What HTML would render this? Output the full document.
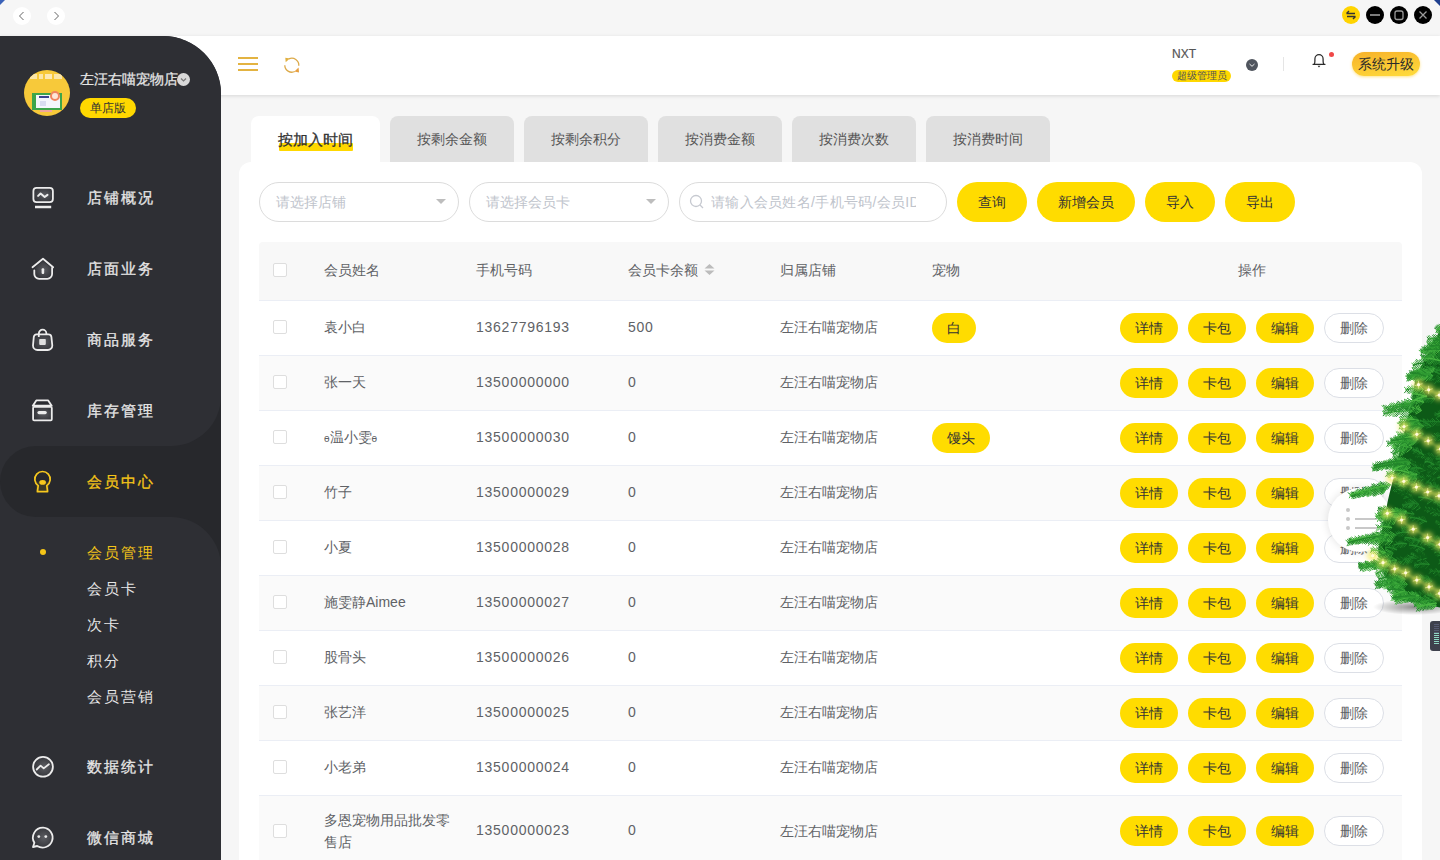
<!DOCTYPE html>
<html><head><meta charset="utf-8">
<style>
*{margin:0;padding:0;box-sizing:border-box}
html,body{width:1440px;height:860px;overflow:hidden;background:#f6f6f6;font-family:"Liberation Sans",sans-serif;position:relative}
.abs{position:absolute}
/* titlebar */
#titlebar{left:0;top:0;width:1440px;height:36px;background:#f6f6f6}
.navc{width:18px;height:18px;border-radius:50%;background:#fff;top:7px}
.winb{width:18px;height:18px;border-radius:50%;top:6px;background:#000}
/* sidebar */
#side{left:0;top:36px;width:221px;height:824px;background:#2e2f34;border-top-right-radius:58px;overflow:hidden;z-index:2}
.mi{left:0;width:221px;height:71px;color:#e6e6e6;font-size:16px;letter-spacing:1px}
.mi .t{position:absolute;left:87px;top:0;line-height:71px}
.mi svg{position:absolute;left:30px;top:24px}
.mt{left:87px;font-size:15px;color:#e6e6e6;letter-spacing:2px;line-height:22px;white-space:nowrap;-webkit-text-stroke-width:.3px}
/* header */
#header{left:0;top:36px;width:1440px;height:59px;background:#fff;box-shadow:0 1px 4px rgba(0,0,0,.13)}
/* tabs */
.tab{top:116px;height:46px;width:124px;background:#e0e0e0;border-radius:8px 8px 0 0;font-size:14px;color:#555;text-align:center;line-height:47px}
#panel{left:239px;top:162px;width:1183px;height:720px;background:#fff;border-radius:12px}
.sel{top:182px;height:40px;border:1px solid #dcdcdc;border-radius:20px;font-size:14px;color:#c0c4cc;line-height:38px;padding-left:16px}
.ybtn{top:182px;height:40px;border-radius:20px;background:#ffdc00;font-size:14px;color:#333;text-align:center;line-height:40px}
/* table */
.row{left:259px;width:1143px;height:55px;border-bottom:1px solid #ebeef5}
.row.st{background:#fafafa}
.c{position:absolute;font-size:14px;color:#606266;line-height:20px}
.num{letter-spacing:.75px}
.cb{position:absolute;left:14px;width:14px;height:14px;border:1px solid #dedede;border-radius:2px;background:#fff}
.ob{position:absolute;top:12px;width:58px;height:30px;border-radius:15px;background:#ffdc00;font-size:14px;color:#333;text-align:center;line-height:30px}
.ob.del{width:60px;background:#fff;border:1px solid #dcdfe6;line-height:28px;color:#606266}
.tag{position:absolute;top:12px;height:30px;border-radius:15px;background:#ffdc00;font-size:14px;color:#333;text-align:center;line-height:30px}
</style></head>
<body>
<div id="titlebar" class="abs"></div>
<div class="abs" style="left:0;top:0;width:0;height:0;border-top:5px solid #3a62b8;border-right:5px solid transparent"></div>
<div class="abs" style="left:1434px;top:0;width:0;height:0;border-top:6px solid #1f3f8f;border-left:6px solid transparent"></div>
<div class="abs navc" style="left:13px"><svg class="abs" style="left:0;top:0" width="18" height="18" viewBox="0 0 18 18"><path d="M10.5 5 L6.5 9 L10.5 13" fill="none" stroke="#666" stroke-width="1"/></svg></div>
<div class="abs navc" style="left:47px"><svg class="abs" style="left:0;top:0" width="18" height="18" viewBox="0 0 18 18"><path d="M7.5 5 L11.5 9 L7.5 13" fill="none" stroke="#666" stroke-width="1"/></svg></div>
<div class="abs winb" style="left:1342px;background:#ffd400"><svg class="abs" style="left:0;top:0" width="18" height="18" viewBox="0 0 18 18"><path d="M4.5 7.5 H13 M4.5 7.5 L7 5" fill="none" stroke="#333" stroke-width="1.4"/><path d="M13.5 10.5 H5 M13.5 10.5 L11 13" fill="none" stroke="#333" stroke-width="1.4"/></svg></div>
<div class="abs winb" style="left:1366px"><svg class="abs" style="left:0;top:0" width="18" height="18" viewBox="0 0 18 18"><path d="M4 9 H14" stroke="#9a9a9a" stroke-width="1.6"/></svg></div>
<div class="abs winb" style="left:1390px"><svg class="abs" style="left:0;top:0" width="18" height="18" viewBox="0 0 18 18"><rect x="5" y="5" width="8" height="8.5" rx="2" fill="none" stroke="#9a9a9a" stroke-width="1.3"/></svg></div>
<div class="abs winb" style="left:1414px"><svg class="abs" style="left:0;top:0" width="18" height="18" viewBox="0 0 18 18"><path d="M5.5 5.5 L12.5 12.5 M12.5 5.5 L5.5 12.5" stroke="#9a9a9a" stroke-width="1.3"/></svg></div>

<div id="side" class="abs"><div class="abs" style="left:121px;top:360px;width:100px;height:170px;background:#27282c"></div><div class="abs" style="left:0;top:0;width:221px;height:410px;background:#2e2f34;border-bottom-right-radius:50px"></div><div class="abs" style="left:0;top:410px;width:221px;height:71px;background:#27282c;border-radius:36px 0 0 36px"></div><div class="abs" style="left:0;top:481px;width:221px;height:400px;background:#2e2f34;border-top-right-radius:50px"></div><div class="abs" style="left:24px;top:34px;width:46px;height:46px;border-radius:50%;background:#f7c93a;overflow:hidden"><div class="abs" style="left:6px;top:4px;width:7px;height:5px;background:#fbe6a8"></div><div class="abs" style="left:15px;top:4px;width:4px;height:5px;background:#fbe6a8"></div><div class="abs" style="left:21px;top:4px;width:7px;height:5px;background:#fde9b5"></div><div class="abs" style="left:30px;top:4px;width:8px;height:5px;background:#fbe6a8"></div><div class="abs" style="left:8px;top:23px;width:30px;height:17px;background:#f4f6fb;border:2px solid #3da54a;border-left-width:4px"></div><div class="abs" style="left:15px;top:26px;width:10px;height:2px;background:#3b4690"></div><div class="abs" style="left:16px;top:31px;width:6px;height:5px;background:#d8dcef"></div><div class="abs" style="left:26px;top:21px;width:10px;height:10px;border-radius:50%;border:2px solid #f0855e;background:#fde6d8"></div><div class="abs" style="left:16px;top:40px;width:12px;height:2px;background:#f2a69a"></div></div><div class="abs" style="left:80px;top:33px;font-size:14px;color:#e6e6e6;line-height:20px;-webkit-text-stroke-width:.25px">左汪右喵宠物店</div><div class="abs" style="left:177px;top:37px;width:13px;height:13px;border-radius:50%;background:#d9d9d9"><svg class="abs" style="left:2px;top:2px" width="9" height="9" viewBox="0 0 9 9"><path d="M2 3.5 L4.5 6 L7 3.5" fill="none" stroke="#777" stroke-width="1.2"/></svg></div><div class="abs" style="left:80px;top:62px;width:56px;height:20px;border-radius:10px;background:#ffd800;font-size:12px;color:#333;text-align:center;line-height:20px">单店版</div><svg class="abs" style="left:28px;top:146px" width="30" height="30" viewBox="0 0 30 30"><defs><radialGradient id="ig" cx="0.55" cy="0.5" r="0.6"><stop offset="0" stop-color="#5c5d62"/><stop offset="1" stop-color="#303136"/></radialGradient></defs><rect x="5.4" y="5.8" width="19.5" height="14.3" rx="3.2" fill="url(#ig)" stroke="#ececec" stroke-width="1.8"/><path d="M10.1 13.9 L12.6 11.5 L16.7 15 L19.5 12.9" fill="none" stroke="#ececec" stroke-width="2" stroke-linecap="round" stroke-linejoin="round"/><path d="M7 25 H23.2" stroke="#ececec" stroke-width="2.4"/></svg><div class="abs mt" style="top:151px">店铺概况</div><svg class="abs" style="left:28px;top:217px" width="30" height="30" viewBox="0 0 30 30"><path d="M15 8 L23.5 15 V21 A4.5 4.5 0 0 1 19 25.5 H11 A4.5 4.5 0 0 1 6.5 21 V15Z" fill="url(#ig)"/><path d="M4.5 14.3 L15 5.8 L25.1 14.3" fill="none" stroke="#ececec" stroke-width="1.8" stroke-linecap="round" stroke-linejoin="round"/><path d="M6.3 17.3 V21 A4.8 4.8 0 0 0 11.1 25.8 H19.3 A4.8 4.8 0 0 0 24.1 21 V14.8" fill="none" stroke="#ececec" stroke-width="1.8" stroke-linecap="round"/><rect x="13.6" y="15.3" width="2.6" height="5.6" rx="1" fill="#ececec"/></svg><div class="abs mt" style="top:222px">店面业务</div><svg class="abs" style="left:28px;top:288px" width="30" height="30" viewBox="0 0 30 30"><path d="M10.8 11.5 V9.5 A3.8 3.8 0 0 1 18.4 9.5 V11.8" fill="none" stroke="#ececec" stroke-width="1.8"/><path d="M8.5 10.3 H20.5 A3 3 0 0 1 23.4 12.8 L24.3 21.5 A4.5 4.5 0 0 1 19.8 26 H9.5 A4.5 4.5 0 0 1 5 21.5 L5.8 12.8 A3 3 0 0 1 8.5 10.3Z" fill="url(#ig)" stroke="#ececec" stroke-width="1.8" stroke-linejoin="round"/><path d="M10.8 9.5 V13" stroke="#ececec" stroke-width="1.8"/><rect x="11.2" y="15" width="6.6" height="5.9" rx="0.8" fill="#e0e0e0"/></svg><div class="abs mt" style="top:293px">商品服务</div><svg class="abs" style="left:28px;top:359px" width="30" height="30" viewBox="0 0 30 30"><path d="M4.8 10.7 L8.3 5.4 H20.2 L23.7 10.7Z" fill="#2a2b30" stroke="#ececec" stroke-width="1.8" stroke-linejoin="round"/><rect x="5.1" y="11.9" width="18.7" height="13.4" rx="1" fill="url(#ig)" stroke="#ececec" stroke-width="1.8"/><rect x="9.4" y="16" width="9.4" height="3.2" rx="1.6" fill="#ececec"/></svg><div class="abs mt" style="top:364px">库存管理</div><svg class="abs" style="left:28px;top:430px" width="30" height="30" viewBox="0 0 30 30"><path d="M8 17 Q14.5 12 21 17 V25 H8Z" fill="#3d3a26"/><path d="M10.2 19.6 A7.7 7.7 0 1 1 18.8 19.6 L19.6 25.7 H9.4 Z" fill="none" stroke="#f7c81e" stroke-width="1.7" stroke-linejoin="round"/><ellipse cx="14.6" cy="16.4" rx="3.3" ry="2.4" fill="#f7c81e"/></svg><div class="abs mt" style="top:435px;color:#f5c518">会员中心</div><div class="abs mt" style="top:506px;color:#f5c518;-webkit-text-stroke-width:0">会员管理</div><div class="abs mt" style="top:542px;color:#e6e6e6;-webkit-text-stroke-width:0">会员卡</div><div class="abs mt" style="top:578px;color:#e6e6e6;-webkit-text-stroke-width:0">次卡</div><div class="abs mt" style="top:614px;color:#e6e6e6;-webkit-text-stroke-width:0">积分</div><div class="abs mt" style="top:650px;color:#e6e6e6;-webkit-text-stroke-width:0">会员营销</div><div class="abs" style="left:40px;top:513px;width:6px;height:6px;border-radius:50%;background:#f5c518"></div><svg class="abs" style="left:28px;top:715px" width="30" height="30" viewBox="0 0 30 30"><circle cx="15" cy="15.8" r="9.9" fill="url(#ig)" stroke="#ececec" stroke-width="1.8"/><path d="M8.7 18.5 L12.6 14.6 L15.7 17.4 L20.9 13.3" fill="none" stroke="#ececec" stroke-width="1.8" stroke-linecap="round" stroke-linejoin="round"/></svg><div class="abs mt" style="top:720px">数据统计</div><svg class="abs" style="left:28px;top:786px" width="30" height="30" viewBox="0 0 30 30"><path d="M15.2 5.6 A10 10 0 1 1 9.2 24 L5 25 L6.4 20.8 A10 10 0 0 1 15.2 5.6Z" fill="url(#ig)" stroke="#ececec" stroke-width="1.8" stroke-linejoin="round"/><circle cx="10.8" cy="14.6" r="1.4" fill="#ececec"/><circle cx="17.8" cy="14.6" r="1.4" fill="#ececec"/></svg><div class="abs mt" style="top:791px">微信商城</div>
</div>

<div id="header" class="abs"></div>
<svg class="abs" style="left:237px;top:56px" width="22" height="16" viewBox="0 0 22 16"><path d="M1 2 H21 M1 8 H21 M1 14 H21" stroke="#e3b341" stroke-width="2.2"/></svg>
<svg class="abs" style="left:282px;top:55px" width="20" height="20" viewBox="0 0 20 20"><path d="M6.8 3.9 A7 7 0 0 1 16.8 10.8" fill="none" stroke="#dcaa4a" stroke-width="1.3"/><path d="M2.8 10.2 A7 7 0 0 0 12.8 16.5" fill="none" stroke="#dcaa4a" stroke-width="1.3"/><path d="M3.3 2.8 L7.8 3.4 L3.7 7.3Z" fill="#e0b040"/><path d="M17 17.4 L12.4 16.4 L16.6 12.6Z" fill="#e8a040"/></svg>
<div class="abs" style="left:1172px;top:47px;font-size:12px;color:#555;line-height:15px;-webkit-text-stroke:.2px #555">NXT</div>
<div class="abs" style="left:1172px;top:70px;width:59px;height:12px;border-radius:6px;background:#ffd800;font-size:10px;color:#555;line-height:12px;text-align:center">超级管理员</div>
<div class="abs" style="left:1246px;top:59px;width:12px;height:12px;border-radius:50%;background:#50555e"><svg class="abs" style="left:1px;top:1px" width="10" height="10" viewBox="0 0 10 10"><path d="M2.5 4 L5 6.3 L7.5 4" fill="none" stroke="#eee" stroke-width="1"/></svg></div>
<div class="abs" style="left:1283px;top:57px;width:1px;height:14px;background:#e5e5e5"></div>
<svg class="abs" style="left:1311px;top:53px" width="16" height="16" viewBox="0 0 16 16"><path d="M2 11.3 H14 M3.2 11.3 Q3.9 10 3.9 8 V5.9 A4.1 4.3 0 0 1 12.1 5.9 V8 Q12.1 10 12.8 11.3" fill="none" stroke="#2a2a2a" stroke-width="1.25" stroke-linecap="round"/><path d="M6.6 12.7 H9.4 L8 14.4Z" fill="#2a2a2a"/></svg>
<div class="abs" style="left:1329px;top:52px;width:5px;height:5px;border-radius:50%;background:#f04848"></div>
<div class="abs" style="left:1352px;top:52px;width:68px;height:24px;border-radius:12px;background:linear-gradient(170deg,#f7b22a,#ffdc3c);box-shadow:0 1px 3px rgba(255,196,0,.45);font-size:14px;color:#2a2a2a;line-height:24px;text-align:center">系统升级</div>

<div class="abs tab" style="left:251px;width:129px;background:#fff;color:#222;font-weight:bold;font-size:15px"></div>
<div class="abs" style="left:279px;top:143px;width:74px;height:8px;background:#ffd800;border-radius:1px"></div>
<div class="abs" style="left:278px;top:129px;font-size:15px;color:#2a2a2a;line-height:22px;-webkit-text-stroke:.3px #333;color:#333">按加入时间</div>
<div class="abs tab" style="left:390px">按剩余金额</div>
<div class="abs tab" style="left:524px">按剩余积分</div>
<div class="abs tab" style="left:658px">按消费金额</div>
<div class="abs tab" style="left:792px">按消费次数</div>
<div class="abs tab" style="left:926px">按消费时间</div>

<div id="panel" class="abs"></div>
<div class="abs sel" style="left:259px;width:200px">请选择店铺</div>
<div class="abs" style="left:436px;top:199px;width:0;height:0;border-left:5px solid transparent;border-right:5px solid transparent;border-top:5px solid #bdbdbd"></div>
<div class="abs sel" style="left:469px;width:200px">请选择会员卡</div>
<div class="abs" style="left:646px;top:199px;width:0;height:0;border-left:5px solid transparent;border-right:5px solid transparent;border-top:5px solid #bdbdbd"></div>
<div class="abs sel" style="left:679px;width:268px;padding-left:31px"><div style="width:205px;overflow:hidden;white-space:nowrap;letter-spacing:.3px">请输入会员姓名/手机号码/会员ID</div></div>
<svg class="abs" style="left:689px;top:194px" width="16" height="16" viewBox="0 0 16 16"><circle cx="7" cy="7" r="5.5" fill="none" stroke="#c6c9d0" stroke-width="1.3"/><path d="M11 11 L14 14" stroke="#c6c9d0" stroke-width="1.3"/></svg>
<div class="abs ybtn" style="left:957px;width:70px">查询</div>
<div class="abs ybtn" style="left:1037px;width:98px">新增会员</div>
<div class="abs ybtn" style="left:1145px;width:70px">导入</div>
<div class="abs ybtn" style="left:1225px;width:70px">导出</div>

<div id="table"><div class="abs row" style="top:242px;height:59px;background:#f8f8f8;border-radius:4px 4px 0 0"><div class="cb" style="top:21px"></div><div class="c" style="left:65px;top:18px">会员姓名</div><div class="c" style="left:217px;top:18px">手机号码</div><div class="c" style="left:369px;top:18px">会员卡余额</div><svg class="abs" style="left:445px;top:21px" width="11" height="13" viewBox="0 0 11 13"><path d="M5.5 1 L10.5 5.5 H0.5Z M5.5 12 L10.5 7.5 H0.5Z" fill="#bcbcbc"/></svg><div class="c" style="left:521px;top:18px">归属店铺</div><div class="c" style="left:673px;top:18px">宠物</div><div class="c" style="left:979px;top:18px">操作</div></div><div class="abs row" style="top:301px"><div class="cb" style="top:19px"></div><div class="c" style="left:65px;top:16px">袁小白</div><div class="c num" style="left:217px;top:16px">13627796193</div><div class="c num" style="left:369px;top:16px">500</div><div class="c" style="left:521px;top:16px">左汪右喵宠物店</div><div class="tag" style="left:673px;width:44px">白</div><div class="ob" style="left:861px">详情</div><div class="ob" style="left:929px">卡包</div><div class="ob" style="left:997px">编辑</div><div class="ob del" style="left:1065px">删除</div></div><div class="abs row st" style="top:356px"><div class="cb" style="top:19px"></div><div class="c" style="left:65px;top:16px">张一天</div><div class="c num" style="left:217px;top:16px">13500000000</div><div class="c num" style="left:369px;top:16px">0</div><div class="c" style="left:521px;top:16px">左汪右喵宠物店</div><div class="ob" style="left:861px">详情</div><div class="ob" style="left:929px">卡包</div><div class="ob" style="left:997px">编辑</div><div class="ob del" style="left:1065px">删除</div></div><div class="abs row" style="top:411px"><div class="cb" style="top:19px"></div><div class="c" style="left:65px;top:16px"><span style='font-size:10px'>ɵ</span>温小雯<span style='font-size:10px'>ɵ</span></div><div class="c num" style="left:217px;top:16px">13500000030</div><div class="c num" style="left:369px;top:16px">0</div><div class="c" style="left:521px;top:16px">左汪右喵宠物店</div><div class="tag" style="left:673px;width:58px">馒头</div><div class="ob" style="left:861px">详情</div><div class="ob" style="left:929px">卡包</div><div class="ob" style="left:997px">编辑</div><div class="ob del" style="left:1065px">删除</div></div><div class="abs row st" style="top:466px"><div class="cb" style="top:19px"></div><div class="c" style="left:65px;top:16px">竹子</div><div class="c num" style="left:217px;top:16px">13500000029</div><div class="c num" style="left:369px;top:16px">0</div><div class="c" style="left:521px;top:16px">左汪右喵宠物店</div><div class="ob" style="left:861px">详情</div><div class="ob" style="left:929px">卡包</div><div class="ob" style="left:997px">编辑</div><div class="ob del" style="left:1065px">删除</div></div><div class="abs row" style="top:521px"><div class="cb" style="top:19px"></div><div class="c" style="left:65px;top:16px">小夏</div><div class="c num" style="left:217px;top:16px">13500000028</div><div class="c num" style="left:369px;top:16px">0</div><div class="c" style="left:521px;top:16px">左汪右喵宠物店</div><div class="ob" style="left:861px">详情</div><div class="ob" style="left:929px">卡包</div><div class="ob" style="left:997px">编辑</div><div class="ob del" style="left:1065px">删除</div></div><div class="abs row st" style="top:576px"><div class="cb" style="top:19px"></div><div class="c" style="left:65px;top:16px">施雯静Aimee</div><div class="c num" style="left:217px;top:16px">13500000027</div><div class="c num" style="left:369px;top:16px">0</div><div class="c" style="left:521px;top:16px">左汪右喵宠物店</div><div class="ob" style="left:861px">详情</div><div class="ob" style="left:929px">卡包</div><div class="ob" style="left:997px">编辑</div><div class="ob del" style="left:1065px">删除</div></div><div class="abs row" style="top:631px"><div class="cb" style="top:19px"></div><div class="c" style="left:65px;top:16px">股骨头</div><div class="c num" style="left:217px;top:16px">13500000026</div><div class="c num" style="left:369px;top:16px">0</div><div class="c" style="left:521px;top:16px">左汪右喵宠物店</div><div class="ob" style="left:861px">详情</div><div class="ob" style="left:929px">卡包</div><div class="ob" style="left:997px">编辑</div><div class="ob del" style="left:1065px">删除</div></div><div class="abs row st" style="top:686px"><div class="cb" style="top:19px"></div><div class="c" style="left:65px;top:16px">张艺洋</div><div class="c num" style="left:217px;top:16px">13500000025</div><div class="c num" style="left:369px;top:16px">0</div><div class="c" style="left:521px;top:16px">左汪右喵宠物店</div><div class="ob" style="left:861px">详情</div><div class="ob" style="left:929px">卡包</div><div class="ob" style="left:997px">编辑</div><div class="ob del" style="left:1065px">删除</div></div><div class="abs row" style="top:741px"><div class="cb" style="top:19px"></div><div class="c" style="left:65px;top:16px">小老弟</div><div class="c num" style="left:217px;top:16px">13500000024</div><div class="c num" style="left:369px;top:16px">0</div><div class="c" style="left:521px;top:16px">左汪右喵宠物店</div><div class="ob" style="left:861px">详情</div><div class="ob" style="left:929px">卡包</div><div class="ob" style="left:997px">编辑</div><div class="ob del" style="left:1065px">删除</div></div><div class="abs row st" style="top:796px;height:70px"><div class="cb" style="top:28px"></div><div class="c" style="left:65px;top:13px;width:135px;line-height:22px">多恩宠物用品批发零售店</div><div class="c num" style="left:217px;top:24px">13500000023</div><div class="c num" style="left:369px;top:24px">0</div><div class="c" style="left:521px;top:25px">左汪右喵宠物店</div><div class="ob" style="left:861px;top:20px">详情</div><div class="ob" style="left:929px;top:20px">卡包</div><div class="ob" style="left:997px;top:20px">编辑</div><div class="ob del" style="left:1065px;top:20px">删除</div></div></div>
<div class="abs" style="left:1328px;top:488px;width:64px;height:64px;border-radius:50%;background:#fff;box-shadow:0 0 8px rgba(0,0,0,.12)"></div>
<div class="abs" style="left:1346px;top:508px;width:4px;height:4px;border-radius:50%;background:#c8c8c8"></div>
<div class="abs" style="left:1346px;top:517px;width:4px;height:4px;border-radius:50%;background:#c8c8c8"></div>
<div class="abs" style="left:1346px;top:526px;width:4px;height:4px;border-radius:50%;background:#c8c8c8"></div>
<div class="abs" style="left:1355px;top:518px;width:22px;height:2px;background:#c8c8c8"></div>
<div class="abs" style="left:1355px;top:527px;width:22px;height:2px;background:#c8c8c8"></div>
<div class="abs" style="left:1430px;top:621px;width:14px;height:30px;border-radius:3px;background:#3e414c"><div class="abs" style="left:4px;top:3px;width:5px;height:9px;background:repeating-linear-gradient(#565b72 0 1px,transparent 1px 2px)"></div><div class="abs" style="left:4px;top:12px;width:5px;height:11px;background:repeating-linear-gradient(#8fd8c4 0 1px,transparent 1px 2px)"></div></div>
<svg id="tree" class="abs" style="left:1330px;top:310px" width="110" height="320" viewBox="0 0 110 320"><defs><radialGradient id="sh" cx="0.5" cy="0.5" r="0.5"><stop offset="0" stop-color="#000" stop-opacity=".45"/><stop offset="1" stop-color="#000" stop-opacity="0"/></radialGradient><filter id="bl" x="-3" y="-3" width="7" height="7"><feGaussianBlur stdDeviation="2.5"/></filter><filter id="bl2" x="-1" y="-1" width="3" height="3"><feGaussianBlur stdDeviation="1.2"/></filter></defs><ellipse cx="85" cy="297" rx="42" ry="8" fill="url(#sh)"/><polygon points="112.0,16.0 110.5,19.0 109.0,22.0 107.5,25.0 106.0,28.0 104.5,31.0 103.0,34.0 101.5,37.0 100.0,40.0 98.5,43.0 96.9,46.0 95.1,49.0 93.4,52.0 91.7,55.0 90.0,58.0 88.3,61.0 86.6,64.0 85.7,67.0 85.2,70.0 84.7,73.0 84.2,76.0 83.8,79.0 83.3,82.0 82.8,85.0 82.3,88.0 81.8,91.0 81.0,94.0 80.3,97.0 79.6,100.0 78.9,103.0 78.2,106.0 77.4,109.0 76.7,112.0 76.0,115.0 75.3,118.0 74.6,121.0 73.8,124.0 73.1,127.0 72.4,130.0 71.7,133.0 71.0,136.0 70.2,139.0 69.5,142.0 68.8,145.0 68.1,148.0 67.4,151.0 66.6,154.0 65.9,157.0 65.2,160.0 64.5,163.0 63.8,166.0 63.0,169.0 62.3,172.0 61.6,175.0 60.9,178.0 60.2,181.0 59.4,184.0 58.7,187.0 58.0,190.0 57.4,193.0 56.8,196.0 56.2,199.0 55.6,202.0 55.0,205.0 54.4,208.0 53.8,211.0 53.2,214.0 52.6,217.0 52.0,220.0 51.4,223.0 50.8,226.0 50.2,229.0 49.6,232.0 49.0,235.0 48.4,238.0 48.2,241.0 49.0,244.0 49.7,247.0 50.4,250.0 51.1,253.0 51.8,256.0 52.6,259.0 53.3,262.0 54.0,265.0 56.2,268.0 58.3,271.0 60.5,274.0 62.6,277.0 64.8,280.0 67.0,283.0 69.1,286.0 71.3,289.0 82.5,292.0 98.2,295.0 112,298 112,16" fill="#0d5a17"/><path d="M119.1 198.0Q111.1 192.1 103.0 190.1M120.5 195.2Q112.7 190.7 104.9 190.3M125.9 254.9Q117.6 251.3 109.3 251.8M124.7 34.1Q118.9 29.3 113.2 28.5M81.9 217.5Q76.6 216.3 71.2 219.1M114.3 125.9Q104.5 125.1 94.8 128.3M122.6 135.5Q115.1 134.3 107.5 137.1M122.5 219.1Q113.9 213.3 105.3 211.5M91.4 249.7Q85.8 244.8 80.2 244.0M116.7 232.5Q110.3 228.1 103.9 227.6M120.2 248.7Q112.4 243.0 104.7 241.3M83.2 250.1Q76.0 248.9 68.8 251.7M130.3 256.8Q122.2 252.9 114.1 252.9M72.8 205.8Q65.8 204.5 58.8 207.2M123.7 49.5Q116.1 44.1 108.6 42.7M113.8 157.9Q108.7 153.9 103.7 154.0M123.7 54.2Q118.2 51.2 112.7 52.2M102.1 271.1Q95.7 267.2 89.3 267.4M115.3 68.1Q106.6 67.6 97.9 71.1M98.6 230.9Q89.0 230.1 79.4 233.4M77.9 205.4Q70.7 201.3 63.6 201.3M96.6 284.4Q88.3 281.5 80.0 282.6M98.7 292.7Q91.2 287.2 83.7 285.8M126.9 181.4Q119.5 178.3 112.1 179.2M129.4 62.9Q120.2 57.9 111.0 56.8M137.1 286.6Q127.4 286.3 117.8 289.9M90.4 197.9Q84.4 194.5 78.4 195.0M94.0 180.7Q84.7 177.3 75.3 178.0M96.0 168.5Q88.1 165.9 80.1 167.2M114.8 103.8Q109.6 102.8 104.5 105.9M117.3 152.0Q111.9 147.3 106.4 146.6M110.2 179.2Q103.1 173.6 95.9 172.0M114.8 263.8Q107.2 260.6 99.6 261.3M107.4 290.0Q99.8 284.9 92.2 283.9" stroke="#17701f" stroke-width="1.3" fill="none"/><path d="M119.1 198.0l-6.3 2.1M115.5 196.3l-4.6 1.5M113.7 195.4l-4.5 1.5M110.2 193.6l-1.0 -3.1M108.4 192.7l-1.4 -4.0M106.6 191.8l-1.2 -3.4M104.8 191.0l-0.8 -2.3M127.0 229.0l-4.5 5.3M127.0 229.0l-5.3 -4.5M125.1 229.2l-4.1 4.9M121.2 229.5l-2.2 2.6M125.9 107.5l-3.9 3.8M118.5 107.3l-2.2 2.1M118.5 107.3l-2.1 -2.2M116.6 107.3l-2.2 2.1M74.7 250.2l-4.4 -3.4M70.9 250.7l-4.4 -3.3M68.9 251.0l-3.3 4.4M67.0 251.2l-3.4 4.5M61.2 252.0l-2.8 -2.1M57.4 252.6l-1.7 2.2M57.4 252.6l-2.2 -1.7M104.1 288.2l-3.4 1.3M88.2 243.7l-1.3 -3.9M74.9 178.6l-3.1 3.2M73.0 178.6l-4.1 -4.0M71.0 178.7l-2.9 3.1M71.0 178.7l-3.1 -2.9M67.2 178.8l-2.8 -2.7M120.5 195.2l-2.1 -4.1M118.8 194.6l-3.9 2.0M117.1 194.1l-5.6 2.9M117.1 194.1l-2.9 -5.6M115.3 193.6l-3.1 1.6M113.6 193.0l-3.4 1.8M108.4 191.4l-3.2 1.6M122.2 254.2l-5.1 3.5M116.7 253.2l-4.2 2.9M113.0 252.5l-2.2 1.5M94.0 145.4l-4.9 1.6M87.4 142.0l-4.7 1.5M85.8 141.1l-0.8 -2.5M84.2 140.2l-2.7 0.8M124.7 34.1l-1.5 -4.5M119.7 31.7l-3.0 1.0M114.8 29.3l-2.7 0.9M127.0 24.1l-2.8 3.7M117.8 25.3l-2.6 3.4M78.4 218.0l-2.9 -2.1M76.6 218.3l-3.6 -2.6M74.8 218.6l-3.8 -2.8M73.0 218.9l-1.6 2.1M63.0 239.1l-4.6 3.2M57.0 237.9l-1.4 -2.1M112.0 181.4l-4.5 1.5M110.3 180.6l-2.0 -5.8M107.0 179.0l-4.7 1.6M107.0 179.0l-1.6 -4.7M102.1 176.5l-1.2 -3.6M112.3 126.1l-5.0 -3.9M108.4 126.6l-3.4 4.4M106.5 126.8l-2.5 3.2M98.7 127.8l-2.1 2.7M98.7 127.8l-2.7 -2.1M111.5 35.5l-3.0 1.1M102.9 64.7l-3.7 -3.1M99.2 65.0l-2.2 2.7M99.2 65.0l-2.7 -2.2M97.4 65.2l-1.8 -1.5M111.6 204.0l-1.9 -3.5M109.8 203.4l-5.1 2.7M109.8 203.4l-2.7 -5.1M104.3 201.7l-2.3 -4.3M100.6 200.6l-3.6 1.9M89.5 131.4l-3.9 -4.6M87.4 131.2l-2.7 -3.2M83.2 130.8l-3.1 -3.7M81.1 130.6l-3.0 2.5M120.7 135.7l-4.0 5.0M115.1 136.3l-2.3 2.9M111.3 136.7l-2.8 3.4M109.4 136.9l-1.5 1.8M119.1 217.6l-5.1 1.9M113.9 215.3l-1.8 -4.6M112.2 214.5l-1.2 -3.3M107.0 212.2l-0.8 -2.1M91.4 249.7l-1.5 -4.5M87.7 247.8l-3.2 1.0M85.8 246.8l-3.4 1.1M85.8 246.8l-1.1 -3.4M93.7 268.4l-4.2 3.4M89.6 267.9l-2.7 2.2M114.9 231.8l-3.7 1.7M113.0 231.1l-1.8 -4.0M111.2 230.4l-1.7 -3.7M107.6 229.0l-1.6 -3.6M104.8 161.2l-3.9 -4.5M100.9 160.9l-3.1 2.7M107.3 237.5l-6.2 2.1M104.0 235.8l-5.5 1.9M102.3 235.0l-1.4 -4.2M97.3 232.5l-2.8 0.9M94.0 230.9l-0.8 -2.5M128.3 100.3l-3.4 -2.5M122.3 101.1l-2.8 3.8M118.4 101.7l-2.6 -2.0M116.4 102.0l-1.7 2.3M115.2 60.8l-3.9 4.5M113.1 60.9l-4.5 -3.9M120.2 248.7l-1.7 -4.8M118.4 247.9l-1.4 -4.1M116.7 247.1l-1.6 -4.5M113.3 245.5l-1.0 -2.9M75.4 223.0l-3.7 -3.0M73.5 223.2l-2.6 3.2M71.6 223.4l-3.4 -2.7M67.8 223.8l-1.9 2.4M83.2 250.1l-2.5 3.1M77.8 250.7l-2.1 2.6M77.8 250.7l-2.6 -2.1M126.7 255.9l-3.0 1.9M124.9 255.5l-3.1 1.9M121.3 254.6l-1.8 -2.9M117.7 253.8l-1.6 -2.5M70.8 206.0l-3.5 4.2M62.8 206.8l-2.6 3.2M123.2 55.2l-3.8 -4.3M121.2 55.1l-4.9 4.3M115.3 54.8l-2.1 1.9M113.4 54.6l-2.3 2.0M111.4 54.5l-1.8 1.6M124.4 211.1l-3.5 -5.2M120.5 210.3l-2.7 1.8M116.7 209.6l-3.6 2.5M112.8 208.8l-2.6 1.8M122.9 40.0l-4.7 1.8M119.5 38.5l-3.6 1.4M117.8 37.7l-1.4 -3.6M70.2 176.0l-2.0 -4.6M117.0 46.5l-4.0 1.5M117.0 46.5l-1.5 -4.0M115.3 45.7l-1.8 -4.7M113.6 45.0l-3.4 1.3M110.3 43.5l-1.2 -3.1M126.9 78.9l-5.5 4.1M124.9 78.6l-2.6 -3.6M123.0 78.3l-3.8 2.8M119.1 77.7l-1.9 -2.6M112.1 157.2l-5.6 2.5M110.4 156.6l-2.2 -4.9M118.2 53.2l-2.8 2.0M116.4 52.9l-3.3 2.3M116.4 52.9l-2.3 -3.3M114.6 52.6l-1.7 -2.4M127.1 106.3l-3.6 -3.7M123.5 106.3l-3.2 3.1M123.5 106.3l-3.1 -3.2M119.8 106.2l-2.4 -2.5M114.4 106.2l-2.4 -2.5M88.0 230.9l-2.0 -3.3M84.2 229.9l-3.6 2.1M80.3 229.0l-3.2 1.9M98.4 270.0l-2.7 -5.0M94.8 268.9l-3.9 2.2M94.8 268.9l-2.2 -3.9M93.0 268.4l-3.8 2.1M83.1 193.8l-3.0 4.5M79.5 194.5l-4.4 -3.0M76.0 195.2l-1.6 2.4M104.3 154.9l-6.0 2.7M102.4 154.2l-2.3 -4.9M100.5 153.5l-2.3 -5.1M114.9 37.8l-5.2 2.1M114.9 37.8l-2.1 -5.2M113.1 37.0l-1.6 -4.1M109.4 35.5l-3.4 1.3M107.6 34.7l-3.5 1.4M94.9 239.4l-5.4 3.1M93.1 239.0l-2.7 -4.7M91.3 238.5l-5.0 2.9M87.8 237.5l-2.5 -4.4M86.0 237.1l-2.5 1.4M115.9 291.7l-2.0 -5.1M113.4 68.5l-3.2 -2.2M111.4 68.8l-2.7 3.9M107.6 69.5l-3.2 4.5M99.8 70.8l-1.9 -1.4M92.9 231.7l-2.5 3.3M90.9 231.9l-3.4 -2.6M87.1 232.4l-3.3 -2.5M131.7 126.2l-3.2 4.0M131.7 126.2l-4.0 -3.2M128.1 126.6l-2.8 3.5M128.1 126.6l-3.5 -2.8M124.4 127.0l-3.1 -2.5M122.6 127.2l-3.9 -3.2M117.2 127.8l-2.5 -2.0M96.2 160.1l-6.2 1.8M87.8 155.5l-3.4 1.0M86.1 154.6l-1.0 -3.3M82.7 152.8l-1.1 -3.7M81.0 151.9l-3.5 1.0M68.9 202.8l-2.9 1.6M67.2 202.3l-1.6 -3.0M115.6 52.1l-4.2 2.5M115.6 52.1l-2.5 -4.2M113.7 51.6l-5.1 3.0M111.8 51.1l-2.6 -4.3M108.0 50.1l-2.6 1.5M118.5 32.0l-1.7 -3.6M114.8 30.6l-1.4 -3.1M113.0 30.0l-2.9 1.4M84.9 194.3l-3.0 3.2M89.8 163.4l-6.3 2.8M87.9 162.7l-4.1 1.8M86.0 162.0l-4.3 1.9M82.2 160.5l-3.9 1.7M82.2 160.5l-1.7 -3.9M80.3 159.8l-2.9 1.3M80.3 159.8l-1.3 -2.9M125.4 166.2l-3.9 4.8M121.7 166.6l-3.1 3.7M118.0 166.9l-3.5 -2.9M110.6 167.7l-2.6 -2.1M96.6 284.4l-3.6 -4.5M94.8 284.2l-3.0 -3.7M91.1 283.8l-2.8 2.3M91.1 283.8l-2.3 -2.8M89.2 283.6l-3.0 2.4M121.3 147.6l-4.6 1.8M114.2 144.5l-1.4 -3.5M112.5 143.7l-4.4 1.7M104.7 147.7l-3.4 -4.5M100.9 147.2l-3.2 -4.2M89.3 145.7l-2.3 1.7M129.6 47.6l-4.0 -4.0M127.6 47.6l-3.3 3.3M127.6 47.6l-3.3 -3.3M121.7 47.6l-2.8 2.8M121.3 44.7l-3.4 3.1M121.3 44.7l-3.1 -3.4M115.7 44.5l-3.5 3.2M115.7 44.5l-3.2 -3.5M112.0 44.3l-2.8 -3.1M82.4 204.1l-5.0 4.4M77.0 203.8l-3.1 2.7M75.2 203.7l-3.3 -3.7M67.9 203.2l-2.8 2.5M98.7 292.7l-6.1 2.2M97.0 291.9l-4.7 1.7M92.0 289.6l-1.9 -5.1M90.4 288.8l-4.1 1.5M88.7 288.1l-3.0 1.1M87.0 287.3l-3.6 1.3M101.2 116.6l-5.2 1.6M96.1 113.9l-5.0 1.6M91.1 111.3l-2.4 0.7M121.8 156.5l-2.8 -2.8M115.4 156.5l-2.5 2.5M115.4 156.5l-2.5 -2.5M119.5 180.3l-2.8 -3.8M115.8 179.8l-2.8 2.1M129.4 62.9l-2.1 -4.1M122.0 60.5l-4.3 2.2M116.5 58.7l-1.4 -2.7M114.7 58.0l-3.8 1.9M128.3 35.6l-5.3 4.6M126.5 35.4l-3.3 2.9M113.9 34.6l-2.6 2.2M112.1 34.4l-2.8 2.4M88.1 117.5l-3.5 4.0M88.1 117.5l-4.0 -3.5M86.3 117.7l-3.9 4.4M86.3 117.7l-4.4 -3.9M80.7 118.0l-1.8 2.0M104.6 167.9l-2.9 3.5M102.7 168.0l-4.2 -3.4M100.8 168.2l-3.4 4.2M93.3 169.0l-3.5 -2.9M89.5 169.4l-1.8 -1.4M125.8 199.0l-3.9 4.1M121.9 199.2l-2.9 3.1M112.0 199.5l-2.7 -2.5M135.1 287.0l-4.4 -3.1M133.2 287.3l-3.1 -2.2M131.3 287.6l-3.3 -2.3M121.7 289.3l-2.3 -1.6M119.7 289.6l-2.1 -1.5M90.7 158.9l-2.6 -2.9M86.8 158.8l-2.2 -2.4M84.8 158.7l-1.8 -2.0M86.4 197.0l-4.8 2.9M84.4 196.5l-3.0 1.8M84.4 196.5l-1.8 -3.0M82.4 196.0l-3.9 2.4M82.4 196.0l-2.4 -3.9M130.7 217.2l-2.6 -3.7M128.7 216.9l-2.1 -3.0M122.8 215.9l-3.6 2.6M118.8 215.2l-2.0 -2.8M113.1 235.8l-2.9 -4.7M109.1 234.8l-5.1 3.1M105.1 233.8l-4.1 2.5M105.1 233.8l-2.5 -4.1M80.8 248.8l-4.1 -2.8M78.8 249.2l-3.4 -2.3M92.2 180.4l-3.2 -4.3M88.4 179.9l-2.6 -3.5M86.6 179.6l-2.9 -3.9M80.9 178.8l-2.6 1.9M79.1 178.5l-2.5 1.9M77.2 178.3l-3.0 2.2M77.2 178.3l-2.2 -3.0M134.7 178.7l-5.0 3.5M131.1 178.1l-2.5 -3.6M129.3 177.8l-3.4 -4.7M125.8 177.2l-2.8 -4.0M120.4 176.3l-1.6 -2.2M92.1 168.2l-4.2 3.6M92.1 168.2l-3.6 -4.2M90.1 168.0l-3.0 -3.6M84.1 167.5l-2.6 2.2M84.1 167.5l-2.2 -2.6M82.1 167.4l-2.1 1.8M105.1 88.8l-4.2 4.9M105.1 88.8l-4.9 -4.2M103.0 89.0l-2.8 3.3M101.0 89.2l-3.1 3.7M98.9 89.3l-3.4 -2.9M96.9 89.5l-1.9 2.2M114.8 103.8l-3.5 5.2M114.8 103.8l-5.2 -3.5M112.7 104.2l-4.1 -2.8M110.7 104.6l-2.0 3.0M110.7 104.6l-3.0 -2.0M108.6 105.1l-2.6 3.8M106.6 105.5l-2.7 -1.8M112.2 61.9l-3.9 2.1M110.5 61.4l-4.5 2.4M108.7 60.9l-2.6 -4.9M107.0 60.4l-5.1 2.8M107.0 60.4l-2.8 -5.1M105.3 59.8l-2.2 -4.1M103.5 59.3l-1.8 -3.3M79.1 186.9l-5.9 1.9M77.4 186.1l-3.3 1.1M77.4 186.1l-1.1 -3.3M123.7 102.9l-2.7 3.1M121.9 103.0l-3.0 -2.6M120.1 103.2l-3.3 3.8M112.7 103.7l-2.4 2.7M110.9 103.9l-3.2 -2.7M127.7 121.3l-3.3 2.9M120.2 120.8l-2.7 -3.0M118.3 120.7l-1.8 1.6M76.8 233.7l-2.9 3.6M69.3 234.5l-3.1 3.8M65.6 234.8l-2.4 2.9M95.5 254.6l-2.7 -2.4M91.7 254.8l-3.0 -2.7M89.8 254.9l-2.8 3.2M87.9 255.1l-2.8 3.2M87.9 255.1l-3.2 -2.8M86.0 255.2l-2.2 -1.9M93.6 229.2l-2.7 3.9M91.7 229.5l-1.8 2.7M107.9 63.7l-1.2 -3.3M106.1 62.9l-5.0 1.8M104.3 62.0l-3.5 1.2M110.2 179.2l-5.4 1.8M108.4 178.3l-5.3 1.8M106.6 177.4l-1.9 -5.7M104.8 176.5l-4.3 1.4M104.8 176.5l-1.4 -4.3M99.5 173.8l-1.2 -3.7M97.7 172.9l-0.8 -2.4M114.8 263.8l-4.0 2.9M103.4 261.9l-2.4 -3.3M101.5 261.6l-2.8 2.0M101.5 261.6l-2.0 -2.8M109.5 289.7l-6.0 2.5M107.6 288.9l-2.0 -4.8M105.7 288.1l-1.3 -3.2M104.5 112.3l-3.0 3.1M102.6 112.4l-2.4 2.5M102.6 112.4l-2.5 -2.4M100.7 112.4l-3.3 3.4M96.9 112.5l-1.9 -1.8M95.0 112.5l-1.5 1.6M95.0 112.5l-1.6 -1.5M107.5 49.9l-3.1 -2.1M103.7 50.6l-3.2 4.6M117.6 49.2l-2.3 -4.2M115.7 48.7l-4.2 2.3M115.7 48.7l-2.3 -4.2M102.3 287.9l-5.0 2.2M102.3 287.9l-2.2 -5.0M98.9 286.6l-1.5 -3.5M95.5 285.3l-2.5 1.1M87.2 175.4l-3.0 2.3M93.1 210.9l-4.0 2.3M89.4 209.9l-1.6 -2.9M87.5 209.4l-1.4 -2.5M85.6 208.9l-3.4 2.0M81.9 207.8l-2.0 1.1M72.4 261.8l-4.8 2.7M68.9 260.8l-3.6 2.0M97.3 189.0l-2.3 -3.5M91.9 187.9l-1.4 -2.1M112.7 151.3l-3.8 1.6M110.9 150.6l-1.5 -3.5M109.1 149.9l-1.6 -3.7M107.2 149.2l-1.5 -3.4" stroke="#1d7d27" stroke-width="0.9" fill="none"/><path d="M119.1 198.0l-2.1 -6.3M117.3 197.1l-6.1 2.1M113.7 195.4l-1.5 -4.5M108.4 192.7l-4.0 1.4M104.8 191.0l-2.3 0.8M119.2 229.7l-2.1 -1.8M117.3 229.8l-2.6 -2.2M125.9 107.5l-3.8 -3.9M124.0 107.4l-3.2 3.1M122.2 107.4l-4.2 4.0M120.3 107.3l-3.0 2.9M112.9 107.2l-2.6 2.5M72.8 250.4l-2.9 3.8M67.0 251.2l-4.5 -3.4M65.1 251.5l-2.5 -1.9M59.3 252.3l-1.5 2.0M99.0 285.8l-3.7 1.4M95.3 247.2l-1.7 -4.9M93.5 246.3l-1.7 -5.1M118.8 194.6l-2.0 -3.9M115.3 193.6l-1.6 -3.1M111.9 192.5l-2.9 1.5M110.1 191.9l-1.7 -3.2M125.9 254.9l-3.2 -4.7M116.7 253.2l-2.9 -4.2M114.8 252.8l-2.8 1.9M90.7 143.7l-3.9 1.2M121.4 32.5l-1.5 -4.5M116.5 30.1l-3.8 1.3M114.8 29.3l-0.9 -2.7M125.2 24.4l-2.8 3.6M115.9 25.5l-2.0 2.6M115.9 25.5l-2.6 -2.0M81.9 217.5l-4.1 -3.0M80.2 217.7l-5.3 -3.8M78.4 218.0l-2.1 2.9M76.6 218.3l-2.6 3.6M66.9 239.8l-3.6 -5.2M65.0 239.4l-4.4 3.0M63.0 239.1l-3.2 -4.6M59.0 238.3l-2.1 -3.0M105.4 178.1l-1.4 -4.2M103.7 177.3l-3.5 1.2M103.7 177.3l-1.2 -3.5M114.3 125.9l-4.5 -3.5M110.4 126.4l-3.5 4.5M96.7 128.1l-1.8 2.3M96.7 128.1l-2.3 -1.8M117.2 38.1l-2.1 -5.7M113.4 36.3l-1.4 -3.7M111.5 35.5l-1.1 -3.0M108.3 64.2l-3.9 4.7M104.7 64.5l-2.7 3.3M104.7 64.5l-3.3 -2.7M97.4 65.2l-1.5 1.8M106.1 202.3l-2.8 1.5M102.5 201.2l-1.4 -2.5M98.8 200.1l-1.2 -2.2M97.0 199.5l-3.0 1.6M89.5 131.4l-4.6 3.9M85.3 131.0l-3.6 3.0M83.2 130.8l-3.7 3.1M81.1 130.6l-2.5 -3.0M120.7 135.7l-5.0 -4.0M118.8 135.9l-3.0 -2.4M115.1 136.3l-2.9 -2.3M113.2 136.5l-2.4 2.9M109.4 136.9l-1.8 -1.5M120.8 218.4l-5.6 2.2M119.1 217.6l-1.9 -5.1M117.3 216.8l-4.3 1.6M117.3 216.8l-1.6 -4.3M115.6 216.1l-1.8 -4.6M108.7 213.0l-2.7 1.0M108.7 213.0l-1.0 -2.7M107.0 212.2l-2.1 0.8M87.7 247.8l-1.0 -3.2M99.8 269.0l-3.5 -4.4M97.8 268.8l-2.5 -3.1M95.7 268.6l-3.1 2.5M95.7 268.6l-2.5 -3.1M113.0 231.1l-4.0 1.8M107.6 229.0l-3.6 1.6M105.8 228.3l-2.7 1.2M105.8 228.3l-1.2 -2.7M104.8 161.2l-4.5 3.9M102.9 161.0l-3.2 -3.7M98.9 160.8l-2.1 1.9M98.9 160.8l-1.9 -2.1M109.0 238.3l-4.7 1.6M107.3 237.5l-2.1 -6.2M105.7 236.6l-3.5 1.2M102.3 235.0l-4.2 1.4M95.6 231.7l-2.9 1.0M94.0 230.9l-2.5 0.8M126.3 100.6l-2.6 3.5M120.4 101.4l-2.5 3.3M118.4 101.7l-2.0 2.6M114.4 102.3l-1.7 2.2M112.5 102.6l-2.1 2.8M113.1 60.9l-3.9 4.5M111.0 61.1l-3.2 3.7M111.0 61.1l-3.7 -3.2M108.8 61.2l-2.6 -2.3M120.2 248.7l-4.8 1.7M116.7 247.1l-4.5 1.6M109.9 243.8l-4.4 1.6M108.1 243.0l-1.3 -3.7M79.2 222.6l-3.8 4.6M79.2 222.6l-4.6 -3.8M77.3 222.8l-3.5 -2.9M75.4 223.0l-3.0 3.7M71.6 223.4l-2.7 3.4M69.7 223.6l-2.0 2.4M81.4 250.3l-3.8 4.8M79.6 250.5l-3.9 -3.1M76.0 250.9l-4.1 -3.3M74.2 251.1l-2.3 2.9M72.4 251.3l-2.9 -2.3M123.1 255.1l-4.4 2.7M117.7 253.8l-2.5 1.6M115.9 253.4l-3.0 1.9M115.9 253.4l-1.9 -3.0M68.8 206.2l-3.1 -2.6M66.8 206.4l-2.4 -2.0M60.8 207.0l-2.0 2.5M119.3 55.0l-2.6 2.3M117.3 54.9l-2.3 -2.6M111.4 54.5l-1.6 -1.8M128.3 211.8l-4.5 3.0M122.5 210.7l-4.0 2.7M114.7 209.2l-1.7 -2.6M122.9 40.0l-1.8 -4.7M121.2 39.2l-3.7 1.4M116.1 36.9l-3.2 1.2M74.1 177.6l-5.6 2.4M74.1 177.6l-2.4 -5.6M72.2 176.8l-4.8 2.1M68.3 175.3l-3.6 1.6M68.3 175.3l-1.6 -3.6M66.4 174.5l-3.4 1.5M66.4 174.5l-1.5 -3.4M123.7 49.5l-2.5 -6.5M120.3 48.0l-1.7 -4.5M119.1 77.7l-2.6 1.9M113.8 157.9l-4.6 2.0M112.1 157.2l-2.5 -5.6M108.7 155.9l-1.8 -4.1M107.0 155.3l-1.4 -3.2M122.8 133.9l-2.9 2.9M120.7 133.9l-2.7 -2.8M118.6 133.9l-2.7 2.6M120.1 53.5l-3.4 -4.8M114.6 52.6l-2.4 1.7M127.1 106.3l-3.7 3.6M125.3 106.3l-3.6 -3.7M121.7 106.3l-2.7 2.6M118.0 106.2l-3.0 -3.1M114.4 106.2l-2.5 2.4M82.3 229.5l-3.9 2.3M82.3 229.5l-2.3 -3.9M102.1 271.1l-2.2 -3.9M98.4 270.0l-5.0 2.7M96.6 269.5l-2.1 -3.9M83.1 193.8l-4.5 -3.0M81.3 194.1l-3.7 -2.5M79.5 194.5l-3.0 4.4M77.7 194.8l-3.1 -2.1M76.0 195.2l-2.4 -1.6M104.3 154.9l-2.7 -6.0M98.5 152.7l-1.2 -2.7M96.6 152.0l-1.1 -2.5M116.7 38.6l-4.2 1.6M111.3 36.2l-3.7 1.4M93.1 239.0l-4.7 2.7M84.2 236.6l-4.0 2.3M82.4 236.1l-2.1 -3.7M80.6 235.6l-1.5 -2.6M114.1 290.9l-1.6 -4.2M112.3 290.1l-1.3 -3.4M110.5 289.3l-4.4 1.7M108.8 288.5l-1.1 -2.8M115.3 68.1l-4.0 5.6M115.3 68.1l-5.6 -4.0M109.5 69.1l-3.3 -2.3M105.6 69.8l-3.9 -2.7M93.5 124.3l-2.0 -4.6M90.0 122.9l-1.6 -3.8M84.7 120.8l-2.6 1.1M83.0 120.1l-2.6 1.1M98.6 230.9l-4.2 -3.3M96.7 231.2l-3.4 4.3M96.7 231.2l-4.3 -3.4M92.9 231.7l-3.3 -2.5M87.1 232.4l-2.5 3.3M85.2 232.6l-2.6 -2.0M81.3 233.1l-3.0 -2.3M129.9 126.4l-4.2 5.3M126.3 126.8l-3.6 -2.9M124.4 127.0l-2.5 3.1M120.8 127.4l-2.8 3.5M120.8 127.4l-3.5 -2.8M119.0 127.6l-3.4 -2.7M115.4 128.0l-2.5 3.1M115.4 128.0l-3.1 -2.5M113.6 128.2l-1.6 1.9M94.5 159.2l-4.9 1.5M94.5 159.2l-1.5 -4.9M92.9 158.3l-5.5 1.6M91.2 157.4l-3.5 1.1M91.2 157.4l-1.1 -3.5M84.4 153.7l-0.9 -2.9M77.9 205.4l-4.7 2.6M77.9 205.4l-2.6 -4.7M74.3 204.4l-2.0 -3.6M72.5 203.8l-4.7 2.6M67.2 202.3l-3.0 1.6M65.4 201.8l-2.3 1.3M113.7 51.6l-3.0 -5.1M106.1 49.6l-3.6 2.1M104.2 49.1l-2.8 1.7M116.6 31.3l-4.8 2.2M114.8 30.6l-3.1 1.4M111.2 29.3l-1.3 -2.8M86.7 194.3l-4.1 4.3M83.0 194.4l-3.3 -3.1M81.2 194.4l-3.1 -2.9M89.8 163.4l-2.8 -6.3M125.4 166.2l-4.8 -3.9M123.6 166.4l-3.9 4.8M121.7 166.6l-3.7 -3.1M114.3 167.3l-3.6 -3.0M112.5 167.5l-3.2 -2.6M110.6 167.7l-2.1 2.6M92.9 284.0l-3.5 2.8M87.4 283.4l-2.9 -3.6M83.7 283.0l-1.7 -2.1M81.9 282.8l-1.9 1.5M81.9 282.8l-1.5 -1.9M121.3 147.6l-1.8 -4.6M116.0 145.3l-4.8 1.9M116.0 145.3l-1.9 -4.8M108.9 142.2l-0.9 -2.2M104.7 147.7l-4.5 3.4M102.8 147.5l-5.4 4.1M102.8 147.5l-4.1 -5.4M97.0 146.7l-2.9 2.2M97.0 146.7l-2.2 -2.9M87.4 145.4l-2.4 1.8M131.6 47.6l-2.9 -2.9M129.6 47.6l-4.0 4.0M125.7 47.6l-2.9 2.9M123.1 44.8l-4.8 4.3M113.8 44.4l-3.1 2.8M112.0 44.3l-3.1 2.8M84.2 204.2l-3.2 2.9M77.0 203.8l-2.7 -3.1M71.5 203.4l-3.6 3.2M98.7 292.7l-2.2 -6.1M97.0 291.9l-1.7 -4.7M93.7 290.4l-5.0 1.8M92.0 289.6l-5.1 1.9M99.5 115.7l-5.7 1.8M99.5 115.7l-1.8 -5.7M97.8 114.8l-1.5 -4.8M94.5 113.0l-4.6 1.4M91.1 111.3l-0.7 -2.4M123.9 156.5l-4.5 -4.5M121.8 156.5l-2.8 2.8M119.6 156.5l-3.9 -3.9M117.5 156.5l-2.4 2.4M117.5 156.5l-2.4 -2.4M125.1 181.1l-3.8 -5.2M121.4 180.6l-2.9 2.1M127.6 62.3l-2.1 -4.2M125.7 61.7l-2.0 -4.0M123.9 61.1l-3.3 1.7M123.9 61.1l-1.7 -3.3M122.0 60.5l-2.2 -4.3M114.7 58.0l-1.9 -3.8M128.3 35.6l-4.6 -5.3M126.5 35.4l-2.9 -3.3M122.9 35.2l-3.1 -3.6M121.1 35.1l-3.3 2.8M119.3 34.9l-2.6 2.2M119.3 34.9l-2.2 -2.6M117.5 34.8l-2.7 -3.2M115.7 34.7l-2.8 -3.2M80.7 118.0l-2.0 -1.8M106.5 167.7l-2.9 3.5M98.9 168.4l-2.9 -2.4M95.2 168.8l-2.9 3.5M93.3 169.0l-2.9 3.5M123.8 199.1l-4.2 4.5M119.9 199.3l-2.3 2.5M117.9 199.3l-3.3 -3.1M114.0 199.5l-2.2 2.3M131.3 287.6l-2.3 3.3M129.4 287.9l-2.7 -1.9M125.5 288.6l-2.4 3.4M121.7 289.3l-1.6 2.3M88.7 158.9l-3.7 3.4M82.9 158.6l-1.6 -1.7M90.4 197.9l-2.5 -4.2M126.7 216.5l-3.3 -4.7M122.8 215.9l-2.6 -3.6M118.8 215.2l-2.8 2.0M113.1 235.8l-4.7 2.9M111.1 235.3l-3.0 -5.0M109.1 234.8l-3.1 -5.1M101.1 232.8l-3.2 1.9M82.8 248.4l-3.5 5.2M82.8 179.1l-3.8 2.8M132.9 178.4l-4.1 2.9M132.9 178.4l-2.9 -4.1M127.6 177.5l-4.1 2.9M124.0 176.9l-2.4 -3.3M120.4 176.3l-2.2 1.6M118.6 176.0l-2.8 2.0M118.6 176.0l-2.0 -2.8M96.0 168.5l-4.2 -5.0M90.1 168.0l-3.6 3.0M86.1 167.7l-3.1 -3.6M94.8 89.7l-2.7 -2.3M112.2 61.9l-2.1 -3.9M108.7 60.9l-4.9 2.6M82.5 188.6l-4.6 1.5M82.5 188.6l-1.5 -4.6M79.1 186.9l-1.9 -5.9M75.7 185.2l-1.4 -4.2M74.0 184.3l-2.9 0.9M74.0 184.3l-0.9 -2.9M70.6 182.6l-3.0 1.0M68.9 181.8l-1.1 -3.4M67.2 180.9l-3.1 1.0M67.2 180.9l-1.0 -3.1M109.0 104.0l-2.0 2.3M125.8 121.1l-3.3 -3.7M122.0 120.9l-2.7 -3.1M74.9 233.9l-3.4 4.2M74.9 233.9l-4.2 -3.4M71.2 234.3l-2.5 3.1M65.6 234.8l-2.9 -2.4M99.4 254.4l-4.0 4.5M97.5 254.5l-3.9 -3.5M95.5 254.6l-2.4 2.7M93.6 254.7l-2.9 3.3M117.3 152.0l-2.1 -6.3M115.5 151.1l-1.8 -5.4M110.1 148.4l-1.3 -3.9M108.3 147.5l-0.8 -2.4M101.1 68.5l-5.7 2.9M99.2 67.9l-1.8 -3.4M95.3 66.6l-1.5 -3.0M99.1 228.2l-3.3 4.7M95.4 228.9l-3.5 -2.5M91.7 229.5l-2.7 -1.8M89.9 229.9l-3.1 -2.2M88.0 230.2l-1.9 2.7M88.0 230.2l-2.7 -1.9M86.1 230.5l-2.2 3.2M84.3 230.9l-2.3 -1.6M111.4 65.4l-1.3 -3.6M109.7 64.6l-3.6 1.3M107.9 63.7l-3.3 1.2M104.3 62.0l-1.2 -3.5M100.7 60.3l-3.4 1.2M110.2 179.2l-1.8 -5.4M97.7 172.9l-2.4 0.8M114.8 263.8l-2.9 -4.0M112.9 263.5l-4.0 2.8M111.0 263.2l-3.1 2.2M109.1 262.9l-4.6 3.3M107.2 262.6l-2.5 -3.5M105.3 262.2l-1.7 -2.3M105.7 288.1l-3.2 1.3M103.9 287.4l-1.7 -4.0M112.1 112.2l-4.0 4.1M110.2 112.2l-3.8 3.9M108.3 112.3l-2.8 2.9M98.8 112.4l-2.2 2.3M107.5 49.9l-2.1 3.1M105.6 50.2l-3.9 -2.7M101.8 50.9l-3.0 -2.1M112.0 47.6l-2.3 1.3M112.0 47.6l-1.3 -2.3M110.1 47.1l-2.8 1.5M105.7 289.3l-2.6 -5.9M104.0 288.6l-3.5 1.5M100.6 287.3l-3.3 1.4M94.8 176.5l-4.0 -5.2M92.9 176.2l-3.9 2.9M91.0 176.0l-4.6 3.5M89.1 175.7l-2.5 1.9M85.4 175.2l-3.5 2.6M85.4 175.2l-2.6 -3.5M83.5 174.9l-2.6 2.0M96.9 211.9l-3.2 -5.6M95.0 211.4l-3.1 -5.4M93.1 210.9l-2.3 -4.0M89.4 209.9l-2.9 1.6M85.6 208.9l-2.0 -3.4M83.8 208.3l-1.7 -2.9M81.9 207.8l-1.1 -2.0M74.2 262.3l-3.3 1.9M72.4 261.8l-2.7 -4.8M70.7 261.3l-2.6 -4.6M68.9 260.8l-2.0 -3.6M67.2 260.3l-2.3 -4.0M63.7 259.4l-2.1 1.2M63.7 259.4l-1.2 -2.1M101.0 189.8l-4.2 2.8M101.0 189.8l-2.8 -4.2M99.1 189.4l-2.8 -4.3M95.5 188.7l-2.9 -4.4M118.1 153.5l-2.5 -5.7M114.5 152.1l-3.0 1.3" stroke="#17701f" stroke-width="0.9" fill="none"/><path d="M117.3 197.1l-2.1 -6.1M112.0 194.5l-1.6 -4.6M123.1 229.4l-2.6 3.1M121.2 229.5l-2.6 -2.2M119.2 229.7l-1.8 2.1M117.3 229.8l-2.2 2.6M124.0 107.4l-3.1 -3.2M114.8 107.2l-2.3 2.2M114.8 107.2l-2.2 -2.3M112.9 107.2l-2.5 -2.6M74.7 250.2l-3.4 4.4M72.8 250.4l-3.8 -2.9M70.9 250.7l-3.3 4.4M68.9 251.0l-4.4 -3.3M63.2 251.8l-2.0 2.6M63.2 251.8l-2.6 -2.0M107.6 289.7l-1.5 -4.0M105.9 289.0l-1.4 -3.8M102.4 287.4l-4.9 1.8M97.1 248.0l-1.5 -4.3M95.3 247.2l-4.9 1.7M93.5 246.3l-5.1 1.7M91.8 245.4l-4.5 1.5M91.8 245.4l-1.5 -4.5M90.0 244.6l-4.2 1.4M90.0 244.6l-1.4 -4.2M88.2 243.7l-3.9 1.3M78.8 178.5l-3.7 3.9M78.8 178.5l-3.9 -3.7M76.8 178.5l-3.1 3.3M73.0 178.6l-4.0 4.1M69.1 178.7l-3.3 -3.1M65.2 178.8l-2.4 -2.3M108.4 191.4l-1.6 -3.2M106.7 190.8l-1.0 -2.0M125.9 254.9l-4.7 3.2M124.1 254.5l-3.8 2.6M124.1 254.5l-2.6 -3.8M120.4 253.9l-3.6 2.5M113.0 252.5l-1.5 -2.2M94.0 145.4l-1.6 -4.9M92.3 144.5l-5.6 1.8M90.7 143.7l-1.2 -3.9M89.1 142.8l-5.2 1.6M124.7 34.1l-4.5 1.5M123.0 33.3l-5.5 1.9M123.0 33.3l-1.9 -5.5M119.7 31.7l-1.0 -3.0M118.1 30.9l-3.3 1.1M118.1 30.9l-1.1 -3.3M127.0 24.1l-3.7 -2.8M125.2 24.4l-3.6 -2.8M123.3 24.6l-4.1 -3.2M121.5 24.8l-3.4 -2.7M66.9 239.8l-5.2 3.6M61.0 238.7l-3.3 2.2M59.0 238.3l-3.0 2.1M57.0 237.9l-2.1 1.4M112.0 181.4l-1.5 -4.5M110.3 180.6l-5.8 2.0M108.7 179.8l-5.3 1.8M105.4 178.1l-4.2 1.4M106.5 126.8l-3.2 -2.5M104.5 127.1l-2.3 3.0M102.6 127.3l-2.2 2.9M102.6 127.3l-2.9 -2.2M100.6 127.6l-3.3 -2.6M117.2 38.1l-5.7 2.1M115.3 37.2l-4.5 1.7M106.5 64.4l-4.1 4.8M106.5 64.4l-4.8 -4.1M101.0 64.8l-2.0 2.4M101.0 64.8l-2.4 -2.0M113.4 204.5l-4.0 2.1M113.4 204.5l-2.1 -4.0M107.9 202.9l-2.8 -5.2M102.5 201.2l-2.5 1.4M85.3 131.0l-3.0 -3.6M79.0 130.5l-2.4 2.0M122.6 135.5l-4.3 5.3M117.0 136.1l-3.3 4.1M111.3 136.7l-3.4 -2.8M122.5 219.1l-4.9 1.9M120.8 218.4l-2.2 -5.6M115.6 216.1l-4.6 1.8M112.2 214.5l-3.3 1.2M110.5 213.8l-1.0 -2.7M89.6 248.7l-4.4 1.5M89.6 248.7l-1.5 -4.4M82.1 245.0l-2.4 0.8M91.7 268.1l-3.4 2.8M89.6 267.9l-2.2 -2.7M87.6 267.7l-2.9 2.3M87.6 267.7l-2.3 -2.9M116.7 232.5l-2.4 -5.4M111.2 230.4l-3.7 1.7M109.4 229.7l-4.2 1.9M108.8 161.5l-4.6 4.0M102.9 161.0l-3.7 3.2M100.9 160.9l-2.7 -3.1M109.0 238.3l-1.6 -4.7M105.7 236.6l-1.2 -3.5M97.3 232.5l-0.9 -2.8M95.6 231.7l-1.0 -2.9M122.3 101.1l-3.8 -2.8M120.4 101.4l-3.3 -2.5M114.4 102.3l-2.2 -1.7M108.8 61.2l-2.3 2.6M106.7 61.3l-2.6 -2.3M118.4 247.9l-4.1 1.4M113.3 245.5l-2.9 1.0M108.1 243.0l-3.7 1.3M106.4 242.2l-0.8 -2.3M77.3 222.8l-2.9 3.5M73.5 223.2l-3.2 -2.6M83.2 250.1l-3.1 -2.5M81.4 250.3l-4.8 -3.8M74.2 251.1l-2.9 -2.3M126.7 255.9l-1.9 -3.0M123.1 255.1l-2.7 -4.4M119.5 254.2l-1.7 -2.7M72.8 205.8l-4.9 -4.0M68.8 206.2l-2.6 3.1M64.8 206.6l-2.2 2.6M64.8 206.6l-2.6 -2.2M62.8 206.8l-3.2 -2.6M60.8 207.0l-2.5 -2.0M121.2 55.1l-4.3 -4.9M113.4 54.6l-2.0 -2.3M128.3 211.8l-3.0 -4.5M126.4 211.4l-4.5 3.0M124.4 211.1l-5.2 3.5M118.6 209.9l-2.6 1.7M118.6 209.9l-1.7 -2.6M124.6 40.7l-6.6 2.5M124.6 40.7l-2.5 -6.6M121.2 39.2l-1.4 -3.7M119.5 38.5l-1.4 -3.6M116.1 36.9l-1.2 -3.2M123.7 49.5l-6.5 2.5M122.0 48.7l-4.6 1.7M122.0 48.7l-1.7 -4.6M120.3 48.0l-4.5 1.7M118.7 47.2l-5.3 2.0M115.3 45.7l-4.7 1.8M113.6 45.0l-1.3 -3.4M121.1 78.0l-3.5 2.5M121.1 78.0l-2.5 -3.5M117.2 77.4l-2.2 1.7M117.2 77.4l-1.7 -2.2M113.8 157.9l-2.0 -4.6M108.7 155.9l-4.1 1.8M107.0 155.3l-3.2 1.4M105.3 154.6l-2.6 1.2M105.3 154.6l-1.2 -2.6M118.6 133.9l-2.6 -2.7M116.4 133.8l-3.0 2.9M116.4 133.8l-2.9 -3.0M121.9 53.9l-3.3 2.3M129.0 106.4l-3.5 3.4M116.2 106.2l-2.1 2.1M116.2 106.2l-2.1 -2.1M90.0 231.4l-5.8 3.4M90.0 231.4l-3.4 -5.8M88.0 230.9l-3.3 2.0M86.1 230.4l-4.2 2.5M84.2 229.9l-2.1 -3.6M80.3 229.0l-1.9 -3.2M78.4 228.5l-2.2 -3.8M76.5 228.0l-1.5 -2.6M84.9 193.4l-3.2 4.8M100.5 153.5l-5.1 2.3M98.5 152.7l-2.7 1.2M111.3 36.2l-1.4 -3.7M109.4 35.5l-1.3 -3.4M94.9 239.4l-3.1 -5.4M91.3 238.5l-2.9 -5.0M89.6 238.0l-2.5 -4.3M87.8 237.5l-4.4 2.5M82.4 236.1l-3.7 2.1M80.6 235.6l-2.6 1.5M117.7 292.5l-2.3 -6.1M112.3 290.1l-3.4 1.3M108.8 288.5l-2.8 1.1M107.0 287.7l-2.3 0.9M107.6 69.5l-4.5 -3.2M105.6 69.8l-2.7 3.9M103.7 70.1l-2.7 3.8M101.7 70.5l-1.5 2.1M99.8 70.8l-1.4 1.9M91.8 123.6l-5.0 2.1M91.8 123.6l-2.1 -5.0M90.0 122.9l-3.8 1.6M83.0 120.1l-1.1 -2.6M98.6 230.9l-3.3 4.2M94.8 231.4l-3.8 4.9M94.8 231.4l-4.9 -3.8M90.9 231.9l-2.6 3.4M85.2 232.6l-2.0 2.6M83.3 232.9l-1.6 2.0M83.3 232.9l-2.0 -1.6M81.3 233.1l-2.3 3.0M119.0 127.6l-2.7 3.4M117.2 127.8l-2.0 2.5M113.6 128.2l-1.9 -1.6M96.2 160.1l-1.8 -6.2M92.9 158.3l-1.6 -5.5M89.5 156.5l-4.9 1.5M89.5 156.5l-1.5 -4.9M87.8 155.5l-1.0 -3.4M76.1 204.9l-5.7 3.1M76.1 204.9l-3.1 -5.7M72.5 203.8l-2.6 -4.7M70.7 203.3l-3.7 2.0M70.7 203.3l-2.0 -3.7M68.9 202.8l-1.6 -2.9M65.4 201.8l-1.3 -2.3M109.9 50.6l-4.5 2.7M109.9 50.6l-2.7 -4.5M106.1 49.6l-2.1 -3.6M104.2 49.1l-1.7 -2.8M120.3 32.6l-2.0 -4.4M113.0 30.0l-1.4 -2.9M111.2 29.3l-2.8 1.3M79.3 194.5l-1.8 2.0M79.3 194.5l-2.0 -1.8M119.9 166.8l-3.4 4.2M118.0 166.9l-2.9 3.5M114.3 167.3l-3.0 3.6M112.5 167.5l-2.6 3.2M108.8 167.8l-1.6 1.9M108.8 167.8l-1.9 -1.6M94.8 284.2l-3.7 3.0M92.9 284.0l-2.8 -3.5M89.2 283.6l-2.4 -3.0M87.4 283.4l-3.6 2.9M85.5 283.2l-2.5 -3.1M83.7 283.0l-2.1 1.7M117.8 146.0l-3.2 1.3M112.5 143.7l-1.7 -4.4M110.7 143.0l-4.1 1.6M110.7 143.0l-1.6 -4.1M98.9 147.0l-3.1 -4.1M93.1 146.2l-1.7 -2.2M91.2 145.9l-3.0 2.3M87.4 145.4l-1.8 -2.4M119.7 47.6l-3.1 3.1M117.8 47.6l-1.7 -1.7M125.0 44.9l-3.1 2.8M125.0 44.9l-2.8 -3.1M123.1 44.8l-4.3 -4.8M119.4 44.7l-2.9 -3.2M113.8 44.4l-2.8 -3.1M82.4 204.1l-4.4 -5.0M80.6 204.0l-3.0 2.7M80.6 204.0l-2.7 -3.0M78.8 203.9l-4.3 3.8M75.2 203.7l-3.7 3.3M73.4 203.5l-2.0 -2.3M71.5 203.4l-3.2 -3.6M69.7 203.3l-2.1 1.9M95.3 291.1l-5.2 1.9M95.3 291.1l-1.9 -5.2M93.7 290.4l-1.8 -5.0M90.4 288.8l-1.5 -4.1M101.2 116.6l-1.6 -5.2M92.8 112.2l-3.6 1.1M92.8 112.2l-1.1 -3.6M126.9 181.4l-2.8 -3.8M123.2 180.9l-3.1 -4.2M115.8 179.8l-2.1 -2.8M118.3 59.3l-4.0 2.0M116.5 58.7l-2.7 1.4M112.8 57.4l-3.4 1.7M112.8 57.4l-1.7 -3.4M124.7 35.3l-4.5 3.9M124.7 35.3l-3.9 -4.5M121.1 35.1l-2.8 -3.3M117.5 34.8l-3.2 2.7M90.0 117.4l-3.2 3.6M82.6 117.9l-1.8 2.0M106.5 167.7l-3.5 -2.9M104.6 167.9l-3.5 -2.9M102.7 168.0l-3.4 4.2M98.9 168.4l-2.4 2.9M97.0 168.6l-2.1 2.6M97.0 168.6l-2.6 -2.1M91.4 169.2l-1.8 2.2M91.4 169.2l-2.2 -1.8M127.8 199.0l-3.9 4.2M127.8 199.0l-4.2 -3.9M123.8 199.1l-4.5 -4.2M121.9 199.2l-3.1 -2.9M117.9 199.3l-3.1 3.3M114.0 199.5l-2.3 -2.2M137.1 286.6l-4.2 -3.0M135.1 287.0l-3.1 4.4M133.2 287.3l-2.2 3.1M129.4 287.9l-1.9 2.7M127.4 288.3l-1.9 2.7M127.4 288.3l-2.7 -1.9M119.7 289.6l-1.5 2.1M92.6 159.0l-4.4 4.0M92.6 159.0l-4.0 -4.4M90.7 158.9l-2.9 2.6M86.8 158.8l-2.4 2.2M88.4 197.4l-4.1 2.5M88.4 197.4l-2.5 -4.1M86.4 197.0l-2.9 -4.8M130.7 217.2l-3.7 2.6M128.7 216.9l-3.0 2.1M124.8 216.2l-2.0 -2.8M120.8 215.5l-2.3 -3.3M111.1 235.3l-5.0 3.0M107.1 234.3l-2.9 1.7M84.9 248.0l-2.3 3.4M84.9 248.0l-3.4 -2.3M74.7 250.0l-1.5 2.2M74.7 250.0l-2.2 -1.5M94.0 180.7l-5.7 4.2M92.2 180.4l-4.3 3.2M90.3 180.2l-4.1 3.0M90.3 180.2l-3.0 -4.1M88.4 179.9l-3.5 2.6M84.7 179.3l-2.9 -3.9M82.8 179.1l-2.8 -3.8M80.9 178.8l-1.9 -2.6M79.1 178.5l-1.9 -2.5M134.7 178.7l-3.5 -5.0M131.1 178.1l-3.6 2.5M125.8 177.2l-4.0 2.8M122.2 176.6l-2.5 1.8M96.0 168.5l-5.0 4.2M94.0 168.3l-2.7 -3.2M88.1 167.9l-2.7 2.3M86.1 167.7l-3.6 3.1M82.1 167.4l-1.8 -2.1M103.0 89.0l-3.3 -2.8M101.0 89.2l-3.7 -3.1M96.9 89.5l-2.2 -1.9M92.8 89.8l-2.2 2.6M112.7 104.2l-2.8 4.1M106.6 105.5l-1.8 2.7M101.8 58.8l-1.4 -2.7M100.1 58.3l-2.1 1.2M100.1 58.3l-1.2 -2.1M98.3 57.8l-3.0 1.6M80.8 187.8l-4.0 1.3M75.7 185.2l-4.2 1.4M72.3 183.5l-3.4 1.1M68.9 181.8l-3.4 1.1M125.6 102.7l-3.3 3.9M125.6 102.7l-3.9 -3.3M123.7 102.9l-3.1 -2.7M116.4 103.4l-3.4 -2.9M114.5 103.6l-2.8 3.3M114.5 103.6l-3.3 -2.8M112.7 103.7l-2.7 -2.4M109.0 104.0l-2.3 -2.0M131.5 121.5l-3.9 -4.4M129.6 121.4l-3.5 -4.0M125.8 121.1l-3.7 3.3M123.9 121.0l-2.3 2.0M120.2 120.8l-3.0 2.7M76.8 233.7l-3.6 -2.9M67.4 234.6l-1.7 2.1M67.4 234.6l-2.1 -1.7M97.5 254.5l-3.5 3.9M91.7 254.8l-2.7 3.0M89.8 254.9l-3.2 -2.8M113.7 150.2l-3.6 1.2M111.9 149.3l-3.4 1.1M111.9 149.3l-1.1 -3.4M108.3 147.5l-2.4 0.8M101.1 68.5l-2.9 -5.7M99.2 67.9l-3.4 1.8M97.2 67.2l-4.8 2.4M93.3 66.0l-3.8 1.9M93.3 66.0l-1.9 -3.8M99.1 228.2l-4.7 -3.3M97.3 228.5l-2.4 3.5M97.3 228.5l-3.5 -2.4M86.1 230.5l-3.2 -2.2M113.2 66.3l-4.2 1.5M113.2 66.3l-1.5 -4.2M111.4 65.4l-3.6 1.3M109.7 64.6l-1.3 -3.6M106.1 62.9l-1.8 -5.0M102.5 61.2l-0.9 -2.4M108.4 178.3l-1.8 -5.3M106.6 177.4l-5.7 1.9M103.1 175.6l-1.3 -3.9M99.5 173.8l-3.7 1.2M112.9 263.5l-2.8 -4.0M107.2 262.6l-3.5 2.5M103.4 261.9l-3.3 2.4M111.4 290.4l-6.2 2.6M111.4 290.4l-2.6 -6.2M103.9 287.4l-4.0 1.7M102.0 286.6l-3.5 1.5M112.1 112.2l-4.1 -4.0M108.3 112.3l-2.9 -2.8M98.8 112.4l-2.3 -2.2M109.4 49.5l-3.5 5.1M109.4 49.5l-5.1 -3.5M105.6 50.2l-2.7 3.9M101.8 50.9l-2.1 3.0M99.9 51.3l-2.5 3.6M99.9 51.3l-3.6 -2.5M98.0 51.6l-2.8 -1.9M117.6 49.2l-4.2 2.3M113.8 48.1l-2.0 -3.6M110.1 47.1l-1.5 -2.8M107.4 290.0l-3.8 1.6M107.4 290.0l-1.6 -3.8M105.7 289.3l-5.9 2.6M100.6 287.3l-1.4 -3.3M98.9 286.6l-3.5 1.5M97.2 285.9l-3.4 1.5M97.2 285.9l-1.5 -3.4M95.5 285.3l-1.1 -2.5M93.9 284.6l-2.0 0.9M93.9 284.6l-0.9 -2.0M94.8 176.5l-5.2 4.0M89.1 175.7l-1.9 -2.5M83.5 174.9l-2.0 -2.6M96.9 211.9l-5.6 3.2M91.2 210.4l-3.9 2.2M87.5 209.4l-2.5 1.4M83.8 208.3l-2.9 1.7M77.7 263.3l-4.0 2.2M74.2 262.3l-1.9 -3.3M65.4 259.9l-2.5 1.4M65.4 259.9l-1.4 -2.5M102.8 190.2l-3.9 -5.9M99.1 189.4l-4.3 2.8M97.3 189.0l-3.5 2.3M95.5 188.7l-4.4 2.9M93.7 188.3l-2.6 -3.9M91.9 187.9l-2.1 1.4M90.0 187.6l-2.1 1.4M90.0 187.6l-1.4 -2.1M119.9 154.2l-6.4 2.8M118.1 153.5l-5.7 2.5M116.3 152.8l-3.5 1.5M116.3 152.8l-1.5 -3.5M114.5 152.1l-1.3 -3.0M112.7 151.3l-1.6 -3.8M109.1 149.9l-3.7 1.6M107.2 149.2l-3.4 1.5" stroke="#0f5f19" stroke-width="0.9" fill="none"/><path d="M115.5 196.3l-1.5 -4.6M112.0 194.5l-4.6 1.6M110.2 193.6l-3.1 1.0M106.6 191.8l-3.4 1.2M125.1 229.2l-4.9 -4.1M123.1 229.4l-3.1 -2.6M122.2 107.4l-4.0 -4.2M120.3 107.3l-2.9 -3.0M116.6 107.3l-2.1 -2.2M65.1 251.5l-1.9 2.5M61.2 252.0l-2.1 2.8M59.3 252.3l-2.0 -1.5M107.6 289.7l-4.0 1.5M105.9 289.0l-3.8 1.4M104.1 288.2l-1.3 -3.4M102.4 287.4l-1.8 -4.9M100.7 286.6l-3.0 1.1M100.7 286.6l-1.1 -3.0M99.0 285.8l-1.4 -3.7M97.1 248.0l-4.3 1.5M76.8 178.5l-3.3 -3.1M74.9 178.6l-3.2 -3.1M69.1 178.7l-3.1 3.3M67.2 178.8l-2.7 2.8M65.2 178.8l-2.3 2.4M120.5 195.2l-4.1 2.1M113.6 193.0l-1.8 -3.4M111.9 192.5l-1.5 -2.9M110.1 191.9l-3.2 1.7M106.7 190.8l-2.0 1.0M122.2 254.2l-3.5 -5.1M120.4 253.9l-2.5 -3.6M118.5 253.5l-2.8 1.9M118.5 253.5l-1.9 -2.8M114.8 252.8l-1.9 -2.8M111.1 252.1l-2.7 1.9M111.1 252.1l-1.9 -2.7M92.3 144.5l-1.8 -5.6M89.1 142.8l-1.6 -5.2M87.4 142.0l-1.5 -4.7M85.8 141.1l-2.5 0.8M84.2 140.2l-0.8 -2.7M121.4 32.5l-4.5 1.5M116.5 30.1l-1.3 -3.8M130.8 23.7l-2.5 3.2M130.8 23.7l-3.2 -2.5M128.9 23.9l-3.9 5.0M128.9 23.9l-5.0 -3.9M123.3 24.6l-3.2 4.1M121.5 24.8l-2.7 3.4M119.6 25.1l-1.8 2.3M119.6 25.1l-2.3 -1.8M117.8 25.3l-3.4 -2.6M81.9 217.5l-3.0 4.1M80.2 217.7l-3.8 5.3M74.8 218.6l-2.8 3.8M73.0 218.9l-2.1 -1.6M65.0 239.4l-3.0 -4.4M61.0 238.7l-2.2 -3.3M108.7 179.8l-1.8 -5.3M102.1 176.5l-3.6 1.2M114.3 125.9l-3.5 4.5M112.3 126.1l-3.9 5.0M110.4 126.4l-4.5 -3.5M108.4 126.6l-4.4 -3.4M104.5 127.1l-3.0 -2.3M100.6 127.6l-2.6 3.3M115.3 37.2l-1.7 -4.5M113.4 36.3l-3.7 1.4M109.6 34.6l-2.9 1.1M109.6 34.6l-1.1 -2.9M108.3 64.2l-4.7 -3.9M102.9 64.7l-3.1 3.7M111.6 204.0l-3.5 1.9M107.9 202.9l-5.2 2.8M106.1 202.3l-1.5 -2.8M104.3 201.7l-4.3 2.3M100.6 200.6l-1.9 -3.6M98.8 200.1l-2.2 1.2M97.0 199.5l-1.6 -3.0M87.4 131.2l-3.2 2.7M79.0 130.5l-2.0 -2.4M122.6 135.5l-5.3 -4.3M118.8 135.9l-2.4 3.0M117.0 136.1l-4.1 -3.3M113.2 136.5l-2.9 -2.4M122.5 219.1l-1.9 -4.9M113.9 215.3l-4.6 1.8M110.5 213.8l-2.7 1.0M91.4 249.7l-4.5 1.5M83.9 245.9l-3.4 1.1M83.9 245.9l-1.1 -3.4M82.1 245.0l-0.8 -2.4M99.8 269.0l-4.4 3.5M97.8 268.8l-3.1 2.5M93.7 268.4l-3.4 -4.2M91.7 268.1l-2.8 -3.4M116.7 232.5l-5.4 2.4M114.9 231.8l-1.7 -3.7M109.4 229.7l-1.9 -4.2M108.8 161.5l-4.0 -4.6M106.8 161.3l-3.8 3.3M106.8 161.3l-3.3 -3.8M104.0 235.8l-1.9 -5.5M100.7 234.2l-3.6 1.2M100.7 234.2l-1.2 -3.6M99.0 233.3l-4.7 1.6M99.0 233.3l-1.6 -4.7M128.3 100.3l-2.5 3.4M126.3 100.6l-3.5 -2.6M124.3 100.8l-2.8 3.8M124.3 100.8l-3.8 -2.8M116.4 102.0l-2.3 -1.7M112.5 102.6l-2.8 -2.1M115.2 60.8l-4.5 -3.9M106.7 61.3l-2.3 2.6M115.0 246.3l-4.1 1.4M115.0 246.3l-1.4 -4.1M111.6 244.6l-4.2 1.5M111.6 244.6l-1.5 -4.2M109.9 243.8l-1.6 -4.4M106.4 242.2l-2.3 0.8M69.7 223.6l-2.4 -2.0M67.8 223.8l-2.4 -1.9M79.6 250.5l-3.1 3.9M76.0 250.9l-3.3 4.1M72.4 251.3l-2.3 2.9M70.6 251.5l-1.5 1.8M70.6 251.5l-1.8 -1.5M130.3 256.8l-4.0 2.4M130.3 256.8l-2.4 -4.0M128.5 256.3l-5.3 3.2M128.5 256.3l-3.2 -5.3M124.9 255.5l-1.9 -3.1M121.3 254.6l-2.9 1.8M119.5 254.2l-2.7 1.7M72.8 205.8l-4.0 4.9M70.8 206.0l-4.2 -3.5M66.8 206.4l-2.0 2.4M123.2 55.2l-4.3 3.8M119.3 55.0l-2.3 -2.6M117.3 54.9l-2.6 2.3M115.3 54.8l-1.9 -2.1M126.4 211.4l-3.0 -4.5M122.5 210.7l-2.7 -4.0M120.5 210.3l-1.8 -2.7M116.7 209.6l-2.5 -3.6M114.7 209.2l-2.6 1.7M112.8 208.8l-1.8 -2.6M117.8 37.7l-3.6 1.4M72.2 176.8l-2.1 -4.8M70.2 176.0l-4.6 2.0M118.7 47.2l-2.0 -5.3M112.0 44.2l-4.1 1.5M112.0 44.2l-1.5 -4.1M110.3 43.5l-3.1 1.2M126.9 78.9l-4.1 -5.5M124.9 78.6l-3.6 2.6M123.0 78.3l-2.8 -3.8M110.4 156.6l-4.9 2.2M122.8 133.9l-2.9 -2.9M120.7 133.9l-2.8 2.7M114.3 133.8l-3.0 2.9M114.3 133.8l-2.9 -3.0M123.7 54.2l-4.9 3.5M123.7 54.2l-3.5 -4.9M121.9 53.9l-2.3 -3.3M120.1 53.5l-4.8 3.4M118.2 53.2l-2.0 -2.8M129.0 106.4l-3.4 -3.5M125.3 106.3l-3.7 3.6M121.7 106.3l-2.6 -2.7M119.8 106.2l-2.5 2.4M118.0 106.2l-3.1 3.0M86.1 230.4l-2.5 -4.2M78.4 228.5l-3.8 2.2M76.5 228.0l-2.6 1.5M102.1 271.1l-3.9 2.2M100.2 270.5l-4.6 2.5M100.2 270.5l-2.5 -4.6M96.6 269.5l-3.9 2.1M93.0 268.4l-2.1 -3.8M91.1 267.9l-3.0 1.7M91.1 267.9l-1.7 -3.0M84.9 193.4l-4.8 -3.2M81.3 194.1l-2.5 3.7M77.7 194.8l-2.1 3.1M74.2 195.5l-1.4 2.1M74.2 195.5l-2.1 -1.4M102.4 154.2l-4.9 2.3M96.6 152.0l-2.5 1.1M116.7 38.6l-1.6 -4.2M113.1 37.0l-4.1 1.6M107.6 34.7l-1.4 -3.5M89.6 238.0l-4.3 2.5M86.0 237.1l-1.4 -2.5M84.2 236.6l-2.3 -4.0M117.7 292.5l-6.1 2.3M115.9 291.7l-5.1 2.0M114.1 290.9l-4.2 1.6M110.5 289.3l-1.7 -4.4M107.0 287.7l-0.9 -2.3M113.4 68.5l-2.2 3.2M111.4 68.8l-3.9 -2.7M109.5 69.1l-2.3 3.3M103.7 70.1l-3.8 -2.7M101.7 70.5l-2.1 -1.5M93.5 124.3l-4.6 2.0M88.2 122.2l-4.8 2.1M88.2 122.2l-2.1 -4.8M86.5 121.5l-4.0 1.7M86.5 121.5l-1.7 -4.0M84.7 120.8l-1.1 -2.6M89.0 232.1l-2.8 3.6M89.0 232.1l-3.6 -2.8M129.9 126.4l-5.3 -4.2M126.3 126.8l-2.9 3.6M122.6 127.2l-3.2 3.9M86.1 154.6l-3.3 1.0M84.4 153.7l-2.9 0.9M82.7 152.8l-3.7 1.1M81.0 151.9l-1.0 -3.5M74.3 204.4l-3.6 2.0M111.8 51.1l-4.3 2.6M108.0 50.1l-1.5 -2.6M120.3 32.6l-4.4 2.0M118.5 32.0l-3.6 1.7M116.6 31.3l-2.2 -4.8M88.6 194.2l-4.8 5.1M88.6 194.2l-5.1 -4.8M86.7 194.3l-4.3 -4.1M84.9 194.3l-3.2 -3.0M83.0 194.4l-3.1 3.3M81.2 194.4l-2.9 3.1M87.9 162.7l-1.8 -4.1M86.0 162.0l-1.9 -4.3M84.1 161.2l-3.9 1.8M84.1 161.2l-1.8 -3.9M78.3 159.0l-2.2 1.0M78.3 159.0l-1.0 -2.2M123.6 166.4l-4.8 -3.9M119.9 166.8l-4.2 -3.4M116.2 167.1l-3.4 4.1M116.2 167.1l-4.1 -3.4M96.6 284.4l-4.5 3.6M85.5 283.2l-3.1 2.5M119.5 146.8l-4.6 1.8M119.5 146.8l-1.8 -4.6M117.8 146.0l-1.3 -3.2M114.2 144.5l-3.5 1.4M108.9 142.2l-2.2 0.9M100.9 147.2l-4.2 3.2M98.9 147.0l-4.1 3.1M95.1 146.4l-2.6 2.0M95.1 146.4l-2.0 -2.6M93.1 146.2l-2.2 1.7M91.2 145.9l-2.3 -3.0M89.3 145.7l-1.7 -2.3M131.6 47.6l-2.9 2.9M125.7 47.6l-2.9 -2.9M123.7 47.6l-2.4 2.4M123.7 47.6l-2.4 -2.4M121.7 47.6l-2.8 -2.8M119.7 47.6l-3.1 -3.1M117.8 47.6l-1.7 1.7M119.4 44.7l-3.2 2.9M117.5 44.6l-3.4 3.1M117.5 44.6l-3.1 -3.4M110.1 44.2l-2.8 2.5M110.1 44.2l-2.5 -2.8M84.2 204.2l-2.9 -3.2M78.8 203.9l-3.8 -4.3M73.4 203.5l-2.3 2.0M69.7 203.3l-1.9 -2.1M67.9 203.2l-2.5 -2.8M66.1 203.1l-1.9 1.7M66.1 203.1l-1.7 -1.9M88.7 288.1l-1.1 -3.0M87.0 287.3l-1.3 -3.6M85.4 286.5l-2.5 0.9M85.4 286.5l-0.9 -2.5M97.8 114.8l-4.8 1.5M96.1 113.9l-1.6 -5.0M94.5 113.0l-1.4 -4.6M123.9 156.5l-4.5 4.5M119.6 156.5l-3.9 3.9M126.9 181.4l-3.8 2.8M125.1 181.1l-5.2 3.8M123.2 180.9l-4.2 3.1M121.4 180.6l-2.1 -2.9M119.5 180.3l-3.8 2.8M117.6 180.0l-3.9 2.9M117.6 180.0l-2.9 -3.9M113.9 179.5l-3.0 2.2M113.9 179.5l-2.2 -3.0M129.4 62.9l-4.1 2.1M127.6 62.3l-4.2 2.1M125.7 61.7l-4.0 2.0M120.2 59.9l-3.1 1.5M120.2 59.9l-1.5 -3.1M118.3 59.3l-2.0 -4.0M122.9 35.2l-3.6 3.1M115.7 34.7l-3.2 2.8M113.9 34.6l-2.2 -2.6M112.1 34.4l-2.4 -2.8M90.0 117.4l-3.6 -3.2M84.4 117.8l-2.2 2.5M84.4 117.8l-2.5 -2.2M82.6 117.9l-2.0 -1.8M100.8 168.2l-4.2 -3.4M95.2 168.8l-3.5 -2.9M89.5 169.4l-1.4 1.8M125.8 199.0l-4.1 -3.9M119.9 199.3l-2.5 -2.3M115.9 199.4l-3.2 3.5M115.9 199.4l-3.5 -3.2M112.0 199.5l-2.5 2.7M137.1 286.6l-3.0 4.2M125.5 288.6l-3.4 -2.4M123.6 288.9l-1.8 2.6M123.6 288.9l-2.6 -1.8M88.7 158.9l-3.4 -3.7M84.8 158.7l-2.0 1.8M82.9 158.6l-1.7 1.6M90.4 197.9l-4.2 2.5M80.4 195.5l-2.4 1.4M80.4 195.5l-1.4 -2.4M126.7 216.5l-4.7 3.3M124.8 216.2l-2.8 2.0M120.8 215.5l-3.3 2.3M107.1 234.3l-1.7 -2.9M103.1 233.3l-3.8 2.3M103.1 233.3l-2.3 -3.8M101.1 232.8l-1.9 -3.2M82.8 248.4l-5.2 -3.5M80.8 248.8l-2.8 4.1M78.8 249.2l-2.3 3.4M76.7 249.6l-1.9 2.8M76.7 249.6l-2.8 -1.9M94.0 180.7l-4.2 -5.7M86.6 179.6l-3.9 2.9M84.7 179.3l-3.9 2.9M129.3 177.8l-4.7 3.4M127.6 177.5l-2.9 -4.1M124.0 176.9l-3.3 2.4M122.2 176.6l-1.8 -2.5M116.9 175.7l-1.8 1.3M116.9 175.7l-1.3 -1.8M94.0 168.3l-3.2 2.7M88.1 167.9l-2.3 -2.7M98.9 89.3l-2.9 3.4M94.8 89.7l-2.3 2.7M92.8 89.8l-2.6 -2.2M108.6 105.1l-3.8 -2.6M110.5 61.4l-2.4 -4.5M105.3 59.8l-4.1 2.2M103.5 59.3l-3.3 1.8M101.8 58.8l-2.7 1.4M98.3 57.8l-1.6 -3.0M80.8 187.8l-1.3 -4.0M72.3 183.5l-1.1 -3.4M70.6 182.6l-1.0 -3.0M121.9 103.0l-2.6 3.0M120.1 103.2l-3.8 -3.3M118.2 103.3l-2.5 2.9M118.2 103.3l-2.9 -2.5M116.4 103.4l-2.9 3.4M110.9 103.9l-2.7 3.2M131.5 121.5l-4.4 3.9M129.6 121.4l-4.0 3.5M127.7 121.3l-2.9 -3.3M123.9 121.0l-2.0 -2.3M122.0 120.9l-3.1 2.7M118.3 120.7l-1.6 -1.8M73.1 234.1l-3.0 3.8M73.1 234.1l-3.8 -3.0M71.2 234.3l-3.1 -2.5M69.3 234.5l-3.8 -3.1M99.4 254.4l-4.5 -4.0M93.6 254.7l-3.3 -2.9M86.0 255.2l-1.9 2.2M117.3 152.0l-6.3 2.1M115.5 151.1l-5.4 1.8M113.7 150.2l-1.2 -3.6M110.1 148.4l-3.9 1.3M97.2 67.2l-2.4 -4.8M95.3 66.6l-3.0 1.5M95.4 228.9l-2.5 3.5M93.6 229.2l-3.9 -2.7M89.9 229.9l-2.2 3.1M84.3 230.9l-1.6 2.3M102.5 61.2l-2.4 0.9M100.7 60.3l-1.2 -3.4M103.1 175.6l-3.9 1.3M101.3 174.7l-2.9 1.0M101.3 174.7l-1.0 -2.9M111.0 263.2l-2.2 -3.1M109.1 262.9l-3.3 -4.6M105.3 262.2l-2.3 1.7M109.5 289.7l-2.5 -6.0M107.6 288.9l-4.8 2.0M102.0 286.6l-1.5 -3.5M110.2 112.2l-3.9 -3.8M106.4 112.3l-4.0 4.2M106.4 112.3l-4.2 -4.0M104.5 112.3l-3.1 -3.0M100.7 112.4l-3.4 -3.3M96.9 112.5l-1.8 1.9M103.7 50.6l-4.6 -3.2M98.0 51.6l-1.9 2.8M119.5 49.8l-4.8 2.6M119.5 49.8l-2.6 -4.8M113.8 48.1l-3.6 2.0M104.0 288.6l-1.5 -3.5M92.9 176.2l-2.9 -3.9M91.0 176.0l-3.5 -4.6M87.2 175.4l-2.3 -3.0M95.0 211.4l-5.4 3.1M91.2 210.4l-2.2 -3.9M77.7 263.3l-2.2 -4.0M76.0 262.8l-3.3 1.9M76.0 262.8l-1.9 -3.3M70.7 261.3l-4.6 2.6M67.2 260.3l-4.0 2.3M102.8 190.2l-5.9 3.9M93.7 188.3l-3.9 2.6M119.9 154.2l-2.8 -6.4M110.9 150.6l-3.5 1.5" stroke="#24892c" stroke-width="0.9" fill="none"/><path d="M127.0 229.0Q121.2 227.5 115.4 230.0M74.7 250.2Q65.1 249.5 55.5 252.8M97.1 248.0Q91.8 243.4 86.5 242.8M78.8 178.5Q71.0 176.7 63.3 178.9M108.3 64.2Q101.9 62.8 95.6 65.3M113.4 204.5Q104.3 199.7 95.1 199.0M89.5 131.4Q83.2 128.8 77.0 130.3M108.8 161.5Q102.9 159.0 96.9 160.6M124.6 40.7Q119.5 36.5 114.4 36.2M126.9 78.9Q121.1 76.0 115.3 77.1M129.0 106.4Q120.8 104.2 112.5 106.1M117.7 292.5Q111.4 287.7 105.2 286.9M96.2 160.1Q87.8 153.5 79.3 151.0M121.3 147.6Q114.2 142.5 107.2 141.4M104.7 147.7Q95.1 144.4 85.4 145.2M128.3 35.6Q119.3 32.9 110.3 34.3M90.0 117.4Q84.4 115.8 78.9 118.1M106.5 167.7Q97.0 166.6 87.6 169.6M113.1 235.8Q106.1 232.1 99.1 232.3M82.5 188.6Q74.0 182.3 65.5 180.0M111.4 290.4Q105.7 286.1 100.1 285.8" stroke="#0f5f19" stroke-width="1.3" fill="none"/><path d="M125.9 107.5Q118.5 105.3 111.1 107.1M107.6 289.7Q102.4 285.4 97.3 285.0M94.0 145.4Q88.2 140.4 82.5 139.4M66.9 239.8Q61.0 236.7 55.0 237.5M117.2 38.1Q112.5 33.9 107.7 33.8M109.0 238.3Q100.7 232.2 92.3 230.0M115.2 60.8Q109.9 59.1 104.5 61.5M79.2 222.6Q72.5 221.3 65.9 224.0M123.2 55.2Q116.3 52.8 109.5 54.4M128.3 211.8Q119.6 208.1 110.9 208.4M74.1 177.6Q69.3 173.6 64.4 173.7M90.0 231.4Q82.3 227.5 74.5 227.5M104.3 154.9Q99.5 151.1 94.7 151.3M116.7 38.6Q111.3 34.2 105.8 33.9M94.9 239.4Q86.9 235.3 78.9 235.2M93.5 124.3Q87.4 119.9 81.2 119.4M131.7 126.2Q121.7 125.3 111.8 128.4M120.3 32.6Q114.8 28.6 109.4 28.7M125.4 166.2Q116.2 165.1 106.9 168.0M131.6 47.6Q123.7 45.6 115.8 47.6M84.2 204.2Q74.3 201.6 64.3 203.0M101.2 116.6Q95.3 111.5 89.4 110.4M92.6 159.0Q86.8 156.8 81.0 158.5M134.7 178.7Q124.9 175.1 115.1 175.4M105.1 88.8Q97.9 87.4 90.7 90.0M112.2 61.9Q104.4 57.6 96.6 57.3M125.6 102.7Q116.4 101.4 107.2 104.1M131.5 121.5Q123.9 119.0 116.4 120.6M76.8 233.7Q70.2 232.4 63.7 235.0M99.4 254.4Q91.7 252.8 84.1 255.3M101.1 68.5Q96.3 64.9 91.4 65.3M113.2 66.3Q106.1 60.9 98.9 59.5M96.9 211.9Q88.4 207.6 80.0 207.3M102.8 190.2Q95.5 186.7 88.2 187.2" stroke="#24892c" stroke-width="1.3" fill="none"/><path d="M130.8 23.7Q122.4 22.7 114.0 25.8M112.0 181.4Q106.2 176.6 100.4 175.7M99.8 269.0Q92.7 266.3 85.5 267.5M128.3 100.3Q119.4 99.6 110.5 102.9M122.8 133.9Q117.5 131.8 112.2 133.8M84.9 193.4Q78.6 192.6 72.4 195.9M115.6 52.1Q108.9 48.3 102.3 48.6M88.6 194.2Q83.0 192.4 77.5 194.5M89.8 163.4Q83.1 158.9 76.4 158.3M125.0 44.9Q116.6 42.5 108.3 44.1M123.9 156.5Q118.6 154.5 113.2 156.5M127.8 199.0Q118.9 197.3 110.0 199.6M130.7 217.2Q123.8 214.0 116.8 214.8M84.9 248.0Q78.8 247.2 72.6 250.4M99.1 228.2Q90.8 227.7 82.4 231.2M112.1 112.2Q102.6 110.4 93.1 112.5M109.4 49.5Q102.8 48.7 96.1 52.0M119.5 49.8Q113.8 46.1 108.2 46.5M94.8 176.5Q88.2 173.6 81.6 174.7M77.7 263.3Q69.8 259.1 61.9 258.9M119.9 154.2Q112.7 149.3 105.4 148.5" stroke="#1d7d27" stroke-width="1.3" fill="none"/><path d="M121.8 18.2Q115.9 17.2 109.9 20.3M121.6 19.1Q114.3 17.2 106.9 19.4M108.4 36.7Q99.6 37.7 90.9 42.7M102.8 65.7Q90.6 64.3 78.4 67.0M84.1 92.9Q68.8 93.7 53.5 98.5M81.6 101.0Q67.4 100.3 53.3 103.6M88.2 128.9Q74.3 127.8 60.4 130.6M87.0 168.5Q77.8 168.6 68.6 172.6M55.6 179.2Q38.7 180.0 21.8 184.7M57.3 176.8Q39.3 179.8 21.3 186.8M75.9 206.8Q62.4 204.2 48.9 205.6M62.6 231.4Q40.7 229.2 18.7 230.9M58.6 253.1Q43.4 252.1 28.2 255.2M57.9 252.9Q43.3 252.4 28.7 255.9M74.4 268.5Q60.0 270.3 45.6 276.0M101.4 290.1Q92.6 290.5 83.9 295.0M83.2 124.6Q75.3 122.8 67.4 125.0M91.4 100.7Q81.7 96.3 72.0 95.8M82.0 137.8Q72.3 134.8 62.5 135.9M66.7 250.2Q58.1 250.4 49.6 254.5M104.4 58.1Q94.9 59.2 85.4 64.3M74.8 280.4Q67.3 276.8 59.8 277.3M83.3 133.4Q74.3 128.9 65.3 128.4M60.1 201.8Q54.0 198.3 47.8 198.8M114.0 29.7Q105.7 27.5 97.4 29.3M116.5 30.7Q106.8 30.4 97.1 34.1M93.5 79.4Q84.5 77.7 75.4 80.0M78.9 134.2Q71.1 134.3 63.4 138.4" stroke="#3aa83a" stroke-width="1.3" fill="none"/><path d="M121.8 18.2l-4.4 6.4M119.8 18.5l-4.3 6.2M119.8 18.5l-6.2 -4.3M117.8 18.9l-3.5 5.1M114.3 19.2l-2.7 2.8M114.3 19.2l-2.8 -2.7M112.4 19.3l-3.8 -3.6M116.2 16.7l-2.7 5.4M112.7 17.9l-3.0 5.9M109.2 19.0l-2.1 4.3M106.6 37.3l-2.8 5.8M104.9 37.9l-4.2 -2.0M103.1 38.5l-3.3 6.7M101.4 39.1l-2.3 4.7M94.4 41.5l-1.4 2.9M92.6 42.1l-3.8 -1.8M107.3 36.7l-6.0 -3.6M103.6 37.7l-2.5 4.2M101.8 38.1l-2.7 4.6M101.8 38.1l-4.6 -2.7M99.9 38.6l-3.4 5.6M98.1 39.1l-2.6 4.4M96.3 39.5l-2.9 4.8M94.4 40.0l-1.8 3.0M110.0 40.0l-4.4 4.5M106.1 40.1l-4.9 5.1M100.2 40.2l-3.2 3.3M99.2 63.7l-3.1 4.6M97.4 64.1l-6.4 -4.4M92.0 65.1l-5.2 -3.5M90.3 65.4l-4.0 5.8M84.9 66.5l-2.8 -1.9M83.1 66.8l-2.3 3.4M97.1 66.0l-3.5 -3.2M91.5 66.3l-5.0 -4.6M87.8 66.5l-3.2 3.6M99.1 64.6l-5.2 5.9M97.3 64.8l-5.0 5.7M95.5 64.9l-3.4 3.9M95.5 64.9l-3.9 -3.4M90.1 65.2l-3.7 4.1M90.1 65.2l-4.1 -3.7M88.2 65.3l-2.5 2.8M88.2 65.3l-2.8 -2.5M84.6 65.5l-3.1 3.5M81.0 65.8l-2.7 3.1M81.1 94.1l-4.7 -2.6M68.4 97.7l-1.8 3.3M64.8 98.8l-1.6 2.9M78.7 93.9l-3.3 4.7M69.7 95.5l-2.5 3.7M67.9 95.9l-4.7 -3.2M64.3 96.5l-4.5 -3.1M55.3 98.2l-2.6 3.7M55.3 98.2l-3.7 -2.6M72.2 101.9l-2.7 3.2M66.5 102.4l-3.8 4.6M64.6 102.6l-2.6 3.1M64.6 102.6l-3.1 -2.6M62.7 102.7l-3.2 3.9M62.7 102.7l-3.9 -3.2M58.9 103.1l-3.2 3.8M91.6 116.2l-4.2 -4.0M82.1 116.4l-4.5 -4.3M87.6 116.2l-3.4 3.2M83.8 116.0l-5.1 4.7M86.3 110.1l-5.7 -2.9M82.5 111.3l-4.2 -2.1M75.0 113.8l-2.2 4.4M73.1 114.4l-4.7 -2.4M71.2 115.0l-4.3 -2.2M87.4 128.4l-5.3 6.5M83.7 128.8l-3.8 4.6M83.7 128.8l-4.6 -3.8M81.8 129.0l-5.9 -4.9M79.9 129.1l-4.4 -3.7M78.1 129.3l-4.0 4.9M78.1 129.3l-4.9 -4.0M74.4 129.7l-4.3 -3.5M72.5 129.8l-3.5 4.2M70.6 130.0l-4.0 -3.3M68.8 130.2l-3.9 -3.2M66.9 130.4l-2.9 3.5M65.1 130.6l-2.6 -2.1M63.2 130.7l-2.2 2.7M79.8 131.7l-3.2 3.8M77.9 131.9l-4.8 5.7M76.0 132.0l-4.9 -4.1M74.2 132.2l-5.1 -4.2M66.7 132.9l-3.4 4.1M66.7 132.9l-4.1 -3.4M64.8 133.0l-3.5 4.2M64.8 133.0l-4.2 -3.5M61.1 133.4l-2.8 3.3M88.2 128.9l-5.7 6.4M84.5 129.1l-4.0 4.5M82.7 129.2l-5.7 -5.0M75.3 129.7l-3.8 -3.3M71.6 129.9l-3.0 3.3M69.7 130.0l-2.8 -2.5M67.9 130.2l-3.7 4.2M66.0 130.3l-2.8 3.1M64.1 130.4l-2.9 3.3M67.0 151.8l-5.6 -3.1M65.2 152.4l-2.4 4.4M63.5 152.9l-5.6 -3.1M56.4 155.0l-1.9 3.4M54.6 155.5l-2.4 4.3M52.9 156.0l-1.9 3.4M52.9 156.0l-3.4 -1.9M73.3 154.8l-3.5 4.2M73.3 154.8l-4.2 -3.5M71.5 155.0l-3.6 -3.0M64.2 155.7l-4.2 5.0M60.5 156.0l-2.6 3.1M60.5 156.0l-3.1 -2.6M56.9 156.4l-2.4 2.8M56.9 156.4l-2.8 -2.4M53.2 156.7l-2.9 3.5M49.5 157.1l-3.4 -2.8M47.7 157.2l-3.3 -2.8M75.4 150.7l-5.0 -3.7M73.6 151.0l-4.6 -3.4M60.5 153.1l-4.4 -3.2M56.8 153.6l-2.8 3.8M56.8 153.6l-3.8 -2.8M53.0 154.2l-2.9 4.0M45.6 155.4l-2.3 3.1M82.4 165.8l-3.4 4.9M78.7 166.4l-3.7 5.3M76.8 166.8l-4.1 -2.9M73.2 167.4l-1.9 2.8M73.2 167.4l-2.8 -1.9M71.3 167.8l-4.3 -3.0M79.6 170.2l-4.6 -2.9M70.5 172.2l-2.9 -1.8M85.4 164.7l-3.7 7.5M81.6 165.9l-3.3 6.6M79.8 166.6l-2.5 5.0M77.9 167.2l-5.2 -2.5M55.6 179.2l-5.3 -3.8M46.2 180.7l-4.8 -3.5M44.3 181.0l-3.4 4.7M44.3 181.0l-4.7 -3.4M42.5 181.3l-3.0 4.1M40.6 181.6l-3.7 5.2M40.6 181.6l-5.2 -3.7M33.1 182.9l-2.8 -2.0M29.3 183.5l-2.6 -1.9M23.7 184.4l-2.4 -1.7M55.0 176.0l-5.7 -3.3M53.2 176.4l-2.5 4.2M53.2 176.4l-4.2 -2.5M40.8 179.7l-3.3 5.6M40.8 179.7l-5.6 -3.3M33.7 181.5l-2.6 4.4M28.4 182.9l-3.5 -2.1M21.2 184.7l-2.1 3.5M55.5 177.3l-4.3 7.5M55.5 177.3l-7.5 -4.3M51.9 178.3l-4.2 -2.4M50.1 178.8l-3.1 5.5M50.1 178.8l-5.5 -3.1M48.3 179.3l-3.7 6.5M41.1 181.3l-5.8 -3.3M39.3 181.8l-3.8 -2.2M37.5 182.3l-2.0 3.5M33.9 183.3l-2.1 3.7M33.9 183.3l-3.7 -2.1M23.1 186.3l-1.5 2.6M74.4 201.8l-4.5 -3.3M72.5 202.1l-4.0 5.5M72.5 202.1l-5.5 -4.0M70.7 202.4l-4.4 5.9M68.9 202.6l-3.8 5.2M65.2 203.2l-2.4 3.3M63.4 203.5l-3.1 4.2M57.9 204.3l-4.8 -3.5M54.2 204.9l-4.3 -3.2M75.9 206.8l-5.2 4.8M68.7 206.5l-3.4 3.1M65.1 206.3l-4.3 -4.7M63.3 206.2l-3.1 2.9M59.7 206.1l-3.5 -3.8M54.3 205.8l-2.6 -2.8M52.5 205.7l-3.3 -3.6M65.8 203.9l-3.6 -2.1M58.7 205.8l-2.8 4.7M56.9 206.2l-4.2 -2.5M55.2 206.7l-2.7 -1.6M53.4 207.1l-2.1 3.6M52.3 225.7l-4.0 6.1M50.5 226.0l-4.1 6.2M50.5 226.0l-6.2 -4.1M48.7 226.4l-6.3 -4.1M46.8 226.8l-3.4 5.2M37.6 228.7l-4.7 -3.1M35.8 229.1l-3.2 -2.1M28.4 230.6l-2.7 4.1M26.6 231.0l-2.2 3.4M24.7 231.3l-4.0 -2.6M21.1 232.1l-2.7 4.0M56.6 225.3l-4.6 6.3M53.0 225.8l-3.7 4.9M53.0 225.8l-4.9 -3.7M51.1 226.1l-3.9 5.2M49.3 226.3l-3.9 -2.9M43.8 227.2l-2.5 3.4M41.9 227.4l-3.2 4.4M36.4 228.3l-4.5 -3.3M32.8 228.8l-3.4 4.6M30.9 229.1l-2.2 3.0M29.1 229.4l-3.3 4.4M29.1 229.4l-4.4 -3.3M25.4 229.9l-3.0 4.1M23.6 230.2l-3.6 -2.6M59.0 231.4l-3.9 3.8M59.0 231.4l-3.8 -3.9M53.5 231.3l-5.6 5.5M49.8 231.3l-4.4 -4.5M48.0 231.3l-3.5 -3.6M46.2 231.2l-3.4 3.3M44.3 231.2l-3.0 -3.1M38.8 231.1l-3.3 -3.4M37.0 231.1l-2.8 -2.9M31.5 231.1l-3.3 -3.4M27.8 231.0l-2.4 -2.4M24.2 231.0l-2.0 -2.0M20.5 230.9l-2.3 2.2M58.6 253.1l-5.0 5.7M56.7 253.2l-4.7 -4.1M54.8 253.4l-4.1 4.7M51.0 253.6l-3.4 -3.0M49.1 253.8l-4.5 5.1M45.3 254.0l-3.2 3.7M43.4 254.1l-2.6 2.9M39.6 254.4l-4.2 -3.7M35.8 254.7l-2.4 -2.1M33.9 254.8l-2.3 2.6M33.9 254.8l-2.6 -2.3M57.8 253.7l-3.5 5.1M57.8 253.7l-5.1 -3.5M55.9 254.1l-6.7 -4.5M50.4 255.1l-2.3 3.5M50.4 255.1l-3.5 -2.3M44.8 256.2l-2.8 4.1M41.1 256.9l-4.0 -2.7M39.2 257.3l-2.3 3.5M37.3 257.7l-2.6 3.8M35.5 258.0l-4.1 -2.7M31.8 258.7l-2.6 -1.7M56.0 253.1l-5.6 -4.6M50.6 253.7l-3.6 4.4M48.7 253.9l-5.8 -4.7M43.3 254.4l-3.1 -2.6M36.0 255.1l-2.3 2.8M36.0 255.1l-2.8 -2.3M30.5 255.7l-2.5 -2.0M72.6 269.0l-4.9 -2.9M67.2 270.4l-2.3 3.9M67.2 270.4l-3.9 -2.3M63.6 271.3l-2.9 5.0M61.8 271.8l-2.5 4.2M60.0 272.3l-4.1 -2.4M77.4 274.4l-5.1 -4.5M66.6 275.0l-4.5 5.0M61.2 275.3l-4.4 -3.9M57.6 275.5l-3.5 3.9M57.6 275.5l-3.9 -3.5M55.8 275.6l-2.6 2.9M55.8 275.6l-2.9 -2.6M54.0 275.7l-2.0 2.3M50.3 275.9l-2.5 2.8M73.3 269.4l-5.0 6.6M67.7 270.1l-3.8 -2.9M60.3 271.2l-4.2 -3.2M83.9 286.2l-5.8 -4.9M82.1 286.3l-3.0 3.6M78.3 286.7l-4.7 5.6M78.3 286.7l-5.6 -4.7M76.5 286.8l-4.2 -3.5M74.6 287.0l-3.4 -2.8M70.8 287.3l-2.8 -2.3M65.2 287.8l-2.7 3.2M65.2 287.8l-3.2 -2.7M63.3 288.0l-2.5 2.9M83.8 287.7l-3.9 -3.4M81.9 287.8l-3.1 3.5M76.3 288.2l-2.9 -2.6M70.7 288.5l-3.1 -2.8M68.8 288.6l-1.9 2.2M68.8 288.6l-2.2 -1.9M83.3 287.0l-2.6 4.4M79.7 287.9l-5.1 -3.0M77.9 288.4l-4.4 -2.6M76.1 288.8l-2.0 3.4M76.1 288.8l-3.4 -2.0M74.3 289.3l-2.8 4.7M74.3 289.3l-4.7 -2.8M67.1 291.1l-2.0 3.4M101.2 294.5l-4.0 -2.4M99.4 294.9l-4.0 -2.4M92.3 296.7l-4.8 -2.9M90.6 297.1l-4.1 -2.5M96.1 291.6l-3.3 5.9M92.6 292.5l-2.0 3.5M89.1 293.5l-2.2 3.9M106.3 295.7l-3.8 3.9M102.5 295.8l-4.3 4.4M98.7 295.8l-3.4 3.6M96.8 295.9l-4.2 -4.1M94.8 295.9l-3.7 3.8M94.8 295.9l-3.8 -3.7M56.6 254.1l-6.7 -4.7M54.8 254.4l-3.6 -2.5M49.4 255.3l-4.4 -3.1M47.6 255.6l-2.6 3.7M45.8 255.9l-1.9 2.7M83.2 124.6l-4.6 4.8M81.2 124.6l-4.7 4.9M75.3 124.8l-2.8 -2.7M73.3 124.8l-3.3 3.5M71.3 124.9l-3.8 -3.6M69.4 124.9l-3.5 -3.4M72.1 202.9l-5.8 5.5M70.3 202.8l-5.3 -5.6M59.1 202.5l-2.4 -2.5M55.3 202.4l-2.2 -2.4M70.1 166.7l-4.4 2.9M64.3 165.5l-2.9 -4.4M62.4 165.1l-4.1 2.7M62.4 165.1l-2.7 -4.1M116.0 37.0l-3.8 -4.2M112.3 36.8l-4.8 4.4M110.4 36.7l-3.2 2.9M108.5 36.6l-4.8 4.4M59.4 243.9l-2.2 3.8M55.7 244.9l-5.4 -3.2M52.0 245.9l-2.4 4.2M52.0 245.9l-4.2 -2.4M91.4 100.7l-5.7 3.4M91.4 100.7l-3.4 -5.7M89.6 100.2l-2.7 -4.5M87.9 99.8l-2.8 -4.7M84.3 98.9l-5.9 3.5M84.3 98.9l-3.5 -5.9M82.6 98.5l-2.3 -3.8M79.0 97.6l-1.9 -3.1M82.0 137.8l-5.5 4.6M82.0 137.8l-4.6 -5.5M74.2 137.0l-2.7 -3.3M70.3 136.7l-4.6 3.8M70.3 136.7l-3.8 -4.6M68.4 136.5l-2.1 -2.6M66.4 136.3l-3.2 2.6M64.5 136.1l-3.6 3.0M64.5 136.1l-3.0 -3.6M78.9 152.6l-3.9 -4.7M73.4 152.1l-3.7 -4.4M73.3 282.5l-2.7 5.2M73.3 282.5l-5.2 -2.7M67.4 284.3l-4.3 -2.2M86.8 64.4l-2.2 -3.4M83.1 63.7l-3.6 2.3M81.2 63.3l-3.0 2.0M68.9 274.1l-4.4 6.3M67.0 274.4l-4.1 -2.9M65.1 274.8l-2.8 4.0M61.4 275.4l-4.1 -2.9M57.6 276.1l-2.2 3.1M84.9 110.3l-5.4 5.0M84.9 110.3l-5.0 -5.4M83.0 110.2l-4.4 4.1M83.0 110.2l-4.1 -4.4M81.1 110.1l-4.2 -4.5M77.3 110.0l-3.8 -4.1M75.4 110.0l-2.8 -3.0M71.6 109.8l-2.7 -2.9M90.9 116.4l-4.8 5.3M90.9 116.4l-5.3 -4.8M88.9 116.5l-5.1 -4.6M87.0 116.6l-5.2 -4.6M85.0 116.7l-4.7 -4.3M81.0 117.0l-3.0 3.3M77.0 117.2l-2.3 -2.0M75.8 283.0l-2.7 4.9M74.0 283.5l-2.7 4.9M70.3 284.6l-2.0 3.6M66.7 285.6l-1.7 3.1M66.7 285.6l-3.1 -1.7M64.9 286.2l-2.4 -1.4M55.8 204.9l-2.3 5.4M49.1 207.7l-1.8 4.2M67.6 280.4l-4.8 4.3M61.0 251.7l-4.4 -2.6M55.3 253.1l-2.6 4.3M104.4 58.1l-2.3 4.6M102.6 58.7l-2.6 5.2M92.3 62.1l-2.6 5.0M90.5 62.6l-2.2 4.4M90.5 62.6l-4.4 -2.2M74.8 280.4l-6.6 4.4M72.9 280.0l-5.3 3.5M72.9 280.0l-3.5 -5.3M71.0 279.6l-4.2 -6.4M69.1 279.2l-3.1 -4.7M67.3 278.8l-4.9 3.3M61.6 277.7l-2.2 -3.3M55.6 242.6l-5.3 -7.1M53.8 242.3l-6.0 4.4M48.2 241.4l-3.4 2.5M48.2 241.4l-2.5 -3.4M46.4 241.2l-4.9 3.6M46.4 241.2l-3.6 -4.9M44.5 240.9l-3.2 2.4M44.5 240.9l-2.4 -3.2M63.8 225.3l-3.9 6.1M61.9 225.7l-4.1 6.5M59.9 226.1l-3.0 4.8M59.9 226.1l-4.8 -3.0M58.0 226.6l-3.4 -2.2M56.1 227.0l-4.7 -3.0M54.2 227.4l-2.9 4.5M52.3 227.8l-2.2 3.5M94.0 92.3l-3.6 -4.7M83.3 133.4l-4.9 2.7M79.7 132.4l-2.2 -4.0M77.9 131.9l-6.1 3.5M77.9 131.9l-3.5 -6.1M74.3 130.9l-2.9 -5.2M68.9 129.4l-1.9 -3.3M60.1 201.8l-5.0 3.0M58.4 201.4l-5.9 3.6M79.2 162.9l-5.4 3.9M79.2 162.9l-3.9 -5.4M75.4 162.3l-3.9 2.8M75.4 162.3l-2.8 -3.9M73.4 162.0l-2.7 -3.8M63.8 160.3l-4.0 2.8M63.8 160.3l-2.8 -4.0M56.3 217.7l-4.5 -4.6M52.6 217.7l-2.5 2.4M48.9 217.7l-3.2 3.1M90.2 64.9l-4.5 -2.6M88.3 65.4l-3.7 6.4M86.4 65.9l-2.9 5.1M86.4 65.9l-5.1 -2.9M84.5 66.4l-2.1 3.6M84.5 66.4l-3.6 -2.1M82.5 66.9l-3.7 -2.1M80.6 67.4l-4.1 -2.4M78.7 67.9l-3.5 -2.0M114.0 29.7l-5.5 5.2M110.3 29.6l-5.3 5.0M102.9 29.4l-4.2 4.0M105.6 50.3l-4.4 -6.1M98.4 49.1l-3.2 2.3M96.6 48.8l-3.9 2.8M80.7 156.4l-4.5 3.6M71.3 155.3l-3.4 2.7M71.3 155.3l-2.7 -3.4M69.4 155.1l-4.3 3.4M58.1 204.4l-5.0 6.6M58.1 204.4l-6.6 -5.0M56.1 204.6l-4.3 5.6M56.1 204.6l-5.6 -4.3M54.1 204.9l-4.0 -3.1M52.1 205.2l-3.1 4.0M50.0 205.4l-2.3 3.0M50.0 205.4l-3.0 -2.3M48.0 205.7l-3.2 -2.4M119.4 30.8l-4.2 4.2M115.7 30.8l-5.2 5.2M108.3 30.7l-2.8 -2.8M68.0 266.6l-4.7 -3.6M66.2 266.8l-4.0 -3.1M64.4 267.1l-3.7 4.8M60.8 267.5l-3.5 4.6M57.2 268.0l-2.4 3.1M75.5 155.0l-2.0 4.5M75.5 155.0l-4.5 -2.0M69.9 157.2l-4.4 -1.9M51.7 228.2l-3.6 6.9M45.9 230.0l-2.7 5.1M45.9 230.0l-5.1 -2.7M44.0 230.6l-3.0 -1.6M42.0 231.2l-2.6 -1.4M84.1 112.3l-3.9 6.0M82.3 112.7l-5.3 -3.4M80.5 113.1l-2.8 4.4M76.8 113.8l-4.6 -3.0M73.2 114.6l-2.5 3.9M112.6 31.4l-6.2 -4.4M106.8 32.4l-2.7 3.8M106.8 32.4l-3.8 -2.7M104.9 32.7l-2.3 3.3M101.0 33.4l-2.9 4.2M91.7 88.0l-2.1 4.8M90.0 88.7l-4.0 -1.8M56.5 260.4l-7.1 -3.2M51.0 262.4l-4.9 -2.3M49.2 263.1l-1.5 3.4M47.4 263.8l-1.2 2.6M47.4 263.8l-2.6 -1.2M88.9 85.4l-3.1 2.2M88.9 85.4l-2.2 -3.1M87.1 85.0l-3.0 -4.4M83.5 84.4l-2.0 -2.8M92.6 53.8l-4.6 6.7M88.7 54.5l-4.1 -2.8M86.7 54.9l-3.5 -2.4M84.7 55.3l-3.2 -2.2M66.7 208.7l-3.2 6.0M60.9 210.4l-3.1 5.8M60.9 210.4l-5.8 -3.1M55.2 212.2l-3.8 -2.0M93.5 79.4l-4.9 5.3M93.5 79.4l-5.3 -4.9M89.9 79.5l-4.4 4.7M88.1 79.6l-4.1 4.4M86.3 79.6l-4.5 4.8M86.3 79.6l-4.8 -4.5M84.5 79.7l-3.4 3.6M80.9 79.8l-3.6 -3.4M77.2 79.9l-3.2 -3.0M97.3 64.9l-4.4 2.5M93.6 63.9l-5.5 3.2M91.8 63.4l-5.4 3.1M91.8 63.4l-3.1 -5.4M86.3 61.9l-2.3 -4.0M71.5 152.8l-3.8 4.0M66.0 152.9l-3.1 -3.0M79.9 127.7l-4.6 -2.6M78.1 128.2l-2.8 4.9M74.4 129.2l-3.7 -2.1M72.6 129.7l-2.8 -1.6M75.0 135.2l-6.7 -3.8M67.3 137.4l-3.4 -1.9M65.3 137.9l-2.5 -1.4M74.6 140.1l-5.5 -2.5M72.9 140.7l-2.6 5.7M71.2 141.3l-6.5 -3.0M69.5 142.0l-2.4 5.1M104.1 45.3l-2.7 4.7M102.3 45.8l-2.3 4.1M100.6 46.3l-3.4 6.0" stroke="#48b540" stroke-width="1.0" fill="none"/><path d="M121.8 18.2l-6.4 -4.4M115.9 19.2l-3.3 4.8M113.9 19.6l-2.0 3.0M121.6 19.1l-6.2 -6.0M118.0 19.2l-3.6 3.7M112.4 19.3l-3.6 3.8M108.8 19.3l-2.9 3.0M114.5 17.3l-5.9 -3.0M112.7 17.9l-5.9 -3.0M111.0 18.4l-2.6 5.1M109.2 19.0l-4.3 -2.1M107.5 19.6l-1.6 3.3M108.4 36.7l-3.4 6.9M99.6 39.7l-2.7 5.6M97.9 40.3l-2.5 5.1M96.1 40.9l-3.2 -1.6M109.1 36.3l-3.3 5.6M96.3 39.5l-4.8 -2.9M106.1 40.1l-5.1 -4.9M104.2 40.1l-4.4 4.5M102.2 40.1l-3.2 -3.1M98.3 40.2l-3.5 -3.4M96.3 40.2l-2.5 2.5M97.4 64.1l-4.4 6.4M95.6 64.4l-4.1 6.0M93.8 64.8l-4.2 6.1M93.8 64.8l-6.1 -4.2M90.3 65.4l-5.8 -4.0M88.5 65.8l-5.3 -3.6M86.7 66.1l-3.9 -2.6M84.9 66.5l-1.9 2.8M100.9 65.8l-5.8 -5.3M99.0 65.9l-3.6 3.9M95.3 66.1l-2.8 3.1M93.4 66.2l-3.3 3.7M93.4 66.2l-3.7 -3.3M80.3 66.9l-2.0 2.2M100.9 64.5l-5.1 -4.5M99.1 64.6l-5.9 -5.2M91.9 65.1l-3.1 3.5M86.4 65.4l-3.9 4.5M79.2 65.9l-3.0 -2.7M82.9 93.5l-3.9 7.1M79.3 94.6l-5.4 -3.0M75.6 95.6l-2.4 4.3M75.6 95.6l-4.3 -2.4M73.8 96.1l-4.4 -2.4M72.0 96.7l-3.3 5.9M72.0 96.7l-5.9 -3.3M61.1 99.8l-1.9 3.5M59.3 100.3l-1.9 3.5M84.1 92.9l-7.0 -4.8M82.3 93.2l-4.2 -2.9M76.9 94.2l-5.5 -3.8M75.1 94.5l-3.8 -2.6M71.5 95.2l-4.8 -3.3M69.7 95.5l-3.7 -2.5M67.9 95.9l-3.2 4.7M66.1 96.2l-3.4 4.9M62.5 96.8l-3.4 -2.4M60.7 97.2l-1.8 2.7M60.7 97.2l-2.7 -1.8M57.1 97.8l-2.8 4.1M81.6 101.0l-6.0 -5.0M79.7 101.2l-4.6 5.6M77.8 101.3l-5.3 6.4M75.9 101.5l-4.7 5.6M70.3 102.0l-4.8 -4.0M68.4 102.2l-4.6 -3.8M58.9 103.1l-3.8 -3.2M55.1 103.5l-2.6 -2.2M93.5 116.2l-6.3 -6.1M87.8 116.3l-3.1 -3.0M85.9 116.3l-3.4 -3.3M84.0 116.3l-3.8 -3.7M82.1 116.4l-4.3 4.5M80.2 116.4l-3.5 3.6M76.4 116.5l-2.9 3.0M87.6 116.2l-3.2 -3.4M85.7 116.1l-3.9 3.6M85.7 116.1l-3.6 -3.9M83.8 116.0l-4.7 -5.1M78.3 115.8l-3.4 -3.7M76.4 115.8l-3.6 -3.9M74.6 115.7l-2.1 -2.3M86.3 110.1l-2.9 5.7M82.5 111.3l-2.1 4.2M80.6 111.9l-3.7 -1.9M78.7 112.6l-2.3 4.6M78.7 112.6l-4.6 -2.3M76.9 113.2l-2.4 4.7M73.1 114.4l-2.4 4.7M87.4 128.4l-6.5 -5.3M79.9 129.1l-3.7 4.4M70.6 130.0l-3.3 4.0M68.8 130.2l-3.2 3.9M85.4 131.2l-4.4 5.3M85.4 131.2l-5.3 -4.4M81.7 131.5l-6.3 -5.3M68.6 132.7l-3.0 3.6M62.9 133.2l-2.8 -2.4M59.2 133.5l-2.6 3.1M86.4 129.0l-4.9 5.6M80.8 129.4l-3.8 4.3M79.0 129.5l-4.5 5.1M79.0 129.5l-5.1 -4.5M77.1 129.6l-4.4 5.0M77.1 129.6l-5.0 -4.4M66.0 130.3l-3.1 -2.8M62.3 130.5l-2.2 2.5M72.3 150.3l-3.7 6.8M72.3 150.3l-6.8 -3.7M70.5 150.8l-3.7 6.8M70.5 150.8l-6.8 -3.7M63.5 152.9l-3.1 5.6M59.9 153.9l-5.7 -3.1M58.2 154.4l-2.8 5.1M58.2 154.4l-5.1 -2.8M47.5 157.6l-1.9 3.4M45.8 158.1l-1.8 3.2M45.8 158.1l-3.2 -1.8M44.0 158.6l-2.8 -1.5M75.2 154.7l-4.9 5.9M69.7 155.2l-3.3 4.0M67.8 155.3l-4.4 -3.7M66.0 155.5l-3.4 4.1M64.2 155.7l-5.0 -4.2M58.7 156.2l-3.1 -2.5M51.4 156.9l-3.4 4.1M49.5 157.1l-2.8 3.4M47.7 157.2l-2.8 3.3M45.9 157.4l-2.9 3.5M75.4 150.7l-3.7 5.0M71.7 151.3l-3.8 5.2M69.8 151.6l-5.0 -3.6M51.2 154.5l-3.1 4.3M49.3 154.8l-2.9 4.0M49.3 154.8l-4.0 -2.9M47.4 155.1l-2.4 -1.7M86.0 165.1l-4.1 6.0M82.4 165.8l-4.9 -3.4M80.5 166.1l-4.9 -3.4M78.7 166.4l-5.3 -3.7M71.3 167.8l-3.0 4.3M69.5 168.1l-2.1 3.0M67.6 168.5l-1.7 2.5M67.6 168.5l-2.5 -1.7M87.0 168.5l-4.9 -3.1M85.2 168.9l-6.9 -4.4M83.3 169.3l-3.9 -2.5M77.8 170.6l-2.4 3.8M76.0 171.0l-2.6 4.1M74.1 171.4l-4.1 -2.6M87.2 164.0l-2.4 4.8M83.5 165.3l-2.4 5.0M83.5 165.3l-5.0 -2.4M77.9 167.2l-2.5 5.2M76.1 167.9l-2.1 4.2M74.2 168.5l-5.1 -2.5M70.5 169.8l-2.0 4.1M70.5 169.8l-4.1 -2.0M53.7 179.5l-2.9 4.0M51.8 179.8l-3.9 5.3M50.0 180.1l-4.6 6.3M48.1 180.4l-6.2 -4.5M38.7 182.0l-3.7 -2.7M36.8 182.3l-3.4 4.7M36.8 182.3l-4.7 -3.4M35.0 182.6l-4.2 -3.0M33.1 182.9l-2.0 2.8M27.5 183.8l-2.0 2.7M27.5 183.8l-2.7 -2.0M23.7 184.4l-1.7 2.4M60.4 174.6l-2.9 4.9M58.6 175.1l-3.1 5.3M56.8 175.5l-4.1 7.0M55.0 176.0l-3.3 5.7M51.5 176.9l-3.0 5.0M49.7 177.4l-6.6 -3.9M46.1 178.3l-2.1 3.6M46.1 178.3l-3.6 -2.1M44.4 178.7l-2.0 3.4M44.4 178.7l-3.4 -2.0M42.6 179.2l-2.9 4.9M37.2 180.6l-2.9 5.0M37.2 180.6l-5.0 -2.9M31.9 181.9l-4.9 -2.9M30.1 182.4l-4.2 -2.5M26.6 183.3l-1.7 2.9M21.2 184.7l-3.5 -2.1M51.9 178.3l-2.4 4.2M44.7 180.3l-4.2 -2.4M37.5 182.3l-3.5 -2.0M35.7 182.8l-2.4 4.3M35.7 182.8l-4.3 -2.4M28.5 184.8l-1.9 3.4M26.7 185.3l-2.1 3.7M70.7 202.4l-5.9 -4.4M68.9 202.6l-5.2 -3.8M56.0 204.6l-2.2 3.0M56.0 204.6l-3.0 -2.2M52.4 205.2l-2.8 3.8M52.4 205.2l-3.8 -2.8M50.5 205.5l-2.9 -2.1M74.1 206.7l-4.7 4.3M72.3 206.6l-3.5 3.2M72.3 206.6l-3.2 -3.5M68.7 206.5l-3.1 -3.4M56.1 205.9l-4.1 3.8M56.1 205.9l-3.8 -4.1M50.7 205.6l-2.8 -3.1M74.7 201.7l-2.9 4.9M67.6 203.5l-4.7 -2.8M64.0 204.4l-5.0 -3.0M53.4 207.1l-3.6 -2.1M45.0 227.2l-3.4 5.2M45.0 227.2l-5.2 -3.4M41.3 227.9l-4.7 -3.1M33.9 229.5l-2.3 3.4M33.9 229.5l-3.4 -2.3M32.1 229.8l-2.8 4.2M30.3 230.2l-2.7 4.1M26.6 231.0l-3.4 -2.2M22.9 231.7l-3.6 -2.4M21.1 232.1l-4.0 -2.7M19.2 232.5l-2.3 3.6M56.6 225.3l-6.3 -4.6M54.8 225.5l-3.2 4.4M45.6 226.9l-3.8 -2.8M38.3 228.0l-2.7 3.6M36.4 228.3l-3.3 4.5M34.6 228.5l-2.7 3.7M32.8 228.8l-4.6 -3.4M30.9 229.1l-3.0 -2.2M27.3 229.6l-1.9 2.6M60.8 231.4l-3.7 -3.8M55.3 231.3l-3.7 -3.8M49.8 231.3l-4.5 4.4M44.3 231.2l-3.1 3.0M31.5 231.1l-3.4 3.3M29.7 231.0l-2.9 -3.0M26.0 231.0l-2.8 -2.9M24.2 231.0l-2.0 2.0M20.5 230.9l-2.2 -2.3M54.8 253.4l-4.7 -4.1M52.9 253.5l-5.1 5.8M52.9 253.5l-5.8 -5.1M51.0 253.6l-3.0 3.4M41.5 254.3l-3.1 -2.7M32.0 254.9l-3.2 -2.8M59.6 253.3l-2.9 4.3M59.6 253.3l-4.3 -2.9M54.1 254.4l-3.5 5.1M54.1 254.4l-5.1 -3.5M52.2 254.8l-3.3 4.9M52.2 254.8l-4.9 -3.3M39.2 257.3l-3.5 -2.3M37.3 257.7l-3.8 -2.6M33.6 258.4l-1.7 2.6M33.6 258.4l-2.6 -1.7M57.9 252.9l-4.3 5.2M57.9 252.9l-5.2 -4.3M56.0 253.1l-4.6 5.6M52.4 253.5l-3.2 3.9M52.4 253.5l-3.9 -3.2M48.7 253.9l-4.7 5.8M43.3 254.4l-2.6 3.1M39.6 254.8l-3.7 4.6M39.6 254.8l-4.6 -3.7M34.1 255.3l-3.6 -2.9M74.4 268.5l-5.1 -3.0M72.6 269.0l-2.9 4.9M69.0 269.9l-3.0 5.1M69.0 269.9l-5.1 -3.0M65.4 270.9l-2.3 3.9M56.4 273.2l-2.4 4.1M54.6 273.7l-2.8 -1.7M49.2 275.1l-2.3 3.8M47.4 275.6l-3.7 -2.2M75.6 274.5l-5.3 5.9M73.8 274.6l-4.0 4.5M72.0 274.7l-5.2 5.8M68.4 274.9l-3.3 3.7M66.6 275.0l-5.0 -4.5M63.0 275.2l-3.0 3.4M59.4 275.4l-2.9 3.3M75.2 269.1l-4.6 -3.5M73.3 269.4l-6.6 -5.0M71.4 269.6l-3.5 4.6M69.6 269.9l-3.9 5.1M69.6 269.9l-5.1 -3.9M65.9 270.4l-5.2 -4.0M64.0 270.6l-3.5 4.6M58.4 271.4l-2.3 3.1M54.7 271.9l-3.3 -2.5M52.8 272.2l-3.7 -2.8M51.0 272.4l-2.0 2.6M47.3 272.9l-2.2 2.9M47.3 272.9l-2.9 -2.2M85.8 286.0l-3.4 4.1M83.9 286.2l-4.9 5.8M80.2 286.5l-3.7 4.4M80.2 286.5l-4.4 -3.7M74.6 287.0l-2.8 3.4M72.7 287.2l-3.3 -2.7M69.0 287.5l-4.5 -3.7M63.3 288.0l-2.9 -2.5M91.2 287.3l-5.5 6.2M91.2 287.3l-6.2 -5.5M89.4 287.4l-3.9 -3.4M87.5 287.5l-5.0 5.6M85.6 287.6l-5.5 -4.8M67.0 288.7l-2.7 3.0M67.0 288.7l-3.0 -2.7M88.8 285.7l-4.4 7.3M87.0 286.1l-3.8 6.3M87.0 286.1l-6.3 -3.8M85.2 286.6l-3.7 6.2M79.7 287.9l-3.0 5.1M77.9 288.4l-2.6 4.4M70.7 290.2l-3.4 -2.0M68.9 290.6l-2.4 3.9M67.1 291.1l-3.4 -2.0M106.5 293.2l-4.6 -2.8M104.7 293.6l-3.8 6.2M97.6 295.4l-2.6 4.2M94.1 296.2l-2.0 3.3M101.4 290.1l-6.8 -3.9M97.9 291.1l-6.4 -3.6M96.1 291.6l-5.9 -3.3M94.4 292.0l-2.5 4.5M94.4 292.0l-4.5 -2.5M92.6 292.5l-3.5 -2.0M89.1 293.5l-3.9 -2.2M87.4 294.0l-1.6 2.8M106.3 295.7l-3.9 -3.8M104.4 295.7l-3.6 3.7M102.5 295.8l-4.4 -4.3M96.8 295.9l-4.1 4.2M92.9 295.9l-2.5 -2.4M91.0 296.0l-3.6 -3.5M53.0 254.7l-2.9 4.2M49.4 255.3l-3.1 4.4M45.8 255.9l-2.7 -1.9M81.2 124.6l-4.9 -4.7M79.2 124.7l-3.2 3.4M75.3 124.8l-2.7 2.8M69.4 124.9l-3.4 3.5M70.3 202.8l-5.6 5.3M68.4 202.8l-3.9 -4.1M64.7 202.7l-4.3 4.1M62.8 202.6l-3.7 -3.9M60.9 202.6l-3.3 3.1M59.1 202.5l-2.5 2.4M57.2 202.5l-3.5 -3.6M73.9 167.5l-5.4 3.6M73.9 167.5l-3.6 -5.4M66.2 165.9l-2.6 -3.9M64.3 165.5l-4.4 2.9M60.5 164.7l-3.1 2.0M60.5 164.7l-2.0 -3.1M117.9 37.0l-6.4 5.8M117.9 37.0l-5.8 -6.4M116.0 37.0l-4.2 3.8M114.2 36.9l-3.7 3.4M104.8 36.5l-3.1 -3.4M102.9 36.4l-3.3 -3.6M63.1 242.9l-4.4 7.7M63.1 242.9l-7.7 -4.4M53.9 245.4l-2.4 4.1M50.2 246.4l-1.6 2.8M86.1 99.4l-6.6 3.9M82.6 98.5l-3.8 2.3M80.8 98.0l-5.4 3.2M80.8 98.0l-3.2 -5.4M78.1 137.4l-3.0 -3.7M76.2 137.2l-2.8 -3.3M72.3 136.8l-3.4 2.8M72.3 136.8l-2.8 -3.4M66.4 136.3l-2.6 -3.2M80.7 152.8l-3.9 3.2M80.7 152.8l-3.2 -3.9M78.9 152.6l-4.7 3.9M71.5 151.9l-3.2 -3.8M75.2 281.9l-3.8 7.4M69.4 283.7l-2.6 5.0M67.4 284.3l-2.2 4.3M65.5 284.9l-2.3 4.5M65.5 284.9l-4.5 -2.3M96.0 66.4l-3.2 -4.9M94.1 66.0l-4.2 2.8M94.1 66.0l-2.8 -4.2M92.3 65.6l-3.1 -4.8M86.8 64.4l-3.4 2.2M68.9 274.1l-6.3 -4.4M59.5 275.7l-2.4 3.4M88.7 110.4l-4.4 4.1M86.8 110.3l-4.9 4.6M75.4 110.0l-3.0 2.8M73.5 109.9l-3.6 -3.9M71.6 109.8l-2.9 2.7M92.9 116.3l-4.2 4.7M92.9 116.3l-4.7 -4.2M87.0 116.6l-4.6 5.2M85.0 116.7l-4.3 4.7M83.0 116.9l-3.4 -3.0M79.0 117.1l-2.7 3.0M72.2 284.1l-2.9 5.3M72.2 284.1l-5.3 -2.9M68.5 285.1l-2.3 4.2M60.8 202.9l-3.3 7.7M60.8 202.9l-7.7 -3.3M71.6 280.6l-3.8 3.4M71.6 280.6l-3.4 -3.8M69.6 280.5l-5.0 4.5M65.6 280.3l-4.3 3.9M61.6 280.0l-2.5 -2.7M59.6 279.9l-2.6 2.3M59.6 279.9l-2.3 -2.6M66.7 250.2l-3.5 5.9M66.7 250.2l-5.9 -3.5M59.1 252.1l-3.4 5.7M53.4 253.6l-1.6 2.7M104.4 58.1l-4.6 -2.3M100.9 59.3l-6.9 -3.5M97.5 60.4l-2.6 5.1M95.7 60.9l-2.6 5.1M94.0 61.5l-4.9 -2.5M87.1 63.7l-4.2 -2.1M74.8 280.4l-4.4 -6.6M71.0 279.6l-6.4 4.2M61.6 277.7l-3.3 2.2M53.8 242.3l-4.4 -6.0M42.7 240.6l-2.8 2.1M42.7 240.6l-2.1 -2.8M54.2 227.4l-4.5 -2.9M50.4 228.3l-3.7 -2.4M91.9 92.0l-3.3 -4.3M89.8 91.7l-4.7 3.6M87.7 91.4l-5.3 4.0M83.6 90.9l-2.7 -3.6M81.5 132.9l-2.6 -4.7M79.7 132.4l-4.0 2.2M72.5 130.4l-4.4 2.5M70.7 129.9l-3.1 1.8M67.1 128.9l-2.1 -3.8M54.8 200.6l-3.5 2.1M53.1 200.1l-3.7 2.3M77.3 162.6l-6.8 4.8M77.3 162.6l-4.8 -6.8M69.6 161.3l-3.1 -4.3M62.0 217.7l-5.8 -5.8M60.1 217.7l-3.7 3.6M60.1 217.7l-3.6 -3.7M58.2 217.7l-5.2 5.2M58.2 217.7l-5.2 -5.2M56.3 217.7l-4.6 4.5M54.5 217.7l-4.5 4.5M50.7 217.7l-3.0 -3.0M78.7 67.9l-2.0 3.5M114.0 29.7l-5.2 -5.5M112.1 29.7l-4.7 4.4M110.3 29.6l-5.0 -5.3M108.4 29.6l-5.3 5.0M108.4 29.6l-5.0 -5.3M101.1 29.4l-3.5 3.3M101.1 29.4l-3.3 -3.5M105.6 50.3l-6.1 4.4M102.0 49.7l-3.1 -4.2M100.2 49.4l-2.7 -3.7M96.6 48.8l-2.8 -3.9M93.0 48.3l-2.6 -3.6M75.1 155.8l-4.6 -5.7M73.2 155.6l-4.0 3.2M67.5 154.9l-3.6 2.8M67.5 154.9l-2.8 -3.6M65.7 154.7l-3.4 2.7M54.1 204.9l-3.1 4.0M117.5 30.8l-5.1 5.1M117.5 30.8l-5.1 -5.1M113.8 30.8l-4.3 4.3M113.8 30.8l-4.3 -4.3M106.5 30.7l-3.2 3.2M106.5 30.7l-3.2 -3.2M104.7 30.7l-2.7 -2.8M66.2 266.8l-3.1 4.0M53.6 268.5l-2.5 3.2M77.4 154.3l-6.0 -2.6M71.8 156.5l-2.3 5.2M44.0 230.6l-1.6 3.0M84.1 112.3l-6.0 -3.9M116.5 30.7l-5.7 -4.0M114.6 31.1l-2.9 4.2M114.6 31.1l-4.2 -2.9M108.8 32.1l-5.3 -3.7M102.9 33.1l-2.6 3.7M91.7 88.0l-4.8 -2.1M83.0 91.4l-3.1 -1.3M56.5 260.4l-3.2 7.1M52.9 261.8l-1.6 3.6M52.9 261.8l-3.6 -1.6M94.4 86.4l-3.1 -4.4M92.6 86.0l-4.3 -6.3M83.5 84.4l-2.8 2.0M94.6 53.5l-3.7 5.3M94.6 53.5l-5.3 -3.7M64.8 209.2l-3.2 6.0M62.8 209.8l-4.6 -2.5M57.1 211.6l-2.9 5.4M57.1 211.6l-5.4 -2.9M53.2 212.7l-2.0 3.8M91.7 79.4l-3.5 -3.3M89.9 79.5l-4.7 -4.4M88.1 79.6l-4.4 -4.1M82.7 79.7l-4.0 4.3M80.9 79.8l-3.4 3.6M97.3 64.9l-2.5 -4.4M95.4 64.4l-2.8 -5.0M93.6 63.9l-3.2 -5.5M88.1 62.4l-5.0 2.9M84.5 61.4l-2.5 -4.3M73.4 152.7l-5.1 5.2M69.7 152.8l-5.0 5.1M62.4 152.9l-2.3 -2.2M83.6 126.7l-5.9 -3.4M81.7 127.2l-4.0 7.0M79.9 127.7l-2.6 4.6M76.2 128.7l-2.9 5.1M76.2 128.7l-5.1 -2.9M74.4 129.2l-2.1 3.7M70.7 130.2l-3.1 -1.8M78.9 134.2l-2.9 5.2M71.1 136.3l-4.5 -2.6M69.5 142.0l-5.1 -2.4M64.4 143.9l-1.8 3.9M105.9 44.8l-5.8 -3.3M102.3 45.8l-4.1 -2.3M98.8 46.8l-2.3 4.1M98.8 46.8l-4.1 -2.3" stroke="#2f9a32" stroke-width="1.0" fill="none"/><path d="M117.8 18.9l-5.1 -3.5M115.9 19.2l-4.8 -3.3M111.9 20.0l-2.7 -1.8M119.8 19.1l-3.4 3.6M116.1 19.2l-4.1 4.3M117.9 16.1l-2.4 4.8M117.9 16.1l-4.8 -2.4M111.0 18.4l-5.1 -2.6M108.4 36.7l-6.9 -3.4M104.9 37.9l-2.0 4.2M103.1 38.5l-6.7 -3.3M96.1 40.9l-1.6 3.2M94.4 41.5l-2.9 -1.4M107.3 36.7l-3.6 6.0M105.5 37.2l-2.9 4.8M99.9 38.6l-5.6 -3.4M94.4 40.0l-3.0 -1.8M92.6 40.5l-1.6 2.7M113.9 39.9l-3.8 -3.7M110.0 40.0l-4.5 -4.4M108.1 40.0l-5.0 5.1M104.2 40.1l-4.5 -4.4M102.2 40.1l-3.1 3.2M96.3 40.2l-2.5 -2.5M99.2 63.7l-4.6 -3.1M95.6 64.4l-6.0 -4.1M92.0 65.1l-3.5 5.2M83.1 66.8l-3.4 -2.3M79.5 67.5l-2.0 2.9M102.8 65.7l-3.7 4.1M102.8 65.7l-4.1 -3.7M100.9 65.8l-5.3 5.8M97.1 66.0l-3.2 3.5M91.5 66.3l-4.6 5.0M89.6 66.4l-2.8 -2.5M85.9 66.6l-3.0 -2.7M84.0 66.7l-3.3 3.6M84.0 66.7l-3.6 -3.3M82.1 66.8l-2.3 2.5M82.1 66.8l-2.5 -2.3M93.7 65.0l-3.3 3.7M93.7 65.0l-3.7 -3.3M86.4 65.4l-4.5 -3.9M82.8 65.7l-3.0 3.4M82.8 65.7l-3.4 -3.0M81.0 65.8l-3.1 -2.7M79.2 65.9l-2.7 3.0M82.9 93.5l-7.1 -3.9M81.1 94.1l-2.6 4.7M77.4 95.1l-4.4 -2.4M70.2 97.2l-2.7 5.0M70.2 97.2l-5.0 -2.7M64.8 98.8l-2.9 -1.6M62.9 99.3l-3.6 -2.0M82.3 93.2l-2.9 4.2M80.5 93.5l-6.5 -4.5M78.7 93.9l-4.7 -3.3M76.9 94.2l-3.8 5.5M75.1 94.5l-2.6 3.8M66.1 96.2l-4.9 -3.4M64.3 96.5l-3.1 4.5M58.9 97.5l-2.3 3.4M58.9 97.5l-3.4 -2.3M81.6 101.0l-5.0 6.0M75.9 101.5l-5.6 -4.7M72.2 101.9l-3.2 -2.7M60.8 102.9l-2.5 3.0M60.8 102.9l-3.0 -2.5M57.0 103.3l-1.9 2.3M89.7 116.3l-3.2 3.3M85.9 116.3l-3.3 3.4M84.0 116.3l-3.7 3.8M78.3 116.4l-3.7 3.8M78.3 116.4l-3.8 -3.7M76.4 116.5l-3.0 -2.9M91.3 116.3l-4.0 3.7M91.3 116.3l-3.7 -4.0M89.4 116.2l-4.0 3.7M82.0 116.0l-3.6 -3.9M74.6 115.7l-2.3 2.1M84.4 110.7l-3.7 7.2M84.4 110.7l-7.2 -3.7M80.6 111.9l-1.9 3.7M76.9 113.2l-4.7 -2.4M75.0 113.8l-4.4 -2.2M71.2 115.0l-2.2 4.3M81.8 129.0l-4.9 5.9M76.2 129.5l-4.1 5.0M74.4 129.7l-3.5 4.3M72.5 129.8l-4.2 -3.5M66.9 130.4l-3.5 -2.9M65.1 130.6l-2.1 2.6M83.5 131.4l-3.3 3.9M81.7 131.5l-5.3 6.3M79.8 131.7l-3.8 -3.2M76.0 132.0l-4.1 4.9M74.2 132.2l-4.2 5.1M72.3 132.4l-3.0 3.6M72.3 132.4l-3.6 -3.0M68.6 132.7l-3.6 -3.0M62.9 133.2l-2.4 2.8M88.2 128.9l-6.4 -5.7M86.4 129.0l-5.6 -4.9M73.4 129.8l-4.2 4.8M73.4 129.8l-4.8 -4.2M71.6 129.9l-3.3 -3.0M69.7 130.0l-2.5 2.8M62.3 130.5l-2.5 -2.2M74.1 149.8l-3.7 6.8M68.8 151.3l-5.6 -3.1M65.2 152.4l-4.4 -2.4M61.7 153.4l-2.3 4.2M56.4 155.0l-3.4 -1.9M51.1 156.5l-1.9 3.5M49.3 157.0l-4.5 -2.5M47.5 157.6l-3.4 -1.9M44.0 158.6l-1.5 2.8M75.2 154.7l-5.9 -4.9M67.8 155.3l-3.7 4.4M62.3 155.9l-3.7 4.4M62.3 155.9l-4.4 -3.7M55.0 156.6l-3.5 4.2M51.4 156.9l-4.1 -3.4M45.9 157.4l-3.5 -2.9M73.6 151.0l-3.4 4.6M71.7 151.3l-5.2 -3.8M69.8 151.6l-3.6 5.0M68.0 151.9l-3.1 4.2M66.1 152.2l-3.0 4.1M66.1 152.2l-4.1 -3.0M62.4 152.8l-4.2 -3.1M60.5 153.1l-3.2 4.4M58.6 153.3l-3.7 -2.7M45.6 155.4l-3.1 -2.3M86.0 165.1l-6.0 -4.1M84.2 165.4l-4.2 -2.9M76.8 166.8l-2.9 4.1M75.0 167.1l-2.6 3.7M69.5 168.1l-3.0 -2.1M87.0 168.5l-3.1 4.9M79.6 170.2l-2.9 4.6M77.8 170.6l-3.8 -2.4M76.0 171.0l-4.1 -2.6M72.3 171.8l-2.8 4.4M72.3 171.8l-4.4 -2.8M85.4 164.7l-7.5 -3.7M76.1 167.9l-4.2 -2.1M74.2 168.5l-2.5 5.1M72.3 169.1l-2.0 4.0M72.3 169.1l-4.0 -2.0M55.6 179.2l-3.8 5.3M50.0 180.1l-6.3 -4.6M38.7 182.0l-2.7 3.7M31.2 183.2l-2.3 3.1M31.2 183.2l-3.1 -2.3M29.3 183.5l-1.9 2.6M25.6 184.1l-2.1 2.8M60.4 174.6l-4.9 -2.9M58.6 175.1l-5.3 -3.1M49.7 177.4l-3.9 6.6M47.9 177.8l-3.8 6.5M39.0 180.1l-3.1 5.2M35.5 181.0l-2.1 3.5M31.9 181.9l-2.9 4.9M28.4 182.9l-2.1 3.5M26.6 183.3l-2.9 -1.7M23.0 184.2l-2.6 -1.5M57.3 176.8l-3.8 6.8M48.3 179.3l-6.5 -3.7M46.5 179.8l-3.5 6.1M42.9 180.8l-3.1 5.5M42.9 180.8l-5.5 -3.1M41.1 181.3l-3.3 5.8M32.1 183.8l-2.5 4.3M32.1 183.8l-4.3 -2.5M30.3 184.3l-3.5 -2.0M74.4 201.8l-3.3 4.5M67.0 202.9l-3.6 4.9M67.0 202.9l-4.9 -3.6M61.5 203.8l-4.3 -3.2M59.7 204.1l-3.7 -2.7M57.9 204.3l-3.5 4.8M66.9 206.4l-4.5 4.1M66.9 206.4l-4.1 -4.5M65.1 206.3l-4.7 4.3M63.3 206.2l-2.9 -3.1M59.7 206.1l-3.8 3.5M57.9 206.0l-3.6 3.2M52.5 205.7l-3.6 3.3M50.7 205.6l-3.1 2.8M76.5 201.2l-2.7 4.5M72.9 202.1l-3.0 5.1M72.9 202.1l-5.1 -3.0M71.1 202.6l-2.6 4.4M71.1 202.6l-4.4 -2.6M69.4 203.0l-2.2 3.7M69.4 203.0l-3.7 -2.2M67.6 203.5l-2.8 4.7M65.8 203.9l-2.1 3.6M62.3 204.9l-2.8 4.8M56.9 206.2l-2.5 4.2M55.2 206.7l-1.6 2.7M54.2 225.3l-4.7 -3.1M48.7 226.4l-4.1 6.3M43.1 227.6l-4.2 -2.7M41.3 227.9l-3.1 4.7M39.5 228.3l-2.7 4.0M30.3 230.2l-4.1 -2.7M28.4 230.6l-4.1 -2.7M19.2 232.5l-3.6 -2.3M58.5 225.0l-4.7 -3.4M51.1 226.1l-5.2 -3.9M49.3 226.3l-2.9 3.9M47.5 226.6l-3.4 4.6M40.1 227.7l-4.9 -3.6M38.3 228.0l-3.6 -2.7M27.3 229.6l-2.6 -1.9M25.4 229.9l-4.1 -3.0M21.7 230.4l-1.9 2.5M62.6 231.4l-4.1 4.0M51.7 231.3l-5.3 5.1M48.0 231.3l-3.6 3.5M42.5 231.2l-4.6 4.5M40.7 231.2l-2.8 -2.8M37.0 231.1l-2.9 2.8M35.2 231.1l-3.1 3.0M33.3 231.1l-2.7 2.7M26.0 231.0l-2.9 2.8M22.3 230.9l-3.0 3.0M41.5 254.3l-2.7 3.1M37.7 254.5l-2.6 3.0M35.8 254.7l-2.1 2.4M32.0 254.9l-2.8 3.2M55.9 254.1l-4.5 6.7M48.5 255.5l-3.0 4.5M48.5 255.5l-4.5 -3.0M44.8 256.2l-4.1 -2.8M42.9 256.6l-3.3 4.9M41.1 256.9l-2.7 4.0M35.5 258.0l-2.7 4.1M54.2 253.3l-4.2 5.1M50.6 253.7l-4.4 -3.6M46.9 254.0l-3.2 3.9M41.4 254.6l-3.7 4.5M41.4 254.6l-4.5 -3.7M37.8 254.9l-2.4 3.0M63.6 271.3l-5.0 -2.9M61.8 271.8l-4.2 -2.5M60.0 272.3l-2.4 4.1M58.2 272.7l-2.5 4.2M56.4 273.2l-4.1 -2.4M54.6 273.7l-1.7 2.8M52.8 274.1l-2.3 4.0M52.8 274.1l-4.0 -2.3M51.0 274.6l-3.8 -2.2M75.6 274.5l-5.9 -5.3M73.8 274.6l-4.5 -4.0M70.2 274.8l-4.2 4.7M68.4 274.9l-3.7 -3.3M64.8 275.1l-4.3 -3.8M54.0 275.7l-2.3 -2.0M52.1 275.8l-2.9 -2.6M75.2 269.1l-3.5 4.6M71.4 269.6l-4.6 -3.5M67.7 270.1l-2.9 3.8M65.9 270.4l-4.0 5.2M60.3 271.2l-3.2 4.2M58.4 271.4l-3.1 -2.3M56.6 271.7l-2.3 3.1M56.6 271.7l-3.1 -2.3M54.7 271.9l-2.5 3.3M49.1 272.7l-2.0 2.7M85.8 286.0l-4.1 -3.4M72.7 287.2l-2.7 3.3M67.1 287.7l-2.2 2.7M89.4 287.4l-3.4 3.9M87.5 287.5l-5.6 -5.0M81.9 287.8l-3.5 -3.1M78.2 288.1l-4.2 4.7M74.4 288.3l-2.6 -2.3M88.8 285.7l-7.3 -4.4M85.2 286.6l-6.2 -3.7M81.5 287.5l-4.8 -2.9M72.5 289.7l-2.5 4.1M106.5 293.2l-2.8 4.6M101.2 294.5l-2.4 4.0M97.6 295.4l-4.2 -2.6M94.1 296.2l-3.3 -2.0M90.6 297.1l-2.5 4.1M88.8 297.5l-4.1 -2.5M101.4 290.1l-3.9 6.8M99.6 290.6l-3.3 5.8M90.9 293.0l-1.9 3.4M87.4 294.0l-2.8 -1.6M85.7 294.5l-2.7 -1.5M100.6 295.8l-4.5 -4.3M92.9 295.9l-2.4 2.5M89.1 296.0l-2.8 2.9M89.1 296.0l-2.9 -2.8M53.0 254.7l-4.2 -2.9M51.2 255.0l-2.9 4.1M51.2 255.0l-4.1 -2.9M47.6 255.6l-3.7 -2.6M79.2 124.7l-3.4 -3.2M68.4 202.8l-4.1 3.9M66.5 202.7l-5.1 4.8M66.5 202.7l-4.8 -5.1M64.7 202.7l-4.1 -4.3M55.3 202.4l-2.4 2.2M75.9 167.9l-2.8 -4.2M72.0 167.1l-4.3 2.9M72.0 167.1l-2.9 -4.3M70.1 166.7l-2.9 -4.4M58.6 164.3l-2.2 -3.3M114.2 36.9l-3.4 -3.7M112.3 36.8l-4.4 -4.8M106.7 36.5l-2.4 -2.6M104.8 36.5l-3.4 3.1M101.0 36.3l-2.3 2.1M61.3 243.4l-6.3 -3.7M57.6 244.4l-2.0 3.5M57.6 244.4l-3.5 -2.0M55.7 244.9l-3.2 5.4M50.2 246.4l-2.8 -1.6M89.6 100.2l-4.5 2.7M77.3 97.2l-4.2 2.5M77.3 97.2l-2.5 -4.2M75.5 96.7l-3.9 2.4M73.8 96.3l-1.6 -2.6M78.1 137.4l-3.7 3.0M74.2 137.0l-3.3 2.7M75.2 152.3l-4.5 3.7M75.2 152.3l-3.7 -4.5M69.7 151.8l-2.6 -3.1M71.3 283.1l-4.8 -2.5M96.0 66.4l-4.9 3.2M92.3 65.6l-4.8 3.1M90.5 65.2l-5.2 3.4M88.6 64.8l-4.3 2.8M88.6 64.8l-2.8 -4.3M84.9 64.0l-2.8 1.8M67.0 274.4l-2.9 4.1M63.3 275.1l-4.0 5.6M63.3 275.1l-5.6 -4.0M61.4 275.4l-2.9 4.1M59.5 275.7l-3.4 -2.4M79.2 110.1l-4.5 4.2M77.3 110.0l-4.1 3.8M73.5 109.9l-3.9 3.6M88.9 116.5l-4.6 5.1M83.0 116.9l-3.0 3.4M81.0 117.0l-3.3 -3.0M79.0 117.1l-3.0 -2.7M77.0 117.2l-2.0 2.3M77.7 282.5l-2.8 5.1M77.7 282.5l-5.1 -2.8M75.8 283.0l-4.9 -2.7M74.0 283.5l-4.9 -2.7M70.3 284.6l-3.6 -2.0M68.5 285.1l-4.2 -2.3M64.9 286.2l-1.4 2.4M59.2 203.5l-2.8 6.8M59.2 203.5l-6.8 -2.8M55.8 204.9l-5.4 -2.3M54.1 205.6l-1.7 3.9M54.1 205.6l-3.9 -1.7M52.4 206.3l-4.4 -1.9M50.8 207.0l-1.5 3.5M49.1 207.7l-4.2 -1.8M69.6 280.5l-4.5 -5.0M67.6 280.4l-4.3 -4.8M61.6 280.0l-2.7 2.5M61.0 251.7l-2.6 4.4M59.1 252.1l-5.7 -3.4M57.2 252.6l-3.2 -1.9M55.3 253.1l-4.3 -2.6M100.9 59.3l-3.5 6.9M99.2 59.8l-2.5 4.9M97.5 60.4l-5.1 -2.6M95.7 60.9l-5.1 -2.6M94.0 61.5l-2.5 4.9M92.3 62.1l-5.0 -2.6M69.1 279.2l-4.7 3.1M67.3 278.8l-3.3 -4.9M65.4 278.5l-2.1 -3.2M63.5 278.1l-4.5 3.0M55.6 242.6l-7.1 5.3M51.9 242.0l-4.5 3.3M51.9 242.0l-3.3 -4.5M65.7 224.9l-5.7 -3.6M63.8 225.3l-6.1 -3.9M56.1 227.0l-3.0 4.7M52.3 227.8l-3.5 -2.2M50.4 228.3l-2.4 3.7M87.7 91.4l-4.0 -5.3M85.6 91.1l-2.6 2.0M83.3 133.4l-2.7 -4.9M76.1 131.4l-3.1 -5.6M74.3 130.9l-5.2 2.9M70.7 129.9l-1.8 -3.1M68.9 129.4l-3.3 1.9M67.1 128.9l-3.8 2.1M60.1 201.8l-3.0 -5.0M58.4 201.4l-3.6 -5.9M56.6 201.0l-3.2 -5.3M53.1 200.1l-2.3 -3.7M71.5 161.6l-3.7 2.6M71.5 161.6l-2.6 -3.7M65.8 160.6l-4.0 2.8M65.8 160.6l-2.8 -4.0M54.5 217.7l-4.5 -4.5M50.7 217.7l-3.0 3.0M92.2 64.4l-5.1 -3.0M88.3 65.4l-6.4 -3.7M82.5 66.9l-2.1 3.7M80.6 67.4l-2.4 4.1M112.1 29.7l-4.4 -4.7M104.8 29.5l-2.9 2.8M104.8 29.5l-2.8 -2.9M102.9 29.4l-4.0 -4.2M109.2 50.8l-4.8 -6.7M103.8 50.0l-5.8 4.2M93.0 48.3l-3.6 2.6M80.7 156.4l-3.6 -4.5M78.8 156.2l-5.0 3.9M78.8 156.2l-3.9 -5.0M76.9 156.0l-4.7 3.8M52.1 205.2l-4.0 -3.1M48.0 205.7l-2.4 3.2M104.7 30.7l-2.8 2.7M62.6 267.3l-3.1 4.1M62.6 267.3l-4.1 -3.1M55.4 268.3l-3.4 4.5M55.4 268.3l-4.5 -3.4M53.6 268.5l-3.2 -2.5M51.8 268.8l-3.1 4.1M51.8 268.8l-4.1 -3.1M50.0 269.0l-2.4 3.1M77.4 154.3l-2.6 6.0M73.6 155.7l-1.7 4.0M73.6 155.7l-4.0 -1.7M71.8 156.5l-5.2 -2.3M68.1 157.9l-1.5 3.3M68.1 157.9l-3.3 -1.5M66.2 158.7l-3.9 -1.7M51.7 228.2l-6.9 -3.6M49.8 228.8l-2.2 4.2M49.8 228.8l-4.2 -2.2M85.9 111.9l-6.1 -4.0M82.3 112.7l-3.4 5.3M78.6 113.4l-2.7 4.1M76.8 113.8l-3.0 4.6M75.0 114.2l-2.8 4.3M116.5 30.7l-4.0 5.7M108.8 32.1l-3.7 5.3M104.9 32.7l-3.3 -2.3M102.9 33.1l-3.7 -2.6M101.0 33.4l-4.2 -2.9M99.1 33.8l-2.7 -1.9M93.5 87.3l-1.8 4.1M93.5 87.3l-4.1 -1.8M90.0 88.7l-1.8 4.0M88.2 89.4l-2.0 4.6M86.5 90.1l-3.2 -1.4M84.8 90.7l-1.2 2.8M84.8 90.7l-2.8 -1.2M58.3 259.7l-3.6 7.9M54.7 261.1l-2.5 5.5M54.7 261.1l-5.5 -2.5M51.0 262.4l-2.3 4.9M96.2 86.7l-3.9 -5.7M94.4 86.4l-4.4 3.1M92.6 86.0l-6.3 4.3M85.3 84.7l-2.8 -4.1M92.6 53.8l-6.7 -4.6M90.7 54.2l-3.7 5.3M86.7 54.9l-2.4 3.5M84.7 55.3l-2.2 3.2M66.7 208.7l-6.0 -3.2M59.0 211.0l-4.9 -2.6M84.5 79.7l-3.6 -3.4M82.7 79.7l-4.3 -4.0M95.4 64.4l-5.0 2.8M90.0 62.9l-3.8 2.2M90.0 62.9l-2.2 -3.8M88.1 62.4l-2.9 -5.0M73.4 152.7l-5.2 -5.1M71.5 152.8l-4.0 -3.8M66.0 152.9l-3.0 3.1M64.2 152.9l-4.2 4.3M64.2 152.9l-4.3 -4.2M62.4 152.9l-2.2 2.3M60.6 153.0l-2.1 -2.0M72.6 129.7l-1.6 2.8M70.7 130.2l-1.8 3.1M78.9 134.2l-5.2 -2.9M76.9 134.7l-3.9 6.8M76.9 134.7l-6.8 -3.9M75.0 135.2l-3.8 6.7M73.1 135.8l-6.0 -3.4M69.2 136.8l-2.8 5.0M76.3 139.5l-4.8 -2.2M74.6 140.1l-2.5 5.5M72.9 140.7l-5.7 -2.6M67.8 142.6l-2.4 5.2M67.8 142.6l-5.2 -2.4M66.1 143.2l-1.8 3.8M100.6 46.3l-6.0 -3.4M97.0 47.3l-2.3 4.1" stroke="#3aa83a" stroke-width="1.0" fill="none"/><path d="M113.9 19.6l-3.0 -2.0M111.9 20.0l-1.8 2.7M121.6 19.1l-6.0 6.2M119.8 19.1l-3.6 -3.4M118.0 19.2l-3.7 -3.6M116.1 19.2l-4.3 -4.1M110.6 19.3l-2.4 2.4M110.6 19.3l-2.4 -2.4M108.8 19.3l-3.0 -2.9M116.2 16.7l-5.4 -2.7M114.5 17.3l-3.0 5.9M107.5 19.6l-3.3 -1.6M106.6 37.3l-5.8 -2.8M101.4 39.1l-4.7 -2.3M99.6 39.7l-5.6 -2.7M97.9 40.3l-5.1 -2.5M92.6 42.1l-1.8 3.8M109.1 36.3l-5.6 -3.3M105.5 37.2l-4.8 -2.9M103.6 37.7l-4.2 -2.5M98.1 39.1l-4.4 -2.6M92.6 40.5l-2.7 -1.6M113.9 39.9l-3.7 3.8M112.0 40.0l-5.5 5.6M112.0 40.0l-5.6 -5.5M108.1 40.0l-5.1 -5.0M100.2 40.2l-3.3 -3.2M98.3 40.2l-3.4 3.5M88.5 65.8l-3.6 5.3M86.7 66.1l-2.6 3.9M81.3 67.2l-2.5 3.7M81.3 67.2l-3.7 -2.5M79.5 67.5l-2.9 -2.0M99.0 65.9l-3.9 -3.6M95.3 66.1l-3.1 -2.8M89.6 66.4l-2.5 2.8M87.8 66.5l-3.6 -3.2M85.9 66.6l-2.7 3.0M80.3 66.9l-2.2 -2.0M100.9 64.5l-4.5 5.1M97.3 64.8l-5.7 -5.0M91.9 65.1l-3.5 -3.1M84.6 65.5l-3.5 -3.1M79.3 94.6l-3.0 5.4M77.4 95.1l-2.4 4.4M73.8 96.1l-2.4 4.4M68.4 97.7l-3.3 -1.8M66.6 98.2l-2.1 3.7M66.6 98.2l-3.7 -2.1M62.9 99.3l-2.0 3.6M61.1 99.8l-3.5 -1.9M59.3 100.3l-3.5 -1.9M84.1 92.9l-4.8 7.0M80.5 93.5l-4.5 6.5M73.3 94.9l-3.9 5.7M73.3 94.9l-5.7 -3.9M71.5 95.2l-3.3 4.8M62.5 96.8l-2.4 3.4M57.1 97.8l-4.1 -2.8M79.7 101.2l-5.6 -4.6M77.8 101.3l-6.4 -5.3M74.0 101.7l-3.0 3.6M74.0 101.7l-3.6 -3.0M70.3 102.0l-4.0 4.8M68.4 102.2l-3.8 4.6M66.5 102.4l-4.6 -3.8M57.0 103.3l-2.3 -1.9M55.1 103.5l-2.2 2.6M93.5 116.2l-6.1 6.3M91.6 116.2l-4.0 4.2M89.7 116.3l-3.3 -3.2M87.8 116.3l-3.0 3.1M80.2 116.4l-3.6 -3.5M74.5 116.5l-3.2 3.3M74.5 116.5l-3.3 -3.2M89.4 116.2l-3.7 -4.0M82.0 116.0l-3.9 3.6M80.1 115.9l-3.1 2.9M80.1 115.9l-2.9 -3.1M78.3 115.8l-3.7 3.4M76.4 115.8l-3.9 3.6M85.5 128.6l-3.6 4.3M85.5 128.6l-4.3 -3.6M76.2 129.5l-5.0 -4.1M63.2 130.7l-2.7 -2.2M83.5 131.4l-3.9 -3.3M77.9 131.9l-5.7 -4.8M70.4 132.5l-3.7 4.4M70.4 132.5l-4.4 -3.7M61.1 133.4l-3.3 -2.8M59.2 133.5l-3.1 -2.6M84.5 129.1l-4.5 -4.0M82.7 129.2l-5.0 5.7M80.8 129.4l-4.3 -3.8M75.3 129.7l-3.3 3.8M67.9 130.2l-4.2 -3.7M64.1 130.4l-3.3 -2.9M74.1 149.8l-6.8 -3.7M68.8 151.3l-3.1 5.6M67.0 151.8l-3.1 5.6M61.7 153.4l-4.2 -2.3M59.9 153.9l-3.1 5.7M54.6 155.5l-4.3 -2.4M51.1 156.5l-3.5 -1.9M49.3 157.0l-2.5 4.5M77.0 154.5l-5.4 6.6M77.0 154.5l-6.6 -5.4M71.5 155.0l-3.0 3.6M69.7 155.2l-4.0 -3.3M66.0 155.5l-4.1 -3.4M58.7 156.2l-2.5 3.1M55.0 156.6l-4.2 -3.5M53.2 156.7l-3.5 -2.9M77.3 150.4l-3.6 4.9M77.3 150.4l-4.9 -3.6M68.0 151.9l-4.2 -3.1M64.2 152.5l-3.7 5.1M64.2 152.5l-5.1 -3.7M62.4 152.8l-3.1 4.2M58.6 153.3l-2.7 3.7M54.9 153.9l-2.6 3.6M54.9 153.9l-3.6 -2.6M53.0 154.2l-4.0 -2.9M51.2 154.5l-4.3 -3.1M47.4 155.1l-1.7 2.4M84.2 165.4l-2.9 4.2M80.5 166.1l-3.4 4.9M75.0 167.1l-3.7 -2.6M85.2 168.9l-4.4 6.9M83.3 169.3l-2.5 3.9M81.5 169.7l-3.0 4.8M81.5 169.7l-4.8 -3.0M74.1 171.4l-2.6 4.1M70.5 172.2l-1.8 2.9M87.2 164.0l-4.8 -2.4M81.6 165.9l-6.6 -3.3M79.8 166.6l-5.0 -2.5M53.7 179.5l-4.0 -2.9M51.8 179.8l-5.3 -3.9M48.1 180.4l-4.5 6.2M46.2 180.7l-3.5 4.8M42.5 181.3l-4.1 -3.0M35.0 182.6l-3.0 4.2M25.6 184.1l-2.8 -2.1M56.8 175.5l-7.0 -4.1M51.5 176.9l-5.0 -3.0M47.9 177.8l-6.5 -3.8M42.6 179.2l-4.9 -2.9M39.0 180.1l-5.2 -3.1M35.5 181.0l-3.5 -2.1M33.7 181.5l-4.4 -2.6M30.1 182.4l-2.5 4.2M24.8 183.8l-2.0 3.4M24.8 183.8l-3.4 -2.0M23.0 184.2l-1.5 2.6M57.3 176.8l-6.8 -3.8M53.7 177.8l-3.7 6.6M53.7 177.8l-6.6 -3.7M46.5 179.8l-6.1 -3.5M44.7 180.3l-2.4 4.2M39.3 181.8l-2.2 3.8M30.3 184.3l-2.0 3.5M28.5 184.8l-3.4 -1.9M26.7 185.3l-3.7 -2.1M24.9 185.8l-1.9 3.3M24.9 185.8l-3.3 -1.9M23.1 186.3l-2.6 -1.5M65.2 203.2l-3.3 -2.4M63.4 203.5l-4.2 -3.1M61.5 203.8l-3.2 4.3M59.7 204.1l-2.7 3.7M54.2 204.9l-3.2 4.3M50.5 205.5l-2.1 2.9M75.9 206.8l-4.8 -5.2M74.1 206.7l-4.3 -4.7M70.5 206.6l-5.5 5.0M70.5 206.6l-5.0 -5.5M61.5 206.1l-4.2 3.8M61.5 206.1l-3.8 -4.2M57.9 206.0l-3.2 -3.6M54.3 205.8l-2.8 2.6M76.5 201.2l-4.5 -2.7M74.7 201.7l-4.9 -2.9M64.0 204.4l-3.0 5.0M62.3 204.9l-4.8 -2.8M60.5 205.3l-2.7 4.5M60.5 205.3l-4.5 -2.7M58.7 205.8l-4.7 -2.8M54.2 225.3l-3.1 4.7M52.3 225.7l-6.1 -4.0M46.8 226.8l-5.2 -3.4M43.1 227.6l-2.7 4.2M39.5 228.3l-4.0 -2.7M37.6 228.7l-3.1 4.7M35.8 229.1l-2.1 3.2M32.1 229.8l-4.2 -2.8M24.7 231.3l-2.6 4.0M22.9 231.7l-2.4 3.6M58.5 225.0l-3.4 4.7M54.8 225.5l-4.4 -3.2M47.5 226.6l-4.6 -3.4M45.6 226.9l-2.8 3.8M43.8 227.2l-3.4 -2.5M41.9 227.4l-4.4 -3.2M40.1 227.7l-3.6 4.9M34.6 228.5l-3.7 -2.7M23.6 230.2l-2.6 3.6M21.7 230.4l-2.5 -1.9M62.6 231.4l-4.0 -4.1M60.8 231.4l-3.8 3.7M57.2 231.4l-5.1 5.0M57.2 231.4l-5.0 -5.1M55.3 231.3l-3.8 3.7M53.5 231.3l-5.5 -5.6M51.7 231.3l-5.1 -5.3M46.2 231.2l-3.3 -3.4M42.5 231.2l-4.5 -4.6M40.7 231.2l-2.8 2.8M38.8 231.1l-3.4 3.3M35.2 231.1l-3.0 -3.1M33.3 231.1l-2.7 -2.7M29.7 231.0l-3.0 2.9M27.8 231.0l-2.4 2.4M22.3 230.9l-3.0 -3.0M58.6 253.1l-5.7 -5.0M56.7 253.2l-4.1 4.7M49.1 253.8l-5.1 -4.5M47.2 253.9l-3.9 4.5M47.2 253.9l-4.5 -3.9M45.3 254.0l-3.7 -3.2M43.4 254.1l-2.9 -2.6M39.6 254.4l-3.7 4.2M37.7 254.5l-3.0 -2.6M30.1 255.0l-1.8 2.1M30.1 255.0l-2.1 -1.8M46.6 255.9l-2.8 4.1M46.6 255.9l-4.1 -2.8M42.9 256.6l-4.9 -3.3M31.8 258.7l-1.7 2.6M54.2 253.3l-5.1 -4.2M46.9 254.0l-3.9 -3.2M45.1 254.2l-3.4 4.1M45.1 254.2l-4.1 -3.4M37.8 254.9l-3.0 -2.4M34.1 255.3l-2.9 3.6M32.3 255.5l-3.0 3.6M32.3 255.5l-3.6 -3.0M30.5 255.7l-2.0 2.5M74.4 268.5l-3.0 5.1M70.8 269.5l-3.2 5.5M70.8 269.5l-5.5 -3.2M65.4 270.9l-3.9 -2.3M58.2 272.7l-4.2 -2.5M51.0 274.6l-2.2 3.8M49.2 275.1l-3.8 -2.3M47.4 275.6l-2.2 3.7M77.4 274.4l-4.5 5.1M72.0 274.7l-5.8 -5.2M70.2 274.8l-4.7 -4.2M64.8 275.1l-3.8 4.3M63.0 275.2l-3.4 -3.0M61.2 275.3l-3.9 4.4M59.4 275.4l-3.3 -2.9M52.1 275.8l-2.6 2.9M50.3 275.9l-2.8 -2.5M64.0 270.6l-4.6 -3.5M62.1 270.9l-3.6 4.8M62.1 270.9l-4.8 -3.6M52.8 272.2l-2.8 3.7M51.0 272.4l-2.6 -2.0M49.1 272.7l-2.7 -2.0M82.1 286.3l-3.6 -3.0M76.5 286.8l-3.5 4.2M70.8 287.3l-2.3 2.8M69.0 287.5l-3.7 4.5M67.1 287.7l-2.7 -2.2M85.6 287.6l-4.8 5.5M83.8 287.7l-3.4 3.9M80.0 288.0l-3.3 3.7M80.0 288.0l-3.7 -3.3M78.2 288.1l-4.7 -4.2M76.3 288.2l-2.6 2.9M74.4 288.3l-2.3 2.6M72.6 288.4l-2.4 2.7M72.6 288.4l-2.7 -2.4M70.7 288.5l-2.8 3.1M83.3 287.0l-4.4 -2.6M81.5 287.5l-2.9 4.8M72.5 289.7l-4.1 -2.5M70.7 290.2l-2.0 3.4M68.9 290.6l-3.9 -2.4M104.7 293.6l-6.2 -3.8M102.9 294.1l-2.7 4.5M102.9 294.1l-4.5 -2.7M99.4 294.9l-2.4 4.0M95.9 295.8l-3.2 5.2M95.9 295.8l-5.2 -3.2M92.3 296.7l-2.9 4.8M88.8 297.5l-2.5 4.1M99.6 290.6l-5.8 -3.3M97.9 291.1l-3.6 6.4M90.9 293.0l-3.4 -1.9M85.7 294.5l-1.5 2.7M104.4 295.7l-3.7 -3.6M100.6 295.8l-4.3 4.5M98.7 295.8l-3.6 -3.4M91.0 296.0l-3.5 3.6M58.4 253.8l-3.2 4.6M58.4 253.8l-4.6 -3.2M56.6 254.1l-4.7 6.7M54.8 254.4l-2.5 3.6M83.2 124.6l-4.8 -4.6M77.2 124.7l-4.8 5.0M77.2 124.7l-5.0 -4.8M73.3 124.8l-3.5 -3.3M71.3 124.9l-3.6 3.8M72.1 202.9l-5.5 -5.8M62.8 202.6l-3.9 3.7M60.9 202.6l-3.1 -3.3M57.2 202.5l-3.6 3.5M75.9 167.9l-4.2 2.8M68.2 166.3l-4.7 3.1M68.2 166.3l-3.1 -4.7M66.2 165.9l-3.9 2.6M58.6 164.3l-3.3 2.2M110.4 36.7l-2.9 -3.2M108.5 36.6l-4.4 -4.8M106.7 36.5l-2.6 2.4M102.9 36.4l-3.6 3.3M101.0 36.3l-2.1 -2.3M61.3 243.4l-3.7 6.3M59.4 243.9l-3.8 -2.2M53.9 245.4l-4.1 -2.4M87.9 99.8l-4.7 2.8M86.1 99.4l-3.9 -6.6M79.0 97.6l-3.1 1.9M75.5 96.7l-2.4 -3.9M73.8 96.3l-2.6 1.6M80.1 137.6l-6.1 5.1M80.1 137.6l-5.1 -6.1M76.2 137.2l-3.3 2.8M68.4 136.5l-2.6 2.1M77.0 152.4l-4.5 3.8M77.0 152.4l-3.8 -4.5M73.4 152.1l-4.4 3.7M71.5 151.9l-3.8 3.2M69.7 151.8l-3.1 2.6M67.9 151.6l-2.3 1.9M67.9 151.6l-1.9 -2.3M75.2 281.9l-7.4 -3.8M71.3 283.1l-2.5 4.8M69.4 283.7l-5.0 -2.6M90.5 65.2l-3.4 -5.2M84.9 64.0l-1.8 -2.8M83.1 63.7l-2.3 -3.6M81.2 63.3l-2.0 -3.0M65.1 274.8l-4.0 -2.8M57.6 276.1l-3.1 -2.2M88.7 110.4l-4.1 -4.4M86.8 110.3l-4.6 -4.9M81.1 110.1l-4.5 4.2M79.2 110.1l-4.2 -4.5M57.5 204.2l-2.4 5.8M57.5 204.2l-5.8 -2.4M52.4 206.3l-1.9 4.4M50.8 207.0l-3.5 -1.5M65.6 280.3l-3.9 -4.3M63.6 280.2l-3.8 3.4M63.6 280.2l-3.4 -3.8M64.8 250.7l-3.6 6.1M64.8 250.7l-6.1 -3.6M62.9 251.2l-3.7 6.2M62.9 251.2l-6.2 -3.7M57.2 252.6l-1.9 3.2M53.4 253.6l-2.7 -1.6M51.5 254.1l-1.7 2.8M51.5 254.1l-2.8 -1.7M102.6 58.7l-5.2 -2.6M99.2 59.8l-4.9 -2.5M88.8 63.2l-1.5 3.0M88.8 63.2l-3.0 -1.5M87.1 63.7l-2.1 4.2M65.4 278.5l-3.2 2.1M63.5 278.1l-3.0 -4.5M50.1 241.7l-4.6 3.4M50.1 241.7l-3.4 -4.6M65.7 224.9l-3.6 5.7M61.9 225.7l-6.5 -4.1M58.0 226.6l-2.2 3.4M94.0 92.3l-4.7 3.6M91.9 92.0l-4.3 3.3M89.8 91.7l-3.6 -4.7M85.6 91.1l-2.0 -2.6M83.6 90.9l-3.6 2.7M81.5 132.9l-4.7 2.6M76.1 131.4l-5.6 3.1M72.5 130.4l-2.5 -4.4M56.6 201.0l-5.3 3.2M54.8 200.6l-2.1 -3.5M51.3 199.7l-3.1 1.9M51.3 199.7l-1.9 -3.1M49.6 199.3l-2.5 1.5M49.6 199.3l-1.5 -2.5M73.4 162.0l-3.8 2.7M69.6 161.3l-4.3 3.1M67.7 161.0l-3.1 2.2M67.7 161.0l-2.2 -3.1M62.0 217.7l-5.8 5.8M52.6 217.7l-2.4 -2.5M48.9 217.7l-3.1 -3.2M92.2 64.4l-3.0 5.1M90.2 64.9l-2.6 4.5M106.6 29.5l-4.6 4.4M106.6 29.5l-4.4 -4.6M99.2 29.3l-2.5 2.4M99.2 29.3l-2.4 -2.5M110.9 51.1l-6.1 4.4M110.9 51.1l-4.4 -6.1M109.2 50.8l-6.7 4.8M107.4 50.6l-4.6 3.4M107.4 50.6l-3.4 -4.6M103.8 50.0l-4.2 -5.8M102.0 49.7l-4.2 3.1M100.2 49.4l-3.7 2.7M98.4 49.1l-2.3 -3.2M94.8 48.5l-3.3 2.4M94.8 48.5l-2.4 -3.3M76.9 156.0l-3.8 -4.7M75.1 155.8l-5.7 4.6M73.2 155.6l-3.2 -4.0M69.4 155.1l-3.4 -4.3M65.7 154.7l-2.7 -3.4M119.4 30.8l-4.2 -4.2M115.7 30.8l-5.2 -5.2M112.0 30.8l-3.9 3.9M112.0 30.8l-3.9 -3.9M110.2 30.8l-2.7 2.7M110.2 30.8l-2.7 -2.7M108.3 30.7l-2.8 2.8M68.0 266.6l-3.6 4.7M64.4 267.1l-4.8 -3.7M60.8 267.5l-4.6 -3.5M59.0 267.8l-2.8 3.7M59.0 267.8l-3.7 -2.8M57.2 268.0l-3.1 -2.4M50.0 269.0l-3.1 -2.4M69.9 157.2l-1.9 4.4M66.2 158.7l-1.7 3.9M47.8 229.4l-2.5 4.8M47.8 229.4l-4.8 -2.5M42.0 231.2l-1.4 2.6M87.7 111.5l-3.3 5.1M87.7 111.5l-5.1 -3.3M85.9 111.9l-4.0 6.1M80.5 113.1l-4.4 -2.8M78.6 113.4l-4.1 -2.7M75.0 114.2l-4.3 -2.8M73.2 114.6l-3.9 -2.5M112.6 31.4l-4.4 6.2M110.7 31.7l-4.3 6.0M110.7 31.7l-6.0 -4.3M99.1 33.8l-1.9 2.7M97.0 86.0l-2.1 4.7M97.0 86.0l-4.7 -2.1M95.2 86.7l-3.2 7.4M95.2 86.7l-7.4 -3.2M88.2 89.4l-4.6 -2.0M86.5 90.1l-1.4 3.2M83.0 91.4l-1.3 3.1M58.3 259.7l-7.9 -3.6M49.2 263.1l-3.4 -1.5M96.2 86.7l-5.7 3.9M90.8 85.7l-4.7 3.3M90.8 85.7l-3.3 -4.7M87.1 85.0l-4.4 3.0M85.3 84.7l-4.1 2.8M90.7 54.2l-5.3 -3.7M88.7 54.5l-2.8 4.1M64.8 209.2l-6.0 -3.2M62.8 209.8l-2.5 4.6M59.0 211.0l-2.6 4.9M55.2 212.2l-2.0 3.8M53.2 212.7l-3.8 -2.0M91.7 79.4l-3.3 3.5M79.0 79.9l-2.1 2.3M79.0 79.9l-2.3 -2.1M77.2 79.9l-3.0 3.2M86.3 61.9l-4.0 2.3M84.5 61.4l-4.3 2.5M69.7 152.8l-5.1 -5.0M67.9 152.8l-4.4 4.6M67.9 152.8l-4.6 -4.4M60.6 153.0l-2.0 2.1M83.6 126.7l-3.4 5.9M81.7 127.2l-7.0 -4.0M78.1 128.2l-4.9 -2.8M73.1 135.8l-3.4 6.0M71.1 136.3l-2.6 4.5M69.2 136.8l-5.0 -2.8M67.3 137.4l-1.9 3.4M65.3 137.9l-1.4 2.5M76.3 139.5l-2.2 4.8M71.2 141.3l-3.0 6.5M66.1 143.2l-3.8 -1.8M64.4 143.9l-3.9 -1.8M105.9 44.8l-3.3 5.8M104.1 45.3l-4.7 -2.7M97.0 47.3l-4.1 -2.3M95.2 47.8l-2.0 3.6M95.2 47.8l-3.6 -2.0" stroke="#22862a" stroke-width="1.0" fill="none"/><path d="M117.9 16.1Q111.8 16.2 105.8 20.2M93.5 116.2Q83.1 114.4 72.6 116.5M87.2 164.0Q77.9 165.2 68.6 170.4M60.4 174.6Q39.9 177.9 19.5 185.1M76.5 201.2Q64.0 202.4 51.6 207.6M58.5 225.0Q39.2 225.8 19.9 230.7M88.8 285.7Q77.0 286.6 65.3 291.5M106.5 293.2Q96.7 293.6 87.0 298.0M106.3 295.7Q96.8 293.9 87.2 296.0M58.4 253.8Q51.2 253.0 44.0 256.3M72.1 202.9Q62.8 200.6 53.5 202.4M75.2 281.9Q69.4 281.7 63.5 285.6M68.9 274.1Q62.3 273.2 55.7 276.4M88.7 110.4Q79.2 108.1 69.7 109.8M60.8 202.9Q54.1 203.6 47.4 208.3M55.6 242.6Q48.2 239.4 40.9 240.3M94.0 92.3Q87.7 89.4 81.5 90.6M79.2 162.9Q70.6 159.5 61.9 160.0M62.0 217.7Q54.5 215.7 47.0 217.7M110.9 51.1Q101.1 47.5 91.2 48.0M58.1 204.4Q52.1 203.2 46.0 206.0M77.4 154.3Q70.8 154.8 64.3 159.4M51.7 228.2Q45.9 228.0 40.1 231.8M97.0 86.0Q89.1 87.0 81.3 92.1M96.2 86.7Q88.9 83.4 81.7 84.0M83.6 126.7Q76.2 126.7 68.9 130.7" stroke="#48b540" stroke-width="1.3" fill="none"/><path d="M109.1 36.3Q99.9 36.6 90.7 40.9M99.2 63.7Q88.5 63.8 77.7 67.9M100.9 64.5Q89.2 63.3 77.4 66.0M82.9 93.5Q70.2 95.2 57.5 100.8M91.3 116.3Q82.0 114.0 72.7 115.6M85.4 131.2Q71.4 130.5 57.3 133.7M74.1 149.8Q58.2 152.4 42.2 159.1M86.0 165.1Q75.9 164.9 65.8 168.8M59.6 253.3Q44.8 254.2 29.9 259.1M77.4 274.4Q63.0 273.2 48.5 276.0M75.2 269.1Q60.3 269.2 45.4 273.2M91.2 287.3Q78.2 286.1 65.1 288.9M75.9 167.9Q66.2 163.9 56.6 163.9M80.7 152.8Q73.4 150.1 66.0 151.4M77.7 282.5Q70.3 282.6 63.0 286.7M65.7 224.9Q57.1 224.8 48.5 228.7M92.2 64.4Q84.5 64.4 76.8 68.5M87.7 111.5Q79.5 111.2 71.4 115.0M58.3 259.7Q52.0 260.1 45.6 264.5M97.3 64.9Q90.0 60.9 82.7 60.9M73.4 152.7Q66.0 150.9 58.7 153.0M76.3 139.5Q69.5 140.0 62.7 144.5M105.9 44.8Q99.7 44.6 93.4 48.3" stroke="#2f9a32" stroke-width="1.3" fill="none"/><path d="M113.9 39.9Q104.2 38.1 94.4 40.2M86.3 110.1Q77.8 110.9 69.3 115.6M87.4 128.4Q74.4 127.7 61.4 130.9M77.0 154.5Q60.5 154.0 44.0 157.6M77.3 150.4Q60.5 151.1 43.7 155.7M74.4 201.8Q61.5 201.8 48.7 205.7M54.2 225.3Q35.8 227.1 17.4 232.9M85.8 286.0Q73.6 285.1 61.5 288.2M117.9 37.0Q108.5 34.6 99.2 36.2M63.1 242.9Q55.7 242.9 48.3 246.9M96.0 66.4Q87.7 62.6 79.4 62.9M92.9 116.3Q84.0 114.8 75.0 117.3M71.6 280.6Q64.6 278.2 57.6 279.8M80.7 156.4Q72.2 153.4 63.8 154.5M119.4 30.8Q111.1 28.8 102.8 30.7M68.0 266.6Q58.1 265.9 48.2 269.2M94.6 53.5Q88.7 52.5 82.8 55.6M66.7 208.7Q59.0 209.0 51.3 213.3" stroke="#22862a" stroke-width="1.3" fill="none"/><path d="M88 74 L110 85" stroke="#e8e86a" stroke-width="2" opacity=".35" filter="url(#bl2)"/><circle cx="88.5" cy="74.7" r="5.5" fill="#f4ec60" opacity=".75" filter="url(#bl)"/><path d="M84.5 75.7 l8 -2 M88.5 70.7 v8" stroke="#fffab0" stroke-width=".7" opacity=".8"/><circle cx="88.5" cy="74.7" r="1.6" fill="#fffbd8"/><circle cx="98.7" cy="79.8" r="5.5" fill="#f4ec60" opacity=".75" filter="url(#bl)"/><path d="M94.7 80.8 l8 -2 M98.7 75.8 v8" stroke="#fffab0" stroke-width=".7" opacity=".8"/><circle cx="98.7" cy="79.8" r="1.6" fill="#fffbd8"/><circle cx="109.2" cy="85.1" r="5.5" fill="#f4ec60" opacity=".75" filter="url(#bl)"/><path d="M105.2 86.1 l8 -2 M109.2 81.1 v8" stroke="#fffab0" stroke-width=".7" opacity=".8"/><circle cx="109.2" cy="85.1" r="1.6" fill="#fffbd8"/><path d="M75 118 L110 138" stroke="#e8e86a" stroke-width="2" opacity=".35" filter="url(#bl2)"/><circle cx="74.0" cy="116.6" r="5.5" fill="#f4ec60" opacity=".75" filter="url(#bl)"/><path d="M70.0 117.6 l8 -2 M74.0 112.6 v8" stroke="#fffab0" stroke-width=".7" opacity=".8"/><circle cx="74.0" cy="116.6" r="1.6" fill="#fffbd8"/><circle cx="86.8" cy="124.3" r="5.5" fill="#f4ec60" opacity=".75" filter="url(#bl)"/><path d="M82.8 125.3 l8 -2 M86.8 120.3 v8" stroke="#fffab0" stroke-width=".7" opacity=".8"/><circle cx="86.8" cy="124.3" r="1.6" fill="#fffbd8"/><circle cx="98.2" cy="130.8" r="5.5" fill="#f4ec60" opacity=".75" filter="url(#bl)"/><path d="M94.2 131.8 l8 -2 M98.2 126.8 v8" stroke="#fffab0" stroke-width=".7" opacity=".8"/><circle cx="98.2" cy="130.8" r="1.6" fill="#fffbd8"/><circle cx="110.4" cy="139.0" r="5.5" fill="#f4ec60" opacity=".75" filter="url(#bl)"/><path d="M106.4 140.0 l8 -2 M110.4 135.0 v8" stroke="#fffab0" stroke-width=".7" opacity=".8"/><circle cx="110.4" cy="139.0" r="1.6" fill="#fffbd8"/><path d="M63 167 L110 186" stroke="#e8e86a" stroke-width="2" opacity=".35" filter="url(#bl2)"/><circle cx="62.1" cy="168.0" r="5.5" fill="#f4ec60" opacity=".75" filter="url(#bl)"/><path d="M58.1 169.0 l8 -2 M62.1 164.0 v8" stroke="#fffab0" stroke-width=".7" opacity=".8"/><circle cx="62.1" cy="168.0" r="1.6" fill="#fffbd8"/><circle cx="73.8" cy="171.3" r="5.5" fill="#f4ec60" opacity=".75" filter="url(#bl)"/><path d="M69.8 172.3 l8 -2 M73.8 167.3 v8" stroke="#fffab0" stroke-width=".7" opacity=".8"/><circle cx="73.8" cy="171.3" r="1.6" fill="#fffbd8"/><circle cx="86.4" cy="177.1" r="5.5" fill="#f4ec60" opacity=".75" filter="url(#bl)"/><path d="M82.4 178.1 l8 -2 M86.4 173.1 v8" stroke="#fffab0" stroke-width=".7" opacity=".8"/><circle cx="86.4" cy="177.1" r="1.6" fill="#fffbd8"/><circle cx="97.7" cy="182.0" r="5.5" fill="#f4ec60" opacity=".75" filter="url(#bl)"/><path d="M93.7 183.0 l8 -2 M97.7 178.0 v8" stroke="#fffab0" stroke-width=".7" opacity=".8"/><circle cx="97.7" cy="182.0" r="1.6" fill="#fffbd8"/><circle cx="109.0" cy="185.8" r="5.5" fill="#f4ec60" opacity=".75" filter="url(#bl)"/><path d="M105.0 186.8 l8 -2 M109.0 181.8 v8" stroke="#fffab0" stroke-width=".7" opacity=".8"/><circle cx="109.0" cy="185.8" r="1.6" fill="#fffbd8"/><path d="M58 203 L110 235" stroke="#e8e86a" stroke-width="2" opacity=".35" filter="url(#bl2)"/><circle cx="57.3" cy="203.3" r="5.5" fill="#f4ec60" opacity=".75" filter="url(#bl)"/><path d="M53.3 204.3 l8 -2 M57.3 199.3 v8" stroke="#fffab0" stroke-width=".7" opacity=".8"/><circle cx="57.3" cy="203.3" r="1.6" fill="#fffbd8"/><circle cx="71.6" cy="210.0" r="5.5" fill="#f4ec60" opacity=".75" filter="url(#bl)"/><path d="M67.6 211.0 l8 -2 M71.6 206.0 v8" stroke="#fffab0" stroke-width=".7" opacity=".8"/><circle cx="71.6" cy="210.0" r="1.6" fill="#fffbd8"/><circle cx="83.2" cy="219.2" r="5.5" fill="#f4ec60" opacity=".75" filter="url(#bl)"/><path d="M79.2 220.2 l8 -2 M83.2 215.2 v8" stroke="#fffab0" stroke-width=".7" opacity=".8"/><circle cx="83.2" cy="219.2" r="1.6" fill="#fffbd8"/><circle cx="97.6" cy="227.6" r="5.5" fill="#f4ec60" opacity=".75" filter="url(#bl)"/><path d="M93.6 228.6 l8 -2 M97.6 223.6 v8" stroke="#fffab0" stroke-width=".7" opacity=".8"/><circle cx="97.6" cy="227.6" r="1.6" fill="#fffbd8"/><circle cx="109.9" cy="234.3" r="5.5" fill="#f4ec60" opacity=".75" filter="url(#bl)"/><path d="M105.9 235.3 l8 -2 M109.9 230.3 v8" stroke="#fffab0" stroke-width=".7" opacity=".8"/><circle cx="109.9" cy="234.3" r="1.6" fill="#fffbd8"/><path d="M42 246 L110 282" stroke="#e8e86a" stroke-width="2" opacity=".35" filter="url(#bl2)"/><circle cx="42.6" cy="245.7" r="5.5" fill="#f4ec60" opacity=".75" filter="url(#bl)"/><path d="M38.6 246.7 l8 -2 M42.6 241.7 v8" stroke="#fffab0" stroke-width=".7" opacity=".8"/><circle cx="42.6" cy="245.7" r="1.6" fill="#fffbd8"/><circle cx="53.0" cy="252.7" r="5.5" fill="#f4ec60" opacity=".75" filter="url(#bl)"/><path d="M49.0 253.7 l8 -2 M53.0 248.7 v8" stroke="#fffab0" stroke-width=".7" opacity=".8"/><circle cx="53.0" cy="252.7" r="1.6" fill="#fffbd8"/><circle cx="64.7" cy="258.9" r="5.5" fill="#f4ec60" opacity=".75" filter="url(#bl)"/><path d="M60.7 259.9 l8 -2 M64.7 254.9 v8" stroke="#fffab0" stroke-width=".7" opacity=".8"/><circle cx="64.7" cy="258.9" r="1.6" fill="#fffbd8"/><circle cx="75.6" cy="262.8" r="5.5" fill="#f4ec60" opacity=".75" filter="url(#bl)"/><path d="M71.6 263.8 l8 -2 M75.6 258.8 v8" stroke="#fffab0" stroke-width=".7" opacity=".8"/><circle cx="75.6" cy="262.8" r="1.6" fill="#fffbd8"/><circle cx="86.8" cy="270.1" r="5.5" fill="#f4ec60" opacity=".75" filter="url(#bl)"/><path d="M82.8 271.1 l8 -2 M86.8 266.1 v8" stroke="#fffab0" stroke-width=".7" opacity=".8"/><circle cx="86.8" cy="270.1" r="1.6" fill="#fffbd8"/><circle cx="99.0" cy="276.9" r="5.5" fill="#f4ec60" opacity=".75" filter="url(#bl)"/><path d="M95.0 277.9 l8 -2 M99.0 272.9 v8" stroke="#fffab0" stroke-width=".7" opacity=".8"/><circle cx="99.0" cy="276.9" r="1.6" fill="#fffbd8"/><circle cx="109.5" cy="283.4" r="5.5" fill="#f4ec60" opacity=".75" filter="url(#bl)"/><path d="M105.5 284.4 l8 -2 M109.5 279.4 v8" stroke="#fffab0" stroke-width=".7" opacity=".8"/><circle cx="109.5" cy="283.4" r="1.6" fill="#fffbd8"/></svg>
</body></html>
